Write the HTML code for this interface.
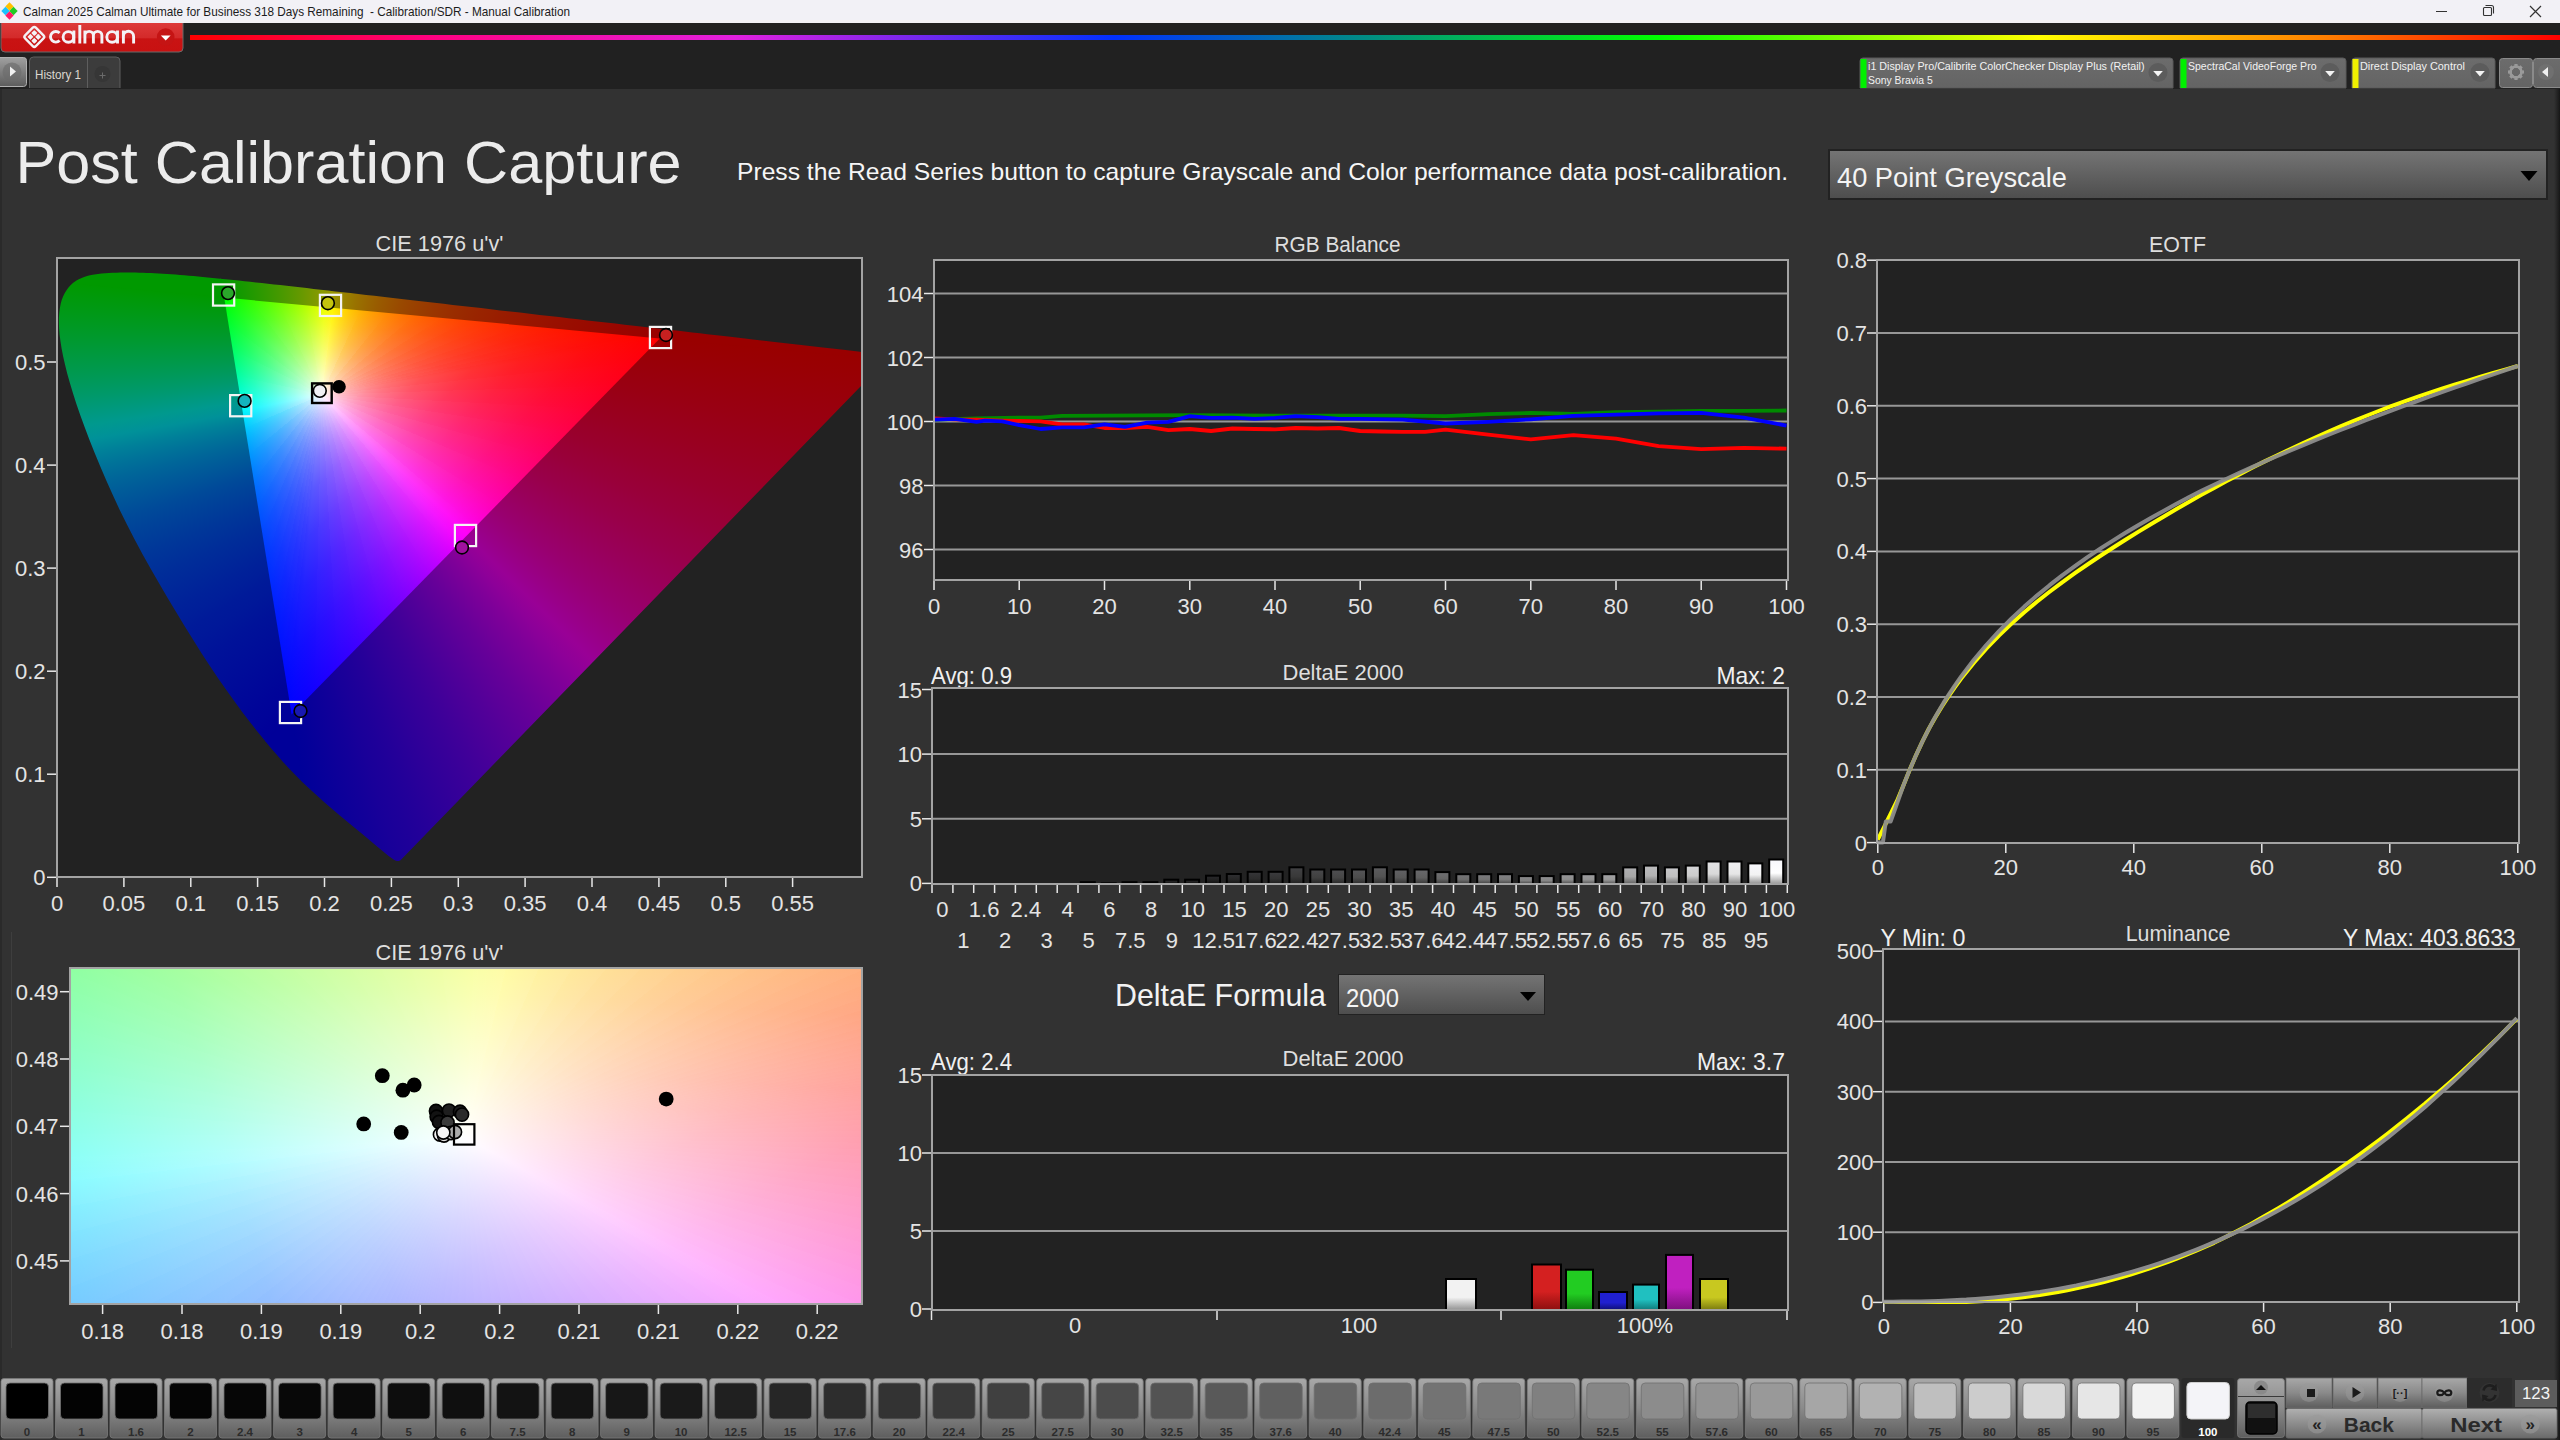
<!DOCTYPE html><html><head><meta charset="utf-8"><title>Calman</title><style>html,body{margin:0;padding:0;background:#323232;overflow:hidden}#root{position:relative;width:2560px;height:1440px;overflow:hidden}svg{position:absolute;left:0;top:0}text{font-family:"Liberation Sans",sans-serif}</style></head><body><div id="root"><svg width="2560" height="1440"><rect x="0.0" y="0.0" width="2560.0" height="1440.0" fill="#323232"/><rect x="0.0" y="23.0" width="2560.0" height="66.0" fill="#212121"/><rect x="0.0" y="89.0" width="2.0" height="1351.0" fill="#2a2a2a"/><rect x="11.0" y="932.0" width="1.0" height="416.0" fill="#3e3e3e"/><rect x="56.0" y="257.0" width="807.0" height="621.0" fill="#222222"/><rect x="69.0" y="967.0" width="794.0" height="338.0" fill="#222222"/><rect x="933.0" y="259.0" width="856.0" height="322.0" fill="#222222"/><rect x="931.0" y="687.0" width="858.0" height="198.0" fill="#222222"/><rect x="931.0" y="1074.0" width="858.0" height="237.0" fill="#222222"/><rect x="1876.0" y="259.0" width="644.0" height="585.0" fill="#222222"/><rect x="1882.0" y="948.0" width="638.0" height="355.0" fill="#222222"/></svg><div style="position:absolute;left:58px;top:259px;width:803px;height:617px;overflow:hidden"><div style="position:absolute;left:0;top:0;width:100%;height:100%;clip-path:polygon(342.5px 601.2px,342.3px 601.3px,342.1px 601.5px,341.8px 601.6px,341.4px 601.8px,341.0px 601.9px,340.5px 601.9px,339.8px 601.9px,339.0px 601.9px,338.0px 601.7px,336.3px 600.9px,333.8px 599.3px,330.3px 596.7px,325.8px 593.0px,320.0px 588.2px,312.9px 582.2px,304.3px 575.1px,293.9px 566.6px,281.5px 556.3px,266.9px 543.8px,250.1px 528.5px,245.6px 524.2px,240.8px 519.6px,235.9px 514.6px,230.6px 509.1px,225.0px 502.9px,219.0px 496.1px,212.6px 488.7px,205.9px 480.6px,198.9px 472.0px,191.7px 462.7px,184.2px 452.9px,176.6px 442.5px,168.7px 431.5px,160.6px 419.9px,152.4px 407.7px,144.0px 394.9px,135.6px 381.5px,127.0px 367.8px,118.4px 353.6px,109.8px 339.2px,101.2px 324.5px,92.7px 309.7px,84.4px 294.9px,76.4px 280.0px,68.7px 265.1px,61.5px 250.4px,54.7px 235.8px,48.3px 221.5px,42.3px 207.6px,36.7px 194.0px,31.5px 180.9px,26.7px 168.3px,22.3px 156.3px,18.4px 144.9px,14.9px 134.1px,11.9px 123.9px,9.2px 114.4px,7.0px 105.5px,5.1px 97.2px,3.6px 89.5px,2.5px 82.4px,1.6px 75.7px,1.1px 69.6px,0.9px 63.8px,0.9px 58.5px,1.3px 53.6px,1.9px 49.0px,2.7px 44.7px,3.8px 40.8px,5.2px 37.2px,6.8px 33.9px,8.7px 30.9px,10.7px 28.2px,13.0px 25.8px,15.4px 23.7px,18.0px 21.8px,20.8px 20.2px,23.7px 18.9px,26.8px 17.7px,29.9px 16.8px,33.2px 16.0px,36.5px 15.4px,40.0px 14.9px,43.5px 14.5px,47.2px 14.2px,50.8px 14.0px,54.6px 13.8px,58.4px 13.7px,62.1px 13.6px,66.0px 13.6px,69.8px 13.6px,73.6px 13.6px,77.4px 13.6px,81.2px 13.7px,85.0px 13.8px,88.9px 14.0px,92.9px 14.1px,96.8px 14.3px,100.9px 14.5px,105.0px 14.8px,109.1px 15.0px,113.3px 15.3px,117.6px 15.6px,122.0px 16.0px,126.4px 16.3px,130.9px 16.7px,135.5px 17.1px,140.2px 17.5px,144.9px 18.0px,149.7px 18.4px,154.7px 18.9px,159.7px 19.4px,164.8px 19.9px,170.0px 20.5px,175.4px 21.0px,180.8px 21.6px,186.4px 22.2px,192.1px 22.8px,197.9px 23.4px,203.8px 24.1px,209.8px 24.7px,216.0px 25.4px,222.2px 26.1px,228.6px 26.8px,235.2px 27.6px,241.9px 28.3px,248.7px 29.1px,255.6px 29.9px,262.7px 30.7px,270.0px 31.5px,277.3px 32.4px,284.8px 33.2px,292.5px 34.1px,300.3px 35.0px,308.2px 35.9px,316.3px 36.8px,324.5px 37.8px,332.8px 38.7px,341.3px 39.7px,349.9px 40.7px,358.6px 41.7px,367.5px 42.7px,376.5px 43.8px,385.6px 44.8px,394.8px 45.9px,404.2px 47.0px,413.6px 48.0px,423.1px 49.1px,432.7px 50.2px,442.4px 51.4px,452.2px 52.5px,462.0px 53.6px,471.8px 54.7px,481.6px 55.9px,491.3px 57.0px,500.9px 58.1px,510.4px 59.2px,519.9px 60.3px,529.3px 61.4px,538.6px 62.5px,548.0px 63.5px,557.4px 64.6px,566.6px 65.7px,575.8px 66.7px,584.7px 67.8px,593.5px 68.8px,602.1px 69.7px,610.4px 70.7px,618.6px 71.6px,626.5px 72.5px,634.3px 73.4px,641.9px 74.3px,649.3px 75.2px,656.5px 76.0px,663.4px 76.8px,670.2px 77.6px,676.7px 78.3px,682.9px 79.1px,689.0px 79.8px,694.8px 80.4px,721.1px 83.5px,743.3px 86.0px,762.6px 88.2px,778.8px 90.1px,791.9px 91.6px,802.2px 92.8px,810.1px 93.7px,816.1px 94.4px,820.6px 94.9px,824.0px 95.3px,826.4px 95.6px,828.1px 95.8px,829.4px 95.9px,830.4px 96.0px,831.4px 96.2px,832.8px 96.3px)"><div style="position:absolute;left:0;top:0;width:100%;height:100%;background:conic-gradient(from 224.38deg at 601.8px 79.4px,#000099 0.00deg,#000199 0.94deg,#000399 1.89deg,#000499 2.88deg,#000699 3.88deg,#000899 4.91deg,#000a99 5.96deg,#000c99 7.03deg,#000e99 8.12deg,#001099 9.24deg,#001299 10.39deg,#001599 11.55deg,#001899 12.74deg,#001a99 13.95deg,#001e99 15.18deg,#002199 16.43deg,#002599 17.70deg,#002999 18.99deg,#002d99 20.30deg,#003299 21.63deg,#003799 22.97deg,#003d99 24.33deg,#004399 25.70deg,#004a99 27.09deg,#005399 28.48deg,#005c99 29.89deg,#006699 31.30deg,#007299 32.72deg,#008099 34.15deg,#009199 35.57deg,#00998e 37.00deg,#00997c 38.43deg,#00996a 39.86deg,#00995a 41.28deg,#00994b 42.69deg,#00993d 44.10deg,#00992f 45.50deg,#009922 46.89deg,#009916 48.26deg,#00990b 49.62deg,#009900 50.97deg,#009900 205.48deg,#000099 360deg);clip-path:polygon(167.1px 37.7px,-5809.1px -522.4px,-3963.6px 4745.4px,234.7px 455.9px)"></div><div style="position:absolute;left:0;top:0;width:100%;height:100%;background:conic-gradient(from 350.81deg at 233.6px 455.6px,#009900 0.00deg,#0c9900 1.45deg,#199900 2.91deg,#279900 4.39deg,#359900 5.88deg,#449900 7.38deg,#549900 8.89deg,#659900 10.42deg,#789900 11.94deg,#8b9900 13.47deg,#999300 15.01deg,#998100 16.54deg,#997200 18.07deg,#996600 19.59deg,#995b00 21.11deg,#995200 22.62deg,#994900 24.11deg,#994200 25.60deg,#993c00 27.07deg,#993600 28.52deg,#993100 29.95deg,#992c00 31.37deg,#992800 32.76deg,#992400 34.13deg,#992100 35.48deg,#991d00 36.81deg,#991a00 38.11deg,#991800 39.38deg,#991500 40.63deg,#991300 41.86deg,#991000 43.05deg,#990e00 44.22deg,#990c00 45.37deg,#990a00 46.48deg,#990900 47.57deg,#990700 48.64deg,#990500 49.68deg,#990400 50.69deg,#990300 51.68deg,#990100 52.64deg,#990000 53.57deg,#990000 206.79deg,#009900 360deg);clip-path:polygon(602.2px 80.5px,4800.5px -4209.0px,-793.3px -5885.8px,165.3px 39.5px)"></div><div style="position:absolute;left:0;top:0;width:100%;height:100%;background:conic-gradient(from 95.35deg at 166.2px 38.6px,#990000 0.00deg,#990003 1.36deg,#990007 2.78deg,#99000b 4.25deg,#99000f 5.77deg,#990013 7.35deg,#990018 8.99deg,#99001d 10.68deg,#990022 12.42deg,#990028 14.22deg,#99002d 16.08deg,#990034 17.98deg,#99003a 19.94deg,#990042 21.94deg,#990049 23.99deg,#990052 26.08deg,#99005b 28.21deg,#990065 30.36deg,#99006f 32.54deg,#99007b 34.74deg,#990088 36.95deg,#990096 39.17deg,#8d0099 41.38deg,#7f0099 43.59deg,#730099 45.79deg,#670099 47.97deg,#5d0099 50.12deg,#530099 52.24deg,#4a0099 54.32deg,#410099 56.36deg,#390099 58.36deg,#320099 60.31deg,#2b0099 62.21deg,#240099 64.06deg,#1e0099 65.85deg,#190099 67.59deg,#130099 69.28deg,#0e0099 70.90deg,#090099 72.48deg,#040099 73.99deg,#000099 75.46deg,#000099 217.73deg,#990000 360deg);clip-path:polygon(601.4px 78.4px,6577.8px 638.4px,1191.2px 6380.7px,232.6px 455.2px)"></div><div style="position:absolute;left:0;top:0;width:100%;height:100%;background:#009900;clip-path:polygon(166.2px 38.6px,-792.1px -5884.4px,-5807.6px -521.2px)"></div><div style="position:absolute;left:0;top:0;width:100%;height:100%;background:#990000;clip-path:polygon(601.8px 79.4px,6575.6px 639.2px,4798.7px -4208.5px)"></div><div style="position:absolute;left:0;top:0;width:100%;height:100%;background:#000099;clip-path:polygon(233.6px 455.6px,-3963.2px 4743.5px,1191.9px 6378.6px)"></div><div style="position:absolute;left:0;top:0;width:100%;height:100%;background:conic-gradient(from 80.56deg at 263.6px 135.6px,#ff0000 0.00deg,#ff0005 1.11deg,#ff000a 2.28deg,#ff000f 3.51deg,#ff0015 4.81deg,#ff001a 6.19deg,#ff0020 7.63deg,#ff0027 9.16deg,#ff002d 10.78deg,#ff0034 12.48deg,#ff003c 14.28deg,#ff0043 16.17deg,#ff004c 18.17deg,#ff0054 20.27deg,#ff005d 22.48deg,#ff0067 24.80deg,#ff0071 27.23deg,#ff007c 29.77deg,#ff0088 32.41deg,#ff0095 35.15deg,#ff00a2 37.98deg,#ff00b0 40.89deg,#ff00c0 43.87deg,#ff00d1 46.91deg,#ff00e3 49.98deg,#ff00f7 53.08deg,#f300ff 56.19deg,#df00ff 59.27deg,#cd00ff 62.33deg,#bc00ff 65.34deg,#ac00ff 68.29deg,#9d00ff 71.16deg,#8f00ff 73.94deg,#8200ff 76.63deg,#7600ff 79.22deg,#6a00ff 81.70deg,#6000ff 84.07deg,#5500ff 86.33deg,#4b00ff 88.49deg,#4200ff 90.53deg,#3900ff 92.48deg,#3100ff 94.32deg,#2900ff 96.07deg,#2100ff 97.73deg,#1a00ff 99.30deg,#1300ff 100.78deg,#0c00ff 102.19deg,#0600ff 103.52deg,#0000ff 104.79deg,#0002ff 105.19deg,#0004ff 105.62deg,#0006ff 106.07deg,#0008ff 106.55deg,#000bff 107.06deg,#000dff 107.60deg,#0010ff 108.17deg,#0012ff 108.78deg,#0015ff 109.43deg,#0018ff 110.13deg,#001bff 110.88deg,#001fff 111.69deg,#0022ff 112.55deg,#0026ff 113.49deg,#002aff 114.50deg,#002eff 115.60deg,#0032ff 116.80deg,#0037ff 118.10deg,#003cff 119.53deg,#0041ff 121.10deg,#0047ff 122.83deg,#004eff 124.73deg,#0054ff 126.84deg,#005cff 129.19deg,#0064ff 131.79deg,#006cff 134.70deg,#0076ff 137.94deg,#0080ff 141.55deg,#008cff 145.56deg,#0099ff 150.01deg,#00a7ff 154.89deg,#00b7ff 160.21deg,#00caff 165.90deg,#00dfff 171.91deg,#00f7ff 178.10deg,#00ffec 184.34deg,#00ffd3 190.49deg,#00ffbb 196.41deg,#00ffa4 202.00deg,#00ff8e 207.18deg,#00ff79 211.93deg,#00ff65 216.24deg,#00ff52 220.12deg,#00ff40 223.61deg,#00ff2f 226.74deg,#00ff1f 229.55deg,#00ff0f 232.07deg,#00ff00 234.34deg,#11ff00 236.88deg,#23ff00 239.71deg,#35ff00 242.84deg,#48ff00 246.32deg,#5dff00 250.16deg,#72ff00 254.40deg,#88ff00 259.04deg,#9fff00 264.07deg,#b8ff00 269.46deg,#d2ff00 275.14deg,#edff00 281.02deg,#fff500 286.98deg,#ffdc00 292.89deg,#ffc600 298.64deg,#ffb300 304.11deg,#ffa300 309.24deg,#ff9500 313.99deg,#ff8800 318.33deg,#ff7d00 322.28deg,#ff7200 325.85deg,#ff6900 329.08deg,#ff6000 331.98deg,#ff5900 334.60deg,#ff5200 336.96deg,#ff4b00 339.10deg,#ff4500 341.03deg,#ff3f00 342.79deg,#ff3a00 344.39deg,#ff3500 345.85deg,#ff3100 347.19deg,#ff2d00 348.42deg,#ff2900 349.55deg,#ff2500 350.59deg,#ff2200 351.55deg,#ff1e00 352.45deg,#ff1b00 353.28deg,#ff1800 354.06deg,#ff1500 354.78deg,#ff1300 355.46deg,#ff1000 356.09deg,#ff0e00 356.68deg,#ff0c00 357.24deg,#ff0a00 357.77deg,#ff0700 358.27deg,#ff0500 358.74deg,#ff0400 359.18deg,#ff0200 359.60deg,#ff0000 360.00deg);clip-path:polygon(601.8px 79.4px,166.2px 38.6px,233.6px 455.6px)"></div></div></div><svg style="position:absolute;left:0;top:0" width="2560" height="1440"><style>.w stop{stop-color:#fff}</style><defs><linearGradient class="w" id="wga0" gradientUnits="userSpaceOnUse" x1="321.6" y1="394.6" x2="329.8" y2="307.5"><stop offset="0" stop-opacity="1"/><stop offset="0.005" stop-opacity="0.975"/><stop offset="0.01" stop-opacity="0.951"/><stop offset="0.02" stop-opacity="0.906"/><stop offset="0.035" stop-opacity="0.844"/><stop offset="0.05" stop-opacity="0.789"/><stop offset="0.075" stop-opacity="0.708"/><stop offset="0.1" stop-opacity="0.639"/><stop offset="0.15" stop-opacity="0.527"/><stop offset="0.2" stop-opacity="0.44"/><stop offset="0.3" stop-opacity="0.315"/><stop offset="0.45" stop-opacity="0.194"/><stop offset="0.6" stop-opacity="0.116"/><stop offset="0.8" stop-opacity="0.047"/><stop offset="1" stop-opacity="0"/></linearGradient><linearGradient class="w" id="wga1" gradientUnits="userSpaceOnUse" x1="321.6" y1="394.6" x2="329.8" y2="307.5"><stop offset="0" stop-opacity="1"/><stop offset="0.005" stop-opacity="0.977"/><stop offset="0.01" stop-opacity="0.954"/><stop offset="0.02" stop-opacity="0.911"/><stop offset="0.035" stop-opacity="0.853"/><stop offset="0.05" stop-opacity="0.8"/><stop offset="0.075" stop-opacity="0.722"/><stop offset="0.1" stop-opacity="0.654"/><stop offset="0.15" stop-opacity="0.544"/><stop offset="0.2" stop-opacity="0.457"/><stop offset="0.3" stop-opacity="0.329"/><stop offset="0.45" stop-opacity="0.204"/><stop offset="0.6" stop-opacity="0.123"/><stop offset="0.8" stop-opacity="0.05"/><stop offset="1" stop-opacity="0"/></linearGradient><linearGradient class="w" id="wga2" gradientUnits="userSpaceOnUse" x1="321.6" y1="394.6" x2="329.8" y2="307.5"><stop offset="0" stop-opacity="1"/><stop offset="0.005" stop-opacity="0.978"/><stop offset="0.01" stop-opacity="0.957"/><stop offset="0.02" stop-opacity="0.917"/><stop offset="0.035" stop-opacity="0.862"/><stop offset="0.05" stop-opacity="0.811"/><stop offset="0.075" stop-opacity="0.736"/><stop offset="0.1" stop-opacity="0.67"/><stop offset="0.15" stop-opacity="0.561"/><stop offset="0.2" stop-opacity="0.475"/><stop offset="0.3" stop-opacity="0.345"/><stop offset="0.45" stop-opacity="0.216"/><stop offset="0.6" stop-opacity="0.131"/><stop offset="0.8" stop-opacity="0.053"/><stop offset="1" stop-opacity="0"/></linearGradient><linearGradient class="w" id="wga3" gradientUnits="userSpaceOnUse" x1="321.6" y1="394.6" x2="329.8" y2="307.5"><stop offset="0" stop-opacity="1"/><stop offset="0.005" stop-opacity="0.98"/><stop offset="0.01" stop-opacity="0.96"/><stop offset="0.02" stop-opacity="0.923"/><stop offset="0.035" stop-opacity="0.871"/><stop offset="0.05" stop-opacity="0.822"/><stop offset="0.075" stop-opacity="0.75"/><stop offset="0.1" stop-opacity="0.687"/><stop offset="0.15" stop-opacity="0.58"/><stop offset="0.2" stop-opacity="0.494"/><stop offset="0.3" stop-opacity="0.363"/><stop offset="0.45" stop-opacity="0.23"/><stop offset="0.6" stop-opacity="0.14"/><stop offset="0.8" stop-opacity="0.057"/><stop offset="1" stop-opacity="0"/></linearGradient><linearGradient class="w" id="wga4" gradientUnits="userSpaceOnUse" x1="321.6" y1="394.6" x2="329.8" y2="307.5"><stop offset="0" stop-opacity="1"/><stop offset="0.005" stop-opacity="0.981"/><stop offset="0.01" stop-opacity="0.963"/><stop offset="0.02" stop-opacity="0.928"/><stop offset="0.035" stop-opacity="0.88"/><stop offset="0.05" stop-opacity="0.834"/><stop offset="0.075" stop-opacity="0.766"/><stop offset="0.1" stop-opacity="0.705"/><stop offset="0.15" stop-opacity="0.6"/><stop offset="0.2" stop-opacity="0.515"/><stop offset="0.3" stop-opacity="0.382"/><stop offset="0.45" stop-opacity="0.245"/><stop offset="0.6" stop-opacity="0.15"/><stop offset="0.8" stop-opacity="0.062"/><stop offset="1" stop-opacity="0"/></linearGradient><linearGradient class="w" id="wga5" gradientUnits="userSpaceOnUse" x1="321.6" y1="394.6" x2="329.8" y2="307.5"><stop offset="0" stop-opacity="1"/><stop offset="0.005" stop-opacity="0.983"/><stop offset="0.01" stop-opacity="0.966"/><stop offset="0.02" stop-opacity="0.934"/><stop offset="0.035" stop-opacity="0.889"/><stop offset="0.05" stop-opacity="0.847"/><stop offset="0.075" stop-opacity="0.782"/><stop offset="0.1" stop-opacity="0.723"/><stop offset="0.15" stop-opacity="0.622"/><stop offset="0.2" stop-opacity="0.537"/><stop offset="0.3" stop-opacity="0.404"/><stop offset="0.45" stop-opacity="0.262"/><stop offset="0.6" stop-opacity="0.162"/><stop offset="0.8" stop-opacity="0.068"/><stop offset="1" stop-opacity="0"/></linearGradient><linearGradient class="w" id="wga6" gradientUnits="userSpaceOnUse" x1="321.6" y1="394.6" x2="329.8" y2="307.5"><stop offset="0" stop-opacity="1"/><stop offset="0.005" stop-opacity="0.985"/><stop offset="0.01" stop-opacity="0.969"/><stop offset="0.02" stop-opacity="0.94"/><stop offset="0.035" stop-opacity="0.898"/><stop offset="0.05" stop-opacity="0.859"/><stop offset="0.075" stop-opacity="0.798"/><stop offset="0.1" stop-opacity="0.743"/><stop offset="0.15" stop-opacity="0.645"/><stop offset="0.2" stop-opacity="0.562"/><stop offset="0.3" stop-opacity="0.428"/><stop offset="0.45" stop-opacity="0.282"/><stop offset="0.6" stop-opacity="0.176"/><stop offset="0.8" stop-opacity="0.074"/><stop offset="1" stop-opacity="0"/></linearGradient><linearGradient class="w" id="wga7" gradientUnits="userSpaceOnUse" x1="321.6" y1="394.6" x2="329.8" y2="307.5"><stop offset="0" stop-opacity="1"/><stop offset="0.005" stop-opacity="0.986"/><stop offset="0.01" stop-opacity="0.973"/><stop offset="0.02" stop-opacity="0.946"/><stop offset="0.035" stop-opacity="0.908"/><stop offset="0.05" stop-opacity="0.872"/><stop offset="0.075" stop-opacity="0.816"/><stop offset="0.1" stop-opacity="0.763"/><stop offset="0.15" stop-opacity="0.67"/><stop offset="0.2" stop-opacity="0.589"/><stop offset="0.3" stop-opacity="0.456"/><stop offset="0.45" stop-opacity="0.305"/><stop offset="0.6" stop-opacity="0.193"/><stop offset="0.8" stop-opacity="0.082"/><stop offset="1" stop-opacity="0"/></linearGradient><linearGradient class="w" id="wga8" gradientUnits="userSpaceOnUse" x1="321.6" y1="394.6" x2="329.8" y2="307.5"><stop offset="0" stop-opacity="1"/><stop offset="0.005" stop-opacity="0.988"/><stop offset="0.01" stop-opacity="0.976"/><stop offset="0.02" stop-opacity="0.952"/><stop offset="0.035" stop-opacity="0.918"/><stop offset="0.05" stop-opacity="0.885"/><stop offset="0.075" stop-opacity="0.834"/><stop offset="0.1" stop-opacity="0.785"/><stop offset="0.15" stop-opacity="0.697"/><stop offset="0.2" stop-opacity="0.619"/><stop offset="0.3" stop-opacity="0.487"/><stop offset="0.45" stop-opacity="0.332"/><stop offset="0.6" stop-opacity="0.213"/><stop offset="0.8" stop-opacity="0.092"/><stop offset="1" stop-opacity="0"/></linearGradient><linearGradient class="w" id="wga9" gradientUnits="userSpaceOnUse" x1="321.6" y1="394.6" x2="329.8" y2="307.5"><stop offset="0" stop-opacity="1"/><stop offset="0.005" stop-opacity="0.989"/><stop offset="0.01" stop-opacity="0.979"/><stop offset="0.02" stop-opacity="0.958"/><stop offset="0.035" stop-opacity="0.928"/><stop offset="0.05" stop-opacity="0.899"/><stop offset="0.075" stop-opacity="0.853"/><stop offset="0.1" stop-opacity="0.808"/><stop offset="0.15" stop-opacity="0.727"/><stop offset="0.2" stop-opacity="0.652"/><stop offset="0.3" stop-opacity="0.522"/><stop offset="0.45" stop-opacity="0.364"/><stop offset="0.6" stop-opacity="0.238"/><stop offset="0.8" stop-opacity="0.105"/><stop offset="1" stop-opacity="0"/></linearGradient><linearGradient class="w" id="wga10" gradientUnits="userSpaceOnUse" x1="321.6" y1="394.6" x2="329.8" y2="307.5"><stop offset="0" stop-opacity="1"/><stop offset="0.005" stop-opacity="0.991"/><stop offset="0.01" stop-opacity="0.982"/><stop offset="0.02" stop-opacity="0.964"/><stop offset="0.035" stop-opacity="0.939"/><stop offset="0.05" stop-opacity="0.913"/><stop offset="0.075" stop-opacity="0.872"/><stop offset="0.1" stop-opacity="0.833"/><stop offset="0.15" stop-opacity="0.758"/><stop offset="0.2" stop-opacity="0.689"/><stop offset="0.3" stop-opacity="0.564"/><stop offset="0.45" stop-opacity="0.404"/><stop offset="0.6" stop-opacity="0.27"/><stop offset="0.8" stop-opacity="0.122"/><stop offset="1" stop-opacity="0"/></linearGradient><linearGradient class="w" id="wga11" gradientUnits="userSpaceOnUse" x1="321.6" y1="394.6" x2="329.8" y2="307.5"><stop offset="0" stop-opacity="1"/><stop offset="0.005" stop-opacity="0.993"/><stop offset="0.01" stop-opacity="0.985"/><stop offset="0.02" stop-opacity="0.971"/><stop offset="0.035" stop-opacity="0.949"/><stop offset="0.05" stop-opacity="0.928"/><stop offset="0.075" stop-opacity="0.893"/><stop offset="0.1" stop-opacity="0.859"/><stop offset="0.15" stop-opacity="0.793"/><stop offset="0.2" stop-opacity="0.73"/><stop offset="0.3" stop-opacity="0.612"/><stop offset="0.45" stop-opacity="0.453"/><stop offset="0.6" stop-opacity="0.311"/><stop offset="0.8" stop-opacity="0.145"/><stop offset="1" stop-opacity="0"/></linearGradient><linearGradient class="w" id="wga12" gradientUnits="userSpaceOnUse" x1="321.6" y1="394.6" x2="329.8" y2="307.5"><stop offset="0" stop-opacity="1"/><stop offset="0.005" stop-opacity="0.993"/><stop offset="0.01" stop-opacity="0.987"/><stop offset="0.02" stop-opacity="0.974"/><stop offset="0.035" stop-opacity="0.955"/><stop offset="0.05" stop-opacity="0.935"/><stop offset="0.075" stop-opacity="0.904"/><stop offset="0.1" stop-opacity="0.873"/><stop offset="0.15" stop-opacity="0.812"/><stop offset="0.2" stop-opacity="0.753"/><stop offset="0.3" stop-opacity="0.64"/><stop offset="0.45" stop-opacity="0.482"/><stop offset="0.6" stop-opacity="0.337"/><stop offset="0.8" stop-opacity="0.16"/><stop offset="1" stop-opacity="0"/></linearGradient><linearGradient class="w" id="wga13" gradientUnits="userSpaceOnUse" x1="321.6" y1="394.6" x2="329.8" y2="307.5"><stop offset="0" stop-opacity="1"/><stop offset="0.005" stop-opacity="0.993"/><stop offset="0.01" stop-opacity="0.986"/><stop offset="0.02" stop-opacity="0.972"/><stop offset="0.035" stop-opacity="0.951"/><stop offset="0.05" stop-opacity="0.931"/><stop offset="0.075" stop-opacity="0.897"/><stop offset="0.1" stop-opacity="0.864"/><stop offset="0.15" stop-opacity="0.8"/><stop offset="0.2" stop-opacity="0.738"/><stop offset="0.3" stop-opacity="0.622"/><stop offset="0.45" stop-opacity="0.463"/><stop offset="0.6" stop-opacity="0.32"/><stop offset="0.8" stop-opacity="0.15"/><stop offset="1" stop-opacity="0"/></linearGradient><linearGradient class="w" id="wga14" gradientUnits="userSpaceOnUse" x1="321.6" y1="394.6" x2="329.8" y2="307.5"><stop offset="0" stop-opacity="1"/><stop offset="0.005" stop-opacity="0.992"/><stop offset="0.01" stop-opacity="0.985"/><stop offset="0.02" stop-opacity="0.97"/><stop offset="0.035" stop-opacity="0.948"/><stop offset="0.05" stop-opacity="0.926"/><stop offset="0.075" stop-opacity="0.89"/><stop offset="0.1" stop-opacity="0.855"/><stop offset="0.15" stop-opacity="0.788"/><stop offset="0.2" stop-opacity="0.724"/><stop offset="0.3" stop-opacity="0.605"/><stop offset="0.45" stop-opacity="0.445"/><stop offset="0.6" stop-opacity="0.305"/><stop offset="0.8" stop-opacity="0.141"/><stop offset="1" stop-opacity="0"/></linearGradient><linearGradient class="w" id="wga15" gradientUnits="userSpaceOnUse" x1="321.6" y1="394.6" x2="329.8" y2="307.5"><stop offset="0" stop-opacity="1"/><stop offset="0.005" stop-opacity="0.992"/><stop offset="0.01" stop-opacity="0.984"/><stop offset="0.02" stop-opacity="0.968"/><stop offset="0.035" stop-opacity="0.944"/><stop offset="0.05" stop-opacity="0.921"/><stop offset="0.075" stop-opacity="0.883"/><stop offset="0.1" stop-opacity="0.847"/><stop offset="0.15" stop-opacity="0.777"/><stop offset="0.2" stop-opacity="0.711"/><stop offset="0.3" stop-opacity="0.589"/><stop offset="0.45" stop-opacity="0.429"/><stop offset="0.6" stop-opacity="0.291"/><stop offset="0.8" stop-opacity="0.133"/><stop offset="1" stop-opacity="0"/></linearGradient><linearGradient class="w" id="wga16" gradientUnits="userSpaceOnUse" x1="321.6" y1="394.6" x2="242.0" y2="407.5"><stop offset="0" stop-opacity="1"/><stop offset="0.005" stop-opacity="0.992"/><stop offset="0.01" stop-opacity="0.984"/><stop offset="0.02" stop-opacity="0.968"/><stop offset="0.035" stop-opacity="0.944"/><stop offset="0.05" stop-opacity="0.921"/><stop offset="0.075" stop-opacity="0.883"/><stop offset="0.1" stop-opacity="0.847"/><stop offset="0.15" stop-opacity="0.777"/><stop offset="0.2" stop-opacity="0.711"/><stop offset="0.3" stop-opacity="0.589"/><stop offset="0.45" stop-opacity="0.429"/><stop offset="0.6" stop-opacity="0.291"/><stop offset="0.8" stop-opacity="0.133"/><stop offset="1" stop-opacity="0"/></linearGradient><linearGradient class="w" id="wga17" gradientUnits="userSpaceOnUse" x1="321.6" y1="394.6" x2="242.0" y2="407.5"><stop offset="0" stop-opacity="1"/><stop offset="0.005" stop-opacity="0.992"/><stop offset="0.01" stop-opacity="0.985"/><stop offset="0.02" stop-opacity="0.97"/><stop offset="0.035" stop-opacity="0.948"/><stop offset="0.05" stop-opacity="0.926"/><stop offset="0.075" stop-opacity="0.89"/><stop offset="0.1" stop-opacity="0.855"/><stop offset="0.15" stop-opacity="0.788"/><stop offset="0.2" stop-opacity="0.724"/><stop offset="0.3" stop-opacity="0.605"/><stop offset="0.45" stop-opacity="0.445"/><stop offset="0.6" stop-opacity="0.305"/><stop offset="0.8" stop-opacity="0.141"/><stop offset="1" stop-opacity="0"/></linearGradient><linearGradient class="w" id="wga18" gradientUnits="userSpaceOnUse" x1="321.6" y1="394.6" x2="242.0" y2="407.5"><stop offset="0" stop-opacity="1"/><stop offset="0.005" stop-opacity="0.993"/><stop offset="0.01" stop-opacity="0.986"/><stop offset="0.02" stop-opacity="0.972"/><stop offset="0.035" stop-opacity="0.951"/><stop offset="0.05" stop-opacity="0.931"/><stop offset="0.075" stop-opacity="0.897"/><stop offset="0.1" stop-opacity="0.864"/><stop offset="0.15" stop-opacity="0.8"/><stop offset="0.2" stop-opacity="0.738"/><stop offset="0.3" stop-opacity="0.622"/><stop offset="0.45" stop-opacity="0.463"/><stop offset="0.6" stop-opacity="0.32"/><stop offset="0.8" stop-opacity="0.15"/><stop offset="1" stop-opacity="0"/></linearGradient><linearGradient class="w" id="wga19" gradientUnits="userSpaceOnUse" x1="321.6" y1="394.6" x2="242.0" y2="407.5"><stop offset="0" stop-opacity="1"/><stop offset="0.005" stop-opacity="0.993"/><stop offset="0.01" stop-opacity="0.987"/><stop offset="0.02" stop-opacity="0.974"/><stop offset="0.035" stop-opacity="0.955"/><stop offset="0.05" stop-opacity="0.935"/><stop offset="0.075" stop-opacity="0.904"/><stop offset="0.1" stop-opacity="0.873"/><stop offset="0.15" stop-opacity="0.812"/><stop offset="0.2" stop-opacity="0.753"/><stop offset="0.3" stop-opacity="0.64"/><stop offset="0.45" stop-opacity="0.482"/><stop offset="0.6" stop-opacity="0.337"/><stop offset="0.8" stop-opacity="0.16"/><stop offset="1" stop-opacity="0"/></linearGradient><linearGradient class="w" id="wga20" gradientUnits="userSpaceOnUse" x1="321.6" y1="394.6" x2="242.0" y2="407.5"><stop offset="0" stop-opacity="1"/><stop offset="0.005" stop-opacity="0.993"/><stop offset="0.01" stop-opacity="0.987"/><stop offset="0.02" stop-opacity="0.974"/><stop offset="0.035" stop-opacity="0.955"/><stop offset="0.05" stop-opacity="0.935"/><stop offset="0.075" stop-opacity="0.904"/><stop offset="0.1" stop-opacity="0.873"/><stop offset="0.15" stop-opacity="0.812"/><stop offset="0.2" stop-opacity="0.753"/><stop offset="0.3" stop-opacity="0.64"/><stop offset="0.45" stop-opacity="0.482"/><stop offset="0.6" stop-opacity="0.337"/><stop offset="0.8" stop-opacity="0.16"/><stop offset="1" stop-opacity="0"/></linearGradient><linearGradient class="w" id="wga21" gradientUnits="userSpaceOnUse" x1="321.6" y1="394.6" x2="242.0" y2="407.5"><stop offset="0" stop-opacity="1"/><stop offset="0.005" stop-opacity="0.992"/><stop offset="0.01" stop-opacity="0.984"/><stop offset="0.02" stop-opacity="0.968"/><stop offset="0.035" stop-opacity="0.945"/><stop offset="0.05" stop-opacity="0.922"/><stop offset="0.075" stop-opacity="0.885"/><stop offset="0.1" stop-opacity="0.849"/><stop offset="0.15" stop-opacity="0.779"/><stop offset="0.2" stop-opacity="0.714"/><stop offset="0.3" stop-opacity="0.592"/><stop offset="0.45" stop-opacity="0.432"/><stop offset="0.6" stop-opacity="0.293"/><stop offset="0.8" stop-opacity="0.135"/><stop offset="1" stop-opacity="0"/></linearGradient><linearGradient class="w" id="wga22" gradientUnits="userSpaceOnUse" x1="321.6" y1="394.6" x2="242.0" y2="407.5"><stop offset="0" stop-opacity="1"/><stop offset="0.005" stop-opacity="0.991"/><stop offset="0.01" stop-opacity="0.981"/><stop offset="0.02" stop-opacity="0.963"/><stop offset="0.035" stop-opacity="0.936"/><stop offset="0.05" stop-opacity="0.909"/><stop offset="0.075" stop-opacity="0.867"/><stop offset="0.1" stop-opacity="0.826"/><stop offset="0.15" stop-opacity="0.749"/><stop offset="0.2" stop-opacity="0.678"/><stop offset="0.3" stop-opacity="0.552"/><stop offset="0.45" stop-opacity="0.392"/><stop offset="0.6" stop-opacity="0.26"/><stop offset="0.8" stop-opacity="0.116"/><stop offset="1" stop-opacity="0"/></linearGradient><linearGradient class="w" id="wga23" gradientUnits="userSpaceOnUse" x1="321.6" y1="394.6" x2="242.0" y2="407.5"><stop offset="0" stop-opacity="1"/><stop offset="0.005" stop-opacity="0.989"/><stop offset="0.01" stop-opacity="0.978"/><stop offset="0.02" stop-opacity="0.957"/><stop offset="0.035" stop-opacity="0.926"/><stop offset="0.05" stop-opacity="0.897"/><stop offset="0.075" stop-opacity="0.849"/><stop offset="0.1" stop-opacity="0.804"/><stop offset="0.15" stop-opacity="0.721"/><stop offset="0.2" stop-opacity="0.646"/><stop offset="0.3" stop-opacity="0.516"/><stop offset="0.45" stop-opacity="0.358"/><stop offset="0.6" stop-opacity="0.233"/><stop offset="0.8" stop-opacity="0.102"/><stop offset="1" stop-opacity="0"/></linearGradient><linearGradient class="w" id="wga24" gradientUnits="userSpaceOnUse" x1="321.6" y1="394.6" x2="242.0" y2="407.5"><stop offset="0" stop-opacity="1"/><stop offset="0.005" stop-opacity="0.988"/><stop offset="0.01" stop-opacity="0.976"/><stop offset="0.02" stop-opacity="0.952"/><stop offset="0.035" stop-opacity="0.917"/><stop offset="0.05" stop-opacity="0.885"/><stop offset="0.075" stop-opacity="0.833"/><stop offset="0.1" stop-opacity="0.784"/><stop offset="0.15" stop-opacity="0.695"/><stop offset="0.2" stop-opacity="0.617"/><stop offset="0.3" stop-opacity="0.485"/><stop offset="0.45" stop-opacity="0.33"/><stop offset="0.6" stop-opacity="0.212"/><stop offset="0.8" stop-opacity="0.092"/><stop offset="1" stop-opacity="0"/></linearGradient><linearGradient class="w" id="wga25" gradientUnits="userSpaceOnUse" x1="321.6" y1="394.6" x2="242.0" y2="407.5"><stop offset="0" stop-opacity="1"/><stop offset="0.005" stop-opacity="0.986"/><stop offset="0.01" stop-opacity="0.973"/><stop offset="0.02" stop-opacity="0.946"/><stop offset="0.035" stop-opacity="0.909"/><stop offset="0.05" stop-opacity="0.873"/><stop offset="0.075" stop-opacity="0.816"/><stop offset="0.1" stop-opacity="0.764"/><stop offset="0.15" stop-opacity="0.671"/><stop offset="0.2" stop-opacity="0.591"/><stop offset="0.3" stop-opacity="0.457"/><stop offset="0.45" stop-opacity="0.306"/><stop offset="0.6" stop-opacity="0.194"/><stop offset="0.8" stop-opacity="0.083"/><stop offset="1" stop-opacity="0"/></linearGradient><linearGradient class="w" id="wga26" gradientUnits="userSpaceOnUse" x1="321.6" y1="394.6" x2="242.0" y2="407.5"><stop offset="0" stop-opacity="1"/><stop offset="0.005" stop-opacity="0.985"/><stop offset="0.01" stop-opacity="0.97"/><stop offset="0.02" stop-opacity="0.941"/><stop offset="0.035" stop-opacity="0.9"/><stop offset="0.05" stop-opacity="0.861"/><stop offset="0.075" stop-opacity="0.801"/><stop offset="0.1" stop-opacity="0.746"/><stop offset="0.15" stop-opacity="0.649"/><stop offset="0.2" stop-opacity="0.566"/><stop offset="0.3" stop-opacity="0.432"/><stop offset="0.45" stop-opacity="0.285"/><stop offset="0.6" stop-opacity="0.179"/><stop offset="0.8" stop-opacity="0.075"/><stop offset="1" stop-opacity="0"/></linearGradient><linearGradient class="w" id="wga27" gradientUnits="userSpaceOnUse" x1="321.6" y1="394.6" x2="242.0" y2="407.5"><stop offset="0" stop-opacity="1"/><stop offset="0.005" stop-opacity="0.983"/><stop offset="0.01" stop-opacity="0.967"/><stop offset="0.02" stop-opacity="0.936"/><stop offset="0.035" stop-opacity="0.891"/><stop offset="0.05" stop-opacity="0.85"/><stop offset="0.075" stop-opacity="0.786"/><stop offset="0.1" stop-opacity="0.728"/><stop offset="0.15" stop-opacity="0.628"/><stop offset="0.2" stop-opacity="0.544"/><stop offset="0.3" stop-opacity="0.41"/><stop offset="0.45" stop-opacity="0.267"/><stop offset="0.6" stop-opacity="0.166"/><stop offset="0.8" stop-opacity="0.069"/><stop offset="1" stop-opacity="0"/></linearGradient><linearGradient class="w" id="wga28" gradientUnits="userSpaceOnUse" x1="321.6" y1="394.6" x2="242.0" y2="407.5"><stop offset="0" stop-opacity="1"/><stop offset="0.005" stop-opacity="0.982"/><stop offset="0.01" stop-opacity="0.964"/><stop offset="0.02" stop-opacity="0.931"/><stop offset="0.035" stop-opacity="0.883"/><stop offset="0.05" stop-opacity="0.839"/><stop offset="0.075" stop-opacity="0.772"/><stop offset="0.1" stop-opacity="0.712"/><stop offset="0.15" stop-opacity="0.608"/><stop offset="0.2" stop-opacity="0.523"/><stop offset="0.3" stop-opacity="0.39"/><stop offset="0.45" stop-opacity="0.251"/><stop offset="0.6" stop-opacity="0.154"/><stop offset="0.8" stop-opacity="0.064"/><stop offset="1" stop-opacity="0"/></linearGradient><linearGradient class="w" id="wga29" gradientUnits="userSpaceOnUse" x1="321.6" y1="394.6" x2="242.0" y2="407.5"><stop offset="0" stop-opacity="1"/><stop offset="0.005" stop-opacity="0.981"/><stop offset="0.01" stop-opacity="0.962"/><stop offset="0.02" stop-opacity="0.926"/><stop offset="0.035" stop-opacity="0.875"/><stop offset="0.05" stop-opacity="0.828"/><stop offset="0.075" stop-opacity="0.758"/><stop offset="0.1" stop-opacity="0.695"/><stop offset="0.15" stop-opacity="0.59"/><stop offset="0.2" stop-opacity="0.504"/><stop offset="0.3" stop-opacity="0.372"/><stop offset="0.45" stop-opacity="0.237"/><stop offset="0.6" stop-opacity="0.145"/><stop offset="0.8" stop-opacity="0.06"/><stop offset="1" stop-opacity="0"/></linearGradient><linearGradient class="w" id="wga30" gradientUnits="userSpaceOnUse" x1="321.6" y1="394.6" x2="242.0" y2="407.5"><stop offset="0" stop-opacity="1"/><stop offset="0.005" stop-opacity="0.979"/><stop offset="0.01" stop-opacity="0.959"/><stop offset="0.02" stop-opacity="0.92"/><stop offset="0.035" stop-opacity="0.867"/><stop offset="0.05" stop-opacity="0.818"/><stop offset="0.075" stop-opacity="0.745"/><stop offset="0.1" stop-opacity="0.68"/><stop offset="0.15" stop-opacity="0.572"/><stop offset="0.2" stop-opacity="0.486"/><stop offset="0.3" stop-opacity="0.355"/><stop offset="0.45" stop-opacity="0.224"/><stop offset="0.6" stop-opacity="0.136"/><stop offset="0.8" stop-opacity="0.056"/><stop offset="1" stop-opacity="0"/></linearGradient><linearGradient class="w" id="wga31" gradientUnits="userSpaceOnUse" x1="321.6" y1="394.6" x2="242.0" y2="407.5"><stop offset="0" stop-opacity="1"/><stop offset="0.005" stop-opacity="0.978"/><stop offset="0.01" stop-opacity="0.956"/><stop offset="0.02" stop-opacity="0.915"/><stop offset="0.035" stop-opacity="0.859"/><stop offset="0.05" stop-opacity="0.808"/><stop offset="0.075" stop-opacity="0.732"/><stop offset="0.1" stop-opacity="0.665"/><stop offset="0.15" stop-opacity="0.556"/><stop offset="0.2" stop-opacity="0.469"/><stop offset="0.3" stop-opacity="0.34"/><stop offset="0.45" stop-opacity="0.213"/><stop offset="0.6" stop-opacity="0.128"/><stop offset="0.8" stop-opacity="0.052"/><stop offset="1" stop-opacity="0"/></linearGradient><linearGradient class="w" id="wga32" gradientUnits="userSpaceOnUse" x1="321.6" y1="394.6" x2="466.2" y2="536.2"><stop offset="0" stop-opacity="1"/><stop offset="0.005" stop-opacity="0.978"/><stop offset="0.01" stop-opacity="0.956"/><stop offset="0.02" stop-opacity="0.915"/><stop offset="0.035" stop-opacity="0.859"/><stop offset="0.05" stop-opacity="0.808"/><stop offset="0.075" stop-opacity="0.732"/><stop offset="0.1" stop-opacity="0.665"/><stop offset="0.15" stop-opacity="0.556"/><stop offset="0.2" stop-opacity="0.469"/><stop offset="0.3" stop-opacity="0.34"/><stop offset="0.45" stop-opacity="0.213"/><stop offset="0.6" stop-opacity="0.128"/><stop offset="0.8" stop-opacity="0.052"/><stop offset="1" stop-opacity="0"/></linearGradient><linearGradient class="w" id="wga33" gradientUnits="userSpaceOnUse" x1="321.6" y1="394.6" x2="466.2" y2="536.2"><stop offset="0" stop-opacity="1"/><stop offset="0.005" stop-opacity="0.979"/><stop offset="0.01" stop-opacity="0.959"/><stop offset="0.02" stop-opacity="0.92"/><stop offset="0.035" stop-opacity="0.867"/><stop offset="0.05" stop-opacity="0.818"/><stop offset="0.075" stop-opacity="0.745"/><stop offset="0.1" stop-opacity="0.68"/><stop offset="0.15" stop-opacity="0.572"/><stop offset="0.2" stop-opacity="0.486"/><stop offset="0.3" stop-opacity="0.355"/><stop offset="0.45" stop-opacity="0.224"/><stop offset="0.6" stop-opacity="0.136"/><stop offset="0.8" stop-opacity="0.056"/><stop offset="1" stop-opacity="0"/></linearGradient><linearGradient class="w" id="wga34" gradientUnits="userSpaceOnUse" x1="321.6" y1="394.6" x2="466.2" y2="536.2"><stop offset="0" stop-opacity="1"/><stop offset="0.005" stop-opacity="0.981"/><stop offset="0.01" stop-opacity="0.962"/><stop offset="0.02" stop-opacity="0.926"/><stop offset="0.035" stop-opacity="0.875"/><stop offset="0.05" stop-opacity="0.828"/><stop offset="0.075" stop-opacity="0.758"/><stop offset="0.1" stop-opacity="0.695"/><stop offset="0.15" stop-opacity="0.59"/><stop offset="0.2" stop-opacity="0.504"/><stop offset="0.3" stop-opacity="0.372"/><stop offset="0.45" stop-opacity="0.237"/><stop offset="0.6" stop-opacity="0.145"/><stop offset="0.8" stop-opacity="0.06"/><stop offset="1" stop-opacity="0"/></linearGradient><linearGradient class="w" id="wga35" gradientUnits="userSpaceOnUse" x1="321.6" y1="394.6" x2="466.2" y2="536.2"><stop offset="0" stop-opacity="1"/><stop offset="0.005" stop-opacity="0.982"/><stop offset="0.01" stop-opacity="0.964"/><stop offset="0.02" stop-opacity="0.931"/><stop offset="0.035" stop-opacity="0.883"/><stop offset="0.05" stop-opacity="0.839"/><stop offset="0.075" stop-opacity="0.772"/><stop offset="0.1" stop-opacity="0.712"/><stop offset="0.15" stop-opacity="0.608"/><stop offset="0.2" stop-opacity="0.523"/><stop offset="0.3" stop-opacity="0.39"/><stop offset="0.45" stop-opacity="0.251"/><stop offset="0.6" stop-opacity="0.154"/><stop offset="0.8" stop-opacity="0.064"/><stop offset="1" stop-opacity="0"/></linearGradient><linearGradient class="w" id="wga36" gradientUnits="userSpaceOnUse" x1="321.6" y1="394.6" x2="466.2" y2="536.2"><stop offset="0" stop-opacity="1"/><stop offset="0.005" stop-opacity="0.983"/><stop offset="0.01" stop-opacity="0.967"/><stop offset="0.02" stop-opacity="0.936"/><stop offset="0.035" stop-opacity="0.891"/><stop offset="0.05" stop-opacity="0.85"/><stop offset="0.075" stop-opacity="0.786"/><stop offset="0.1" stop-opacity="0.728"/><stop offset="0.15" stop-opacity="0.628"/><stop offset="0.2" stop-opacity="0.544"/><stop offset="0.3" stop-opacity="0.41"/><stop offset="0.45" stop-opacity="0.267"/><stop offset="0.6" stop-opacity="0.166"/><stop offset="0.8" stop-opacity="0.069"/><stop offset="1" stop-opacity="0"/></linearGradient><linearGradient class="w" id="wga37" gradientUnits="userSpaceOnUse" x1="321.6" y1="394.6" x2="466.2" y2="536.2"><stop offset="0" stop-opacity="1"/><stop offset="0.005" stop-opacity="0.985"/><stop offset="0.01" stop-opacity="0.97"/><stop offset="0.02" stop-opacity="0.941"/><stop offset="0.035" stop-opacity="0.9"/><stop offset="0.05" stop-opacity="0.861"/><stop offset="0.075" stop-opacity="0.801"/><stop offset="0.1" stop-opacity="0.746"/><stop offset="0.15" stop-opacity="0.649"/><stop offset="0.2" stop-opacity="0.566"/><stop offset="0.3" stop-opacity="0.432"/><stop offset="0.45" stop-opacity="0.285"/><stop offset="0.6" stop-opacity="0.179"/><stop offset="0.8" stop-opacity="0.075"/><stop offset="1" stop-opacity="0"/></linearGradient><linearGradient class="w" id="wga38" gradientUnits="userSpaceOnUse" x1="321.6" y1="394.6" x2="466.2" y2="536.2"><stop offset="0" stop-opacity="1"/><stop offset="0.005" stop-opacity="0.986"/><stop offset="0.01" stop-opacity="0.973"/><stop offset="0.02" stop-opacity="0.946"/><stop offset="0.035" stop-opacity="0.909"/><stop offset="0.05" stop-opacity="0.873"/><stop offset="0.075" stop-opacity="0.816"/><stop offset="0.1" stop-opacity="0.764"/><stop offset="0.15" stop-opacity="0.671"/><stop offset="0.2" stop-opacity="0.591"/><stop offset="0.3" stop-opacity="0.457"/><stop offset="0.45" stop-opacity="0.306"/><stop offset="0.6" stop-opacity="0.194"/><stop offset="0.8" stop-opacity="0.083"/><stop offset="1" stop-opacity="0"/></linearGradient><linearGradient class="w" id="wga39" gradientUnits="userSpaceOnUse" x1="321.6" y1="394.6" x2="466.2" y2="536.2"><stop offset="0" stop-opacity="1"/><stop offset="0.005" stop-opacity="0.988"/><stop offset="0.01" stop-opacity="0.976"/><stop offset="0.02" stop-opacity="0.952"/><stop offset="0.035" stop-opacity="0.917"/><stop offset="0.05" stop-opacity="0.884"/><stop offset="0.075" stop-opacity="0.833"/><stop offset="0.1" stop-opacity="0.784"/><stop offset="0.15" stop-opacity="0.695"/><stop offset="0.2" stop-opacity="0.617"/><stop offset="0.3" stop-opacity="0.485"/><stop offset="0.45" stop-opacity="0.33"/><stop offset="0.6" stop-opacity="0.212"/><stop offset="0.8" stop-opacity="0.092"/><stop offset="1" stop-opacity="0"/></linearGradient><linearGradient class="w" id="wga40" gradientUnits="userSpaceOnUse" x1="321.6" y1="394.6" x2="466.2" y2="536.2"><stop offset="0" stop-opacity="1"/><stop offset="0.005" stop-opacity="0.986"/><stop offset="0.01" stop-opacity="0.973"/><stop offset="0.02" stop-opacity="0.946"/><stop offset="0.035" stop-opacity="0.908"/><stop offset="0.05" stop-opacity="0.872"/><stop offset="0.075" stop-opacity="0.816"/><stop offset="0.1" stop-opacity="0.763"/><stop offset="0.15" stop-opacity="0.67"/><stop offset="0.2" stop-opacity="0.589"/><stop offset="0.3" stop-opacity="0.456"/><stop offset="0.45" stop-opacity="0.305"/><stop offset="0.6" stop-opacity="0.193"/><stop offset="0.8" stop-opacity="0.082"/><stop offset="1" stop-opacity="0"/></linearGradient><linearGradient class="w" id="wga41" gradientUnits="userSpaceOnUse" x1="321.6" y1="394.6" x2="466.2" y2="536.2"><stop offset="0" stop-opacity="1"/><stop offset="0.005" stop-opacity="0.985"/><stop offset="0.01" stop-opacity="0.969"/><stop offset="0.02" stop-opacity="0.94"/><stop offset="0.035" stop-opacity="0.898"/><stop offset="0.05" stop-opacity="0.859"/><stop offset="0.075" stop-opacity="0.798"/><stop offset="0.1" stop-opacity="0.743"/><stop offset="0.15" stop-opacity="0.645"/><stop offset="0.2" stop-opacity="0.562"/><stop offset="0.3" stop-opacity="0.428"/><stop offset="0.45" stop-opacity="0.282"/><stop offset="0.6" stop-opacity="0.176"/><stop offset="0.8" stop-opacity="0.074"/><stop offset="1" stop-opacity="0"/></linearGradient><linearGradient class="w" id="wga42" gradientUnits="userSpaceOnUse" x1="321.6" y1="394.6" x2="466.2" y2="536.2"><stop offset="0" stop-opacity="1"/><stop offset="0.005" stop-opacity="0.983"/><stop offset="0.01" stop-opacity="0.966"/><stop offset="0.02" stop-opacity="0.934"/><stop offset="0.035" stop-opacity="0.889"/><stop offset="0.05" stop-opacity="0.847"/><stop offset="0.075" stop-opacity="0.782"/><stop offset="0.1" stop-opacity="0.723"/><stop offset="0.15" stop-opacity="0.622"/><stop offset="0.2" stop-opacity="0.537"/><stop offset="0.3" stop-opacity="0.404"/><stop offset="0.45" stop-opacity="0.262"/><stop offset="0.6" stop-opacity="0.162"/><stop offset="0.8" stop-opacity="0.068"/><stop offset="1" stop-opacity="0"/></linearGradient><linearGradient class="w" id="wga43" gradientUnits="userSpaceOnUse" x1="321.6" y1="394.6" x2="466.2" y2="536.2"><stop offset="0" stop-opacity="1"/><stop offset="0.005" stop-opacity="0.981"/><stop offset="0.01" stop-opacity="0.963"/><stop offset="0.02" stop-opacity="0.928"/><stop offset="0.035" stop-opacity="0.88"/><stop offset="0.05" stop-opacity="0.834"/><stop offset="0.075" stop-opacity="0.766"/><stop offset="0.1" stop-opacity="0.705"/><stop offset="0.15" stop-opacity="0.6"/><stop offset="0.2" stop-opacity="0.515"/><stop offset="0.3" stop-opacity="0.382"/><stop offset="0.45" stop-opacity="0.245"/><stop offset="0.6" stop-opacity="0.15"/><stop offset="0.8" stop-opacity="0.062"/><stop offset="1" stop-opacity="0"/></linearGradient><linearGradient class="w" id="wga44" gradientUnits="userSpaceOnUse" x1="321.6" y1="394.6" x2="466.2" y2="536.2"><stop offset="0" stop-opacity="1"/><stop offset="0.005" stop-opacity="0.98"/><stop offset="0.01" stop-opacity="0.96"/><stop offset="0.02" stop-opacity="0.923"/><stop offset="0.035" stop-opacity="0.871"/><stop offset="0.05" stop-opacity="0.822"/><stop offset="0.075" stop-opacity="0.75"/><stop offset="0.1" stop-opacity="0.687"/><stop offset="0.15" stop-opacity="0.58"/><stop offset="0.2" stop-opacity="0.494"/><stop offset="0.3" stop-opacity="0.363"/><stop offset="0.45" stop-opacity="0.23"/><stop offset="0.6" stop-opacity="0.14"/><stop offset="0.8" stop-opacity="0.057"/><stop offset="1" stop-opacity="0"/></linearGradient><linearGradient class="w" id="wga45" gradientUnits="userSpaceOnUse" x1="321.6" y1="394.6" x2="466.2" y2="536.2"><stop offset="0" stop-opacity="1"/><stop offset="0.005" stop-opacity="0.978"/><stop offset="0.01" stop-opacity="0.957"/><stop offset="0.02" stop-opacity="0.917"/><stop offset="0.035" stop-opacity="0.862"/><stop offset="0.05" stop-opacity="0.811"/><stop offset="0.075" stop-opacity="0.736"/><stop offset="0.1" stop-opacity="0.67"/><stop offset="0.15" stop-opacity="0.561"/><stop offset="0.2" stop-opacity="0.475"/><stop offset="0.3" stop-opacity="0.345"/><stop offset="0.45" stop-opacity="0.216"/><stop offset="0.6" stop-opacity="0.131"/><stop offset="0.8" stop-opacity="0.053"/><stop offset="1" stop-opacity="0"/></linearGradient><linearGradient class="w" id="wga46" gradientUnits="userSpaceOnUse" x1="321.6" y1="394.6" x2="466.2" y2="536.2"><stop offset="0" stop-opacity="1"/><stop offset="0.005" stop-opacity="0.977"/><stop offset="0.01" stop-opacity="0.954"/><stop offset="0.02" stop-opacity="0.911"/><stop offset="0.035" stop-opacity="0.853"/><stop offset="0.05" stop-opacity="0.8"/><stop offset="0.075" stop-opacity="0.722"/><stop offset="0.1" stop-opacity="0.654"/><stop offset="0.15" stop-opacity="0.544"/><stop offset="0.2" stop-opacity="0.457"/><stop offset="0.3" stop-opacity="0.329"/><stop offset="0.45" stop-opacity="0.204"/><stop offset="0.6" stop-opacity="0.123"/><stop offset="0.8" stop-opacity="0.05"/><stop offset="1" stop-opacity="0"/></linearGradient><linearGradient class="w" id="wga47" gradientUnits="userSpaceOnUse" x1="321.6" y1="394.6" x2="466.2" y2="536.2"><stop offset="0" stop-opacity="1"/><stop offset="0.005" stop-opacity="0.975"/><stop offset="0.01" stop-opacity="0.951"/><stop offset="0.02" stop-opacity="0.906"/><stop offset="0.035" stop-opacity="0.844"/><stop offset="0.05" stop-opacity="0.789"/><stop offset="0.075" stop-opacity="0.708"/><stop offset="0.1" stop-opacity="0.639"/><stop offset="0.15" stop-opacity="0.527"/><stop offset="0.2" stop-opacity="0.44"/><stop offset="0.3" stop-opacity="0.315"/><stop offset="0.45" stop-opacity="0.194"/><stop offset="0.6" stop-opacity="0.116"/><stop offset="0.8" stop-opacity="0.047"/><stop offset="1" stop-opacity="0"/></linearGradient><clipPath id="cba"><rect x="58" y="259" width="803" height="617"/></clipPath></defs><g clip-path="url(#cba)" shape-rendering="crispEdges"><polygon points="321.60,394.65 659.82,338.41 632.59,335.86" fill="url(#wga0)"/><polygon points="321.60,394.65 632.59,335.86 605.36,333.31" fill="url(#wga1)"/><polygon points="321.60,394.65 605.36,333.31 578.14,330.76" fill="url(#wga2)"/><polygon points="321.60,394.65 578.14,330.76 550.91,328.21" fill="url(#wga3)"/><polygon points="321.60,394.65 550.91,328.21 523.68,325.65" fill="url(#wga4)"/><polygon points="321.60,394.65 523.68,325.65 496.46,323.10" fill="url(#wga5)"/><polygon points="321.60,394.65 496.46,323.10 469.23,320.55" fill="url(#wga6)"/><polygon points="321.60,394.65 469.23,320.55 442.00,318.00" fill="url(#wga7)"/><polygon points="321.60,394.65 442.00,318.00 414.78,315.45" fill="url(#wga8)"/><polygon points="321.60,394.65 414.78,315.45 387.55,312.90" fill="url(#wga9)"/><polygon points="321.60,394.65 387.55,312.90 360.32,310.35" fill="url(#wga10)"/><polygon points="321.60,394.65 360.32,310.35 333.09,307.79" fill="url(#wga11)"/><polygon points="321.60,394.65 333.09,307.79 305.87,305.24" fill="url(#wga12)"/><polygon points="321.60,394.65 305.87,305.24 278.64,302.69" fill="url(#wga13)"/><polygon points="321.60,394.65 278.64,302.69 251.41,300.14" fill="url(#wga14)"/><polygon points="321.60,394.65 251.41,300.14 224.19,297.59" fill="url(#wga15)"/><polygon points="321.60,394.65 224.19,297.59 228.40,323.65" fill="url(#wga16)"/><polygon points="321.60,394.65 228.40,323.65 232.62,349.71" fill="url(#wga17)"/><polygon points="321.60,394.65 232.62,349.71 236.84,375.77" fill="url(#wga18)"/><polygon points="321.60,394.65 236.84,375.77 241.05,401.83" fill="url(#wga19)"/><polygon points="321.60,394.65 241.05,401.83 245.27,427.90" fill="url(#wga20)"/><polygon points="321.60,394.65 245.27,427.90 249.49,453.96" fill="url(#wga21)"/><polygon points="321.60,394.65 249.49,453.96 253.70,480.02" fill="url(#wga22)"/><polygon points="321.60,394.65 253.70,480.02 257.92,506.08" fill="url(#wga23)"/><polygon points="321.60,394.65 257.92,506.08 262.13,532.14" fill="url(#wga24)"/><polygon points="321.60,394.65 262.13,532.14 266.35,558.20" fill="url(#wga25)"/><polygon points="321.60,394.65 266.35,558.20 270.57,584.27" fill="url(#wga26)"/><polygon points="321.60,394.65 270.57,584.27 274.78,610.33" fill="url(#wga27)"/><polygon points="321.60,394.65 274.78,610.33 279.00,636.39" fill="url(#wga28)"/><polygon points="321.60,394.65 279.00,636.39 283.22,662.45" fill="url(#wga29)"/><polygon points="321.60,394.65 283.22,662.45 287.43,688.51" fill="url(#wga30)"/><polygon points="321.60,394.65 287.43,688.51 291.65,714.57" fill="url(#wga31)"/><polygon points="321.60,394.65 291.65,714.57 314.66,691.06" fill="url(#wga32)"/><polygon points="321.60,394.65 314.66,691.06 337.67,667.55" fill="url(#wga33)"/><polygon points="321.60,394.65 337.67,667.55 360.68,644.04" fill="url(#wga34)"/><polygon points="321.60,394.65 360.68,644.04 383.69,620.53" fill="url(#wga35)"/><polygon points="321.60,394.65 383.69,620.53 406.70,597.02" fill="url(#wga36)"/><polygon points="321.60,394.65 406.70,597.02 429.71,573.51" fill="url(#wga37)"/><polygon points="321.60,394.65 429.71,573.51 452.72,550.00" fill="url(#wga38)"/><polygon points="321.60,394.65 452.72,550.00 475.73,526.49" fill="url(#wga39)"/><polygon points="321.60,394.65 475.73,526.49 498.74,502.98" fill="url(#wga40)"/><polygon points="321.60,394.65 498.74,502.98 521.75,479.47" fill="url(#wga41)"/><polygon points="321.60,394.65 521.75,479.47 544.76,455.96" fill="url(#wga42)"/><polygon points="321.60,394.65 544.76,455.96 567.77,432.45" fill="url(#wga43)"/><polygon points="321.60,394.65 567.77,432.45 590.79,408.94" fill="url(#wga44)"/><polygon points="321.60,394.65 590.79,408.94 613.80,385.43" fill="url(#wga45)"/><polygon points="321.60,394.65 613.80,385.43 636.81,361.92" fill="url(#wga46)"/><polygon points="321.60,394.65 636.81,361.92 659.82,338.41" fill="url(#wga47)"/></g></svg><div style="position:absolute;left:71px;top:969px;width:790px;height:334px;overflow:hidden"><div style="position:absolute;left:0;top:0;width:100%;height:100%;clip-path:polygon(1330.6px 3208.7px,1328.7px 3209.4px,1326.1px 3210.4px,1322.7px 3211.5px,1318.4px 3212.5px,1313.1px 3213.2px,1306.7px 3213.4px,1299.0px 3213.3px,1289.8px 3213.1px,1277.2px 3211.7px,1257.7px 3206.8px,1227.9px 3196.3px,1186.5px 3179.3px,1132.2px 3155.1px,1063.7px 3123.6px,979.5px 3084.8px,877.5px 3038.4px,754.3px 2982.7px,606.5px 2915.4px,432.8px 2833.7px,233.6px 2734.1px,179.9px 2706.0px,124.0px 2675.9px,65.1px 2643.1px,2.5px 2607.0px,-64.3px 2567.0px,-135.6px 2522.7px,-211.1px 2474.1px,-290.6px 2421.4px,-373.5px 2364.7px,-459.5px 2304.3px,-548.0px 2240.2px,-639.1px 2172.4px,-732.7px 2100.6px,-828.4px 2024.8px,-926.1px 1945.0px,-1025.4px 1861.3px,-1126.0px 1774.3px,-1227.6px 1684.4px,-1329.8px 1592.0px,-1432.3px 1497.7px,-1534.5px 1402.1px,-1635.3px 1305.5px,-1733.7px 1208.4px,-1828.7px 1111.1px,-1919.5px 1014.1px,-2005.5px 917.8px,-2086.5px 822.7px,-2162.5px 729.4px,-2233.8px 638.3px,-2300.2px 549.8px,-2362.1px 464.1px,-2419.0px 381.8px,-2470.8px 303.3px,-2517.3px 228.7px,-2558.6px 158.4px,-2594.7px 92.1px,-2625.9px 30.0px,-2652.4px -28.1px,-2674.4px -82.2px,-2692.2px -132.5px,-2706.1px -179.2px,-2716.0px -222.6px,-2722.4px -262.9px,-2725.2px -300.3px,-2724.6px -335.1px,-2720.6px -367.4px,-2713.5px -397.4px,-2703.2px -425.2px,-2689.9px -450.8px,-2673.7px -474.3px,-2654.4px -495.8px,-2632.5px -515.3px,-2608.0px -532.9px,-2581.3px -548.7px,-2552.3px -562.6px,-2521.3px -574.7px,-2488.5px -585.1px,-2453.9px -594.0px,-2417.8px -601.5px,-2380.3px -607.7px,-2341.6px -612.7px,-2301.6px -616.8px,-2260.6px -620.0px,-2218.5px -622.4px,-2175.6px -624.3px,-2131.9px -625.8px,-2087.5px -626.9px,-2042.7px -627.7px,-1997.7px -628.2px,-1952.5px -628.5px,-1907.3px -628.5px,-1862.2px -628.4px,-1816.9px -628.1px,-1771.5px -627.6px,-1725.8px -626.9px,-1679.6px -626.0px,-1632.9px -625.0px,-1585.7px -623.8px,-1537.9px -622.4px,-1489.3px -620.8px,-1440.0px -619.1px,-1389.9px -617.2px,-1338.9px -615.2px,-1287.1px -613.0px,-1234.5px -610.7px,-1181.1px -608.2px,-1126.7px -605.6px,-1071.4px -602.8px,-1015.1px -599.9px,-957.7px -596.9px,-899.3px -593.8px,-839.7px -590.5px,-778.9px -587.1px,-716.8px -583.6px,-653.5px -580.0px,-588.8px -576.2px,-522.7px -572.4px,-455.2px -568.4px,-386.4px -564.3px,-316.2px -560.1px,-244.5px -555.7px,-171.5px -551.2px,-97.0px -546.6px,-20.9px -541.9px,56.8px -537.1px,136.1px -532.2px,217.1px -527.2px,299.7px -522.0px,384.0px -516.8px,469.8px -511.4px,557.3px -505.9px,646.4px -500.3px,737.1px -494.6px,829.5px -488.7px,923.6px -482.8px,1019.3px -476.7px,1116.7px -470.5px,1215.7px -464.2px,1316.3px -457.9px,1418.6px -451.4px,1522.4px -444.8px,1627.8px -438.1px,1734.6px -431.3px,1842.9px -424.4px,1952.4px -417.5px,2063.2px -410.5px,2175.1px -403.5px,2288.2px -396.3px,2402.2px -389.2px,2517.3px -381.9px,2633.1px -374.5px,2749.5px -367.1px,2865.9px -359.7px,2982.1px -352.3px,3097.4px -344.9px,3211.5px -337.7px,3324.6px -330.5px,3436.8px -323.4px,3548.4px -316.4px,3659.8px -309.3px,3771.1px -302.3px,3882.0px -295.2px,3992.0px -288.3px,4100.6px -281.4px,4207.1px -274.7px,4311.2px -268.1px,4412.7px -261.8px,4511.8px -255.6px,4608.5px -249.5px,4703.0px -243.5px,4795.4px -237.7px,4885.5px -232.0px,4973.3px -226.4px,5058.6px -220.9px,5141.3px -215.7px,5221.2px -210.6px,5298.4px -205.7px,5373.0px -200.9px,5444.9px -196.3px,5514.3px -191.9px,5826.3px -172.2px,6089.9px -155.6px,6318.2px -141.1px,6511.2px -128.8px,6666.7px -119.0px,6788.5px -111.4px,6882.1px -105.5px,6953.4px -100.9px,7007.4px -97.5px,7047.5px -94.9px,7076.2px -93.1px,7096.6px -91.8px,7111.4px -90.9px,7123.6px -90.1px,7136.1px -89.3px,7152.1px -88.3px)"><div style="position:absolute;left:0;top:0;width:100%;height:100%;background:conic-gradient(from 240.67deg at 4409.8px -198.6px,#000099 0.00deg,#000199 0.79deg,#000399 1.59deg,#000499 2.39deg,#000699 3.20deg,#000899 4.01deg,#000a99 4.82deg,#000c99 5.64deg,#000e99 6.46deg,#001099 7.28deg,#001299 8.11deg,#001599 8.93deg,#001899 9.76deg,#001a99 10.59deg,#001e99 11.42deg,#002199 12.25deg,#002599 13.09deg,#002999 13.92deg,#002d99 14.75deg,#003299 15.58deg,#003799 16.41deg,#003d99 17.24deg,#004399 18.06deg,#004a99 18.89deg,#005399 19.71deg,#005c99 20.53deg,#006699 21.35deg,#007299 22.16deg,#008099 22.97deg,#009199 23.77deg,#00998e 24.57deg,#00997c 25.37deg,#00996a 26.16deg,#00995a 26.94deg,#00994b 27.73deg,#00993d 28.50deg,#00992f 29.27deg,#009922 30.03deg,#009916 30.79deg,#00990b 31.54deg,#009900 32.28deg,#009900 196.14deg,#000099 360deg);clip-path:polygon(-761.6px -466.2px,-6755.8px -775.1px,-5192.8px 5198.7px,39.7px 2258.3px)"></div><div style="position:absolute;left:0;top:0;width:100%;height:100%;background:conic-gradient(from 343.61deg at 38.6px 2257.8px,#009900 0.00deg,#0c9900 2.50deg,#199900 5.07deg,#279900 7.70deg,#359900 10.38deg,#449900 13.10deg,#549900 15.85deg,#659900 18.62deg,#789900 21.39deg,#8b9900 24.15deg,#999300 26.89deg,#998100 29.59deg,#997200 32.25deg,#996600 34.85deg,#995b00 37.39deg,#995200 39.86deg,#994900 42.25deg,#994200 44.56deg,#993c00 46.78deg,#993600 48.92deg,#993100 50.97deg,#992c00 52.94deg,#992800 54.81deg,#992400 56.61deg,#992100 58.32deg,#991d00 59.96deg,#991a00 61.52deg,#991800 63.00deg,#991500 64.42deg,#991300 65.77deg,#991000 67.05deg,#990e00 68.28deg,#990c00 69.44deg,#990a00 70.56deg,#990900 71.62deg,#990700 72.63deg,#990500 73.60deg,#990400 74.52deg,#990300 75.41deg,#990100 76.25deg,#990000 77.06deg,#990000 218.53deg,#009900 360deg);clip-path:polygon(4410.0px -197.6px,9643.1px -3138.4px,-2457.0px -6222.8px,-763.2px -464.3px)"></div><div style="position:absolute;left:0;top:0;width:100%;height:100%;background:conic-gradient(from 92.95deg at -762.4px -465.2px,#990000 0.00deg,#990003 0.76deg,#990007 1.54deg,#99000b 2.37deg,#99000f 3.22deg,#990013 4.12deg,#990018 5.05deg,#99001d 6.03deg,#990022 7.05deg,#990028 8.12deg,#99002d 9.23deg,#990034 10.40deg,#99003a 11.62deg,#990042 12.90deg,#990049 14.23deg,#990052 15.63deg,#99005b 17.09deg,#990065 18.62deg,#99006f 20.22deg,#99007b 21.89deg,#990088 23.64deg,#990096 25.46deg,#8d0099 27.35deg,#7f0099 29.32deg,#730099 31.37deg,#670099 33.49deg,#5d0099 35.69deg,#530099 37.95deg,#4a0099 40.28deg,#410099 42.68deg,#390099 45.13deg,#320099 47.62deg,#2b0099 50.16deg,#240099 52.72deg,#1e0099 55.31deg,#190099 57.90deg,#130099 60.50deg,#0e0099 63.08deg,#090099 65.64deg,#040099 68.17deg,#000099 70.66deg,#000099 215.33deg,#990000 360deg);clip-path:polygon(4409.5px -199.6px,10404.3px 109.3px,1731.2px 8015.7px,37.4px 2257.3px)"></div><div style="position:absolute;left:0;top:0;width:100%;height:100%;background:#009900;clip-path:polygon(-762.4px -465.2px,-2455.6px -6221.4px,-6754.4px -774.1px)"></div><div style="position:absolute;left:0;top:0;width:100%;height:100%;background:#990000;clip-path:polygon(4409.8px -198.6px,10401.8px 110.2px,9640.5px -3138.0px)"></div><div style="position:absolute;left:0;top:0;width:100%;height:100%;background:#000099;clip-path:polygon(38.6px 2257.8px,-5192.1px 5197.1px,1731.7px 8013.9px)"></div><div style="position:absolute;left:0;top:0;width:100%;height:100%;background:conic-gradient(from 84.77deg at 394.1px 168.6px,#ff0000 0.00deg,#ff0005 0.62deg,#ff000a 1.27deg,#ff000f 1.96deg,#ff0015 2.68deg,#ff001a 3.43deg,#ff0020 4.23deg,#ff0027 5.07deg,#ff002d 5.96deg,#ff0034 6.90deg,#ff003c 7.89deg,#ff0043 8.94deg,#ff004c 10.05deg,#ff0054 11.23deg,#ff005d 12.49deg,#ff0067 13.82deg,#ff0071 15.23deg,#ff007c 16.74deg,#ff0088 18.35deg,#ff0095 20.05deg,#ff00a2 21.88deg,#ff00b0 23.82deg,#ff00c0 25.88deg,#ff00d1 28.08deg,#ff00e3 30.42deg,#ff00f7 32.90deg,#f300ff 35.53deg,#df00ff 38.31deg,#cd00ff 41.24deg,#bc00ff 44.32deg,#ac00ff 47.53deg,#9d00ff 50.86deg,#8f00ff 54.30deg,#8200ff 57.82deg,#7600ff 61.41deg,#6a00ff 65.04deg,#6000ff 68.67deg,#5500ff 72.28deg,#4b00ff 75.84deg,#4200ff 79.32deg,#3900ff 82.71deg,#3100ff 85.98deg,#2900ff 89.11deg,#2100ff 92.11deg,#1a00ff 94.96deg,#1300ff 97.66deg,#0c00ff 100.21deg,#0600ff 102.62deg,#0000ff 104.88deg,#0002ff 105.60deg,#0004ff 106.36deg,#0006ff 107.16deg,#0008ff 108.00deg,#000bff 108.89deg,#000dff 109.83deg,#0010ff 110.82deg,#0012ff 111.88deg,#0015ff 112.99deg,#0018ff 114.17deg,#001bff 115.43deg,#001fff 116.76deg,#0022ff 118.18deg,#0026ff 119.69deg,#002aff 121.30deg,#002eff 123.01deg,#0032ff 124.84deg,#0037ff 126.78deg,#003cff 128.85deg,#0041ff 131.06deg,#0047ff 133.40deg,#004eff 135.89deg,#0054ff 138.53deg,#005cff 141.32deg,#0064ff 144.26deg,#006cff 147.34deg,#0076ff 150.56deg,#0080ff 153.90deg,#008cff 157.35deg,#0099ff 160.89deg,#00a7ff 164.48deg,#00b7ff 168.12deg,#00caff 171.75deg,#00dfff 175.37deg,#00f7ff 178.93deg,#00ffec 182.42deg,#00ffd3 185.80deg,#00ffbb 189.07deg,#00ffa4 192.21deg,#00ff8e 195.20deg,#00ff79 198.05deg,#00ff65 200.75deg,#00ff52 203.30deg,#00ff40 205.70deg,#00ff2f 207.96deg,#00ff1f 210.08deg,#00ff0f 212.08deg,#00ff00 213.95deg,#11ff00 216.15deg,#23ff00 218.72deg,#35ff00 221.75deg,#48ff00 225.36deg,#5dff00 229.68deg,#72ff00 234.88deg,#88ff00 241.16deg,#9fff00 248.67deg,#b8ff00 257.49deg,#d2ff00 267.45deg,#edff00 278.10deg,#fff500 288.76deg,#ffdc00 298.73deg,#ffc600 307.56deg,#ffb300 315.09deg,#ffa300 321.39deg,#ff9500 326.61deg,#ff8800 330.94deg,#ff7d00 334.55deg,#ff7200 337.59deg,#ff6900 340.17deg,#ff6000 342.37deg,#ff5900 344.27deg,#ff5200 345.93deg,#ff4b00 347.38deg,#ff4500 348.66deg,#ff3f00 349.79deg,#ff3a00 350.81deg,#ff3500 351.72deg,#ff3100 352.54deg,#ff2d00 353.29deg,#ff2900 353.97deg,#ff2500 354.59deg,#ff2200 355.16deg,#ff1e00 355.69deg,#ff1b00 356.17deg,#ff1800 356.62deg,#ff1500 357.04deg,#ff1300 357.43deg,#ff1000 357.79deg,#ff0e00 358.13deg,#ff0c00 358.45deg,#ff0a00 358.74deg,#ff0700 359.02deg,#ff0500 359.29deg,#ff0400 359.54deg,#ff0200 359.78deg,#ff0000 360.00deg);clip-path:polygon(4409.8px -198.6px,-762.4px -465.2px,38.6px 2257.8px)"></div></div></div><svg style="position:absolute;left:0;top:0" width="2560" height="1440"><style>.w stop{stop-color:#fff}</style><defs><linearGradient class="w" id="wgb0" gradientUnits="userSpaceOnUse" x1="465.1" y1="1137.6" x2="494.7" y2="564.9"><stop offset="0" stop-opacity="1"/><stop offset="0.01" stop-opacity="0.95"/><stop offset="0.02" stop-opacity="0.904"/><stop offset="0.04" stop-opacity="0.822"/><stop offset="0.07" stop-opacity="0.719"/><stop offset="0.12" stop-opacity="0.585"/><stop offset="0.25" stop-opacity="0.366"/><stop offset="1" stop-opacity="0"/></linearGradient><linearGradient class="w" id="wgb1" gradientUnits="userSpaceOnUse" x1="465.1" y1="1137.6" x2="494.7" y2="564.9"><stop offset="0" stop-opacity="1"/><stop offset="0.01" stop-opacity="0.951"/><stop offset="0.02" stop-opacity="0.906"/><stop offset="0.04" stop-opacity="0.825"/><stop offset="0.07" stop-opacity="0.723"/><stop offset="0.12" stop-opacity="0.59"/><stop offset="0.25" stop-opacity="0.371"/><stop offset="1" stop-opacity="0"/></linearGradient><linearGradient class="w" id="wgb2" gradientUnits="userSpaceOnUse" x1="465.1" y1="1137.6" x2="494.7" y2="564.9"><stop offset="0" stop-opacity="1"/><stop offset="0.01" stop-opacity="0.952"/><stop offset="0.02" stop-opacity="0.908"/><stop offset="0.04" stop-opacity="0.828"/><stop offset="0.07" stop-opacity="0.728"/><stop offset="0.12" stop-opacity="0.596"/><stop offset="0.25" stop-opacity="0.376"/><stop offset="1" stop-opacity="0"/></linearGradient><linearGradient class="w" id="wgb3" gradientUnits="userSpaceOnUse" x1="465.1" y1="1137.6" x2="494.7" y2="564.9"><stop offset="0" stop-opacity="1"/><stop offset="0.01" stop-opacity="0.953"/><stop offset="0.02" stop-opacity="0.91"/><stop offset="0.04" stop-opacity="0.831"/><stop offset="0.07" stop-opacity="0.732"/><stop offset="0.12" stop-opacity="0.601"/><stop offset="0.25" stop-opacity="0.381"/><stop offset="1" stop-opacity="0"/></linearGradient><linearGradient class="w" id="wgb4" gradientUnits="userSpaceOnUse" x1="465.1" y1="1137.6" x2="494.7" y2="564.9"><stop offset="0" stop-opacity="1"/><stop offset="0.01" stop-opacity="0.954"/><stop offset="0.02" stop-opacity="0.911"/><stop offset="0.04" stop-opacity="0.835"/><stop offset="0.07" stop-opacity="0.736"/><stop offset="0.12" stop-opacity="0.607"/><stop offset="0.25" stop-opacity="0.387"/><stop offset="1" stop-opacity="0"/></linearGradient><linearGradient class="w" id="wgb5" gradientUnits="userSpaceOnUse" x1="465.1" y1="1137.6" x2="494.7" y2="564.9"><stop offset="0" stop-opacity="1"/><stop offset="0.01" stop-opacity="0.955"/><stop offset="0.02" stop-opacity="0.913"/><stop offset="0.04" stop-opacity="0.838"/><stop offset="0.07" stop-opacity="0.741"/><stop offset="0.12" stop-opacity="0.612"/><stop offset="0.25" stop-opacity="0.392"/><stop offset="1" stop-opacity="0"/></linearGradient><linearGradient class="w" id="wgb6" gradientUnits="userSpaceOnUse" x1="465.1" y1="1137.6" x2="494.7" y2="564.9"><stop offset="0" stop-opacity="1"/><stop offset="0.01" stop-opacity="0.956"/><stop offset="0.02" stop-opacity="0.915"/><stop offset="0.04" stop-opacity="0.841"/><stop offset="0.07" stop-opacity="0.745"/><stop offset="0.12" stop-opacity="0.618"/><stop offset="0.25" stop-opacity="0.398"/><stop offset="1" stop-opacity="0"/></linearGradient><linearGradient class="w" id="wgb7" gradientUnits="userSpaceOnUse" x1="465.1" y1="1137.6" x2="494.7" y2="564.9"><stop offset="0" stop-opacity="1"/><stop offset="0.01" stop-opacity="0.957"/><stop offset="0.02" stop-opacity="0.917"/><stop offset="0.04" stop-opacity="0.844"/><stop offset="0.07" stop-opacity="0.75"/><stop offset="0.12" stop-opacity="0.623"/><stop offset="0.25" stop-opacity="0.404"/><stop offset="1" stop-opacity="0"/></linearGradient><linearGradient class="w" id="wgb8" gradientUnits="userSpaceOnUse" x1="465.1" y1="1137.6" x2="494.7" y2="564.9"><stop offset="0" stop-opacity="1"/><stop offset="0.01" stop-opacity="0.958"/><stop offset="0.02" stop-opacity="0.919"/><stop offset="0.04" stop-opacity="0.847"/><stop offset="0.07" stop-opacity="0.755"/><stop offset="0.12" stop-opacity="0.629"/><stop offset="0.25" stop-opacity="0.41"/><stop offset="1" stop-opacity="0"/></linearGradient><linearGradient class="w" id="wgb9" gradientUnits="userSpaceOnUse" x1="465.1" y1="1137.6" x2="494.7" y2="564.9"><stop offset="0" stop-opacity="1"/><stop offset="0.01" stop-opacity="0.959"/><stop offset="0.02" stop-opacity="0.921"/><stop offset="0.04" stop-opacity="0.851"/><stop offset="0.07" stop-opacity="0.759"/><stop offset="0.12" stop-opacity="0.635"/><stop offset="0.25" stop-opacity="0.416"/><stop offset="1" stop-opacity="0"/></linearGradient><linearGradient class="w" id="wgb10" gradientUnits="userSpaceOnUse" x1="465.1" y1="1137.6" x2="494.7" y2="564.9"><stop offset="0" stop-opacity="1"/><stop offset="0.01" stop-opacity="0.96"/><stop offset="0.02" stop-opacity="0.923"/><stop offset="0.04" stop-opacity="0.854"/><stop offset="0.07" stop-opacity="0.764"/><stop offset="0.12" stop-opacity="0.641"/><stop offset="0.25" stop-opacity="0.422"/><stop offset="1" stop-opacity="0"/></linearGradient><linearGradient class="w" id="wgb11" gradientUnits="userSpaceOnUse" x1="465.1" y1="1137.6" x2="494.7" y2="564.9"><stop offset="0" stop-opacity="1"/><stop offset="0.01" stop-opacity="0.961"/><stop offset="0.02" stop-opacity="0.925"/><stop offset="0.04" stop-opacity="0.857"/><stop offset="0.07" stop-opacity="0.769"/><stop offset="0.12" stop-opacity="0.648"/><stop offset="0.25" stop-opacity="0.429"/><stop offset="1" stop-opacity="0"/></linearGradient><linearGradient class="w" id="wgb12" gradientUnits="userSpaceOnUse" x1="465.1" y1="1137.6" x2="494.7" y2="564.9"><stop offset="0" stop-opacity="1"/><stop offset="0.01" stop-opacity="0.962"/><stop offset="0.02" stop-opacity="0.927"/><stop offset="0.04" stop-opacity="0.861"/><stop offset="0.07" stop-opacity="0.774"/><stop offset="0.12" stop-opacity="0.654"/><stop offset="0.25" stop-opacity="0.436"/><stop offset="1" stop-opacity="0"/></linearGradient><linearGradient class="w" id="wgb13" gradientUnits="userSpaceOnUse" x1="465.1" y1="1137.6" x2="494.7" y2="564.9"><stop offset="0" stop-opacity="1"/><stop offset="0.01" stop-opacity="0.963"/><stop offset="0.02" stop-opacity="0.928"/><stop offset="0.04" stop-opacity="0.864"/><stop offset="0.07" stop-opacity="0.779"/><stop offset="0.12" stop-opacity="0.66"/><stop offset="0.25" stop-opacity="0.443"/><stop offset="1" stop-opacity="0"/></linearGradient><linearGradient class="w" id="wgb14" gradientUnits="userSpaceOnUse" x1="465.1" y1="1137.6" x2="494.7" y2="564.9"><stop offset="0" stop-opacity="1"/><stop offset="0.01" stop-opacity="0.964"/><stop offset="0.02" stop-opacity="0.93"/><stop offset="0.04" stop-opacity="0.868"/><stop offset="0.07" stop-opacity="0.784"/><stop offset="0.12" stop-opacity="0.667"/><stop offset="0.25" stop-opacity="0.45"/><stop offset="1" stop-opacity="0"/></linearGradient><linearGradient class="w" id="wgb15" gradientUnits="userSpaceOnUse" x1="465.1" y1="1137.6" x2="494.7" y2="564.9"><stop offset="0" stop-opacity="1"/><stop offset="0.01" stop-opacity="0.965"/><stop offset="0.02" stop-opacity="0.932"/><stop offset="0.04" stop-opacity="0.871"/><stop offset="0.07" stop-opacity="0.789"/><stop offset="0.12" stop-opacity="0.674"/><stop offset="0.25" stop-opacity="0.458"/><stop offset="1" stop-opacity="0"/></linearGradient><linearGradient class="w" id="wgb16" gradientUnits="userSpaceOnUse" x1="465.1" y1="1137.6" x2="494.7" y2="564.9"><stop offset="0" stop-opacity="1"/><stop offset="0.01" stop-opacity="0.966"/><stop offset="0.02" stop-opacity="0.934"/><stop offset="0.04" stop-opacity="0.874"/><stop offset="0.07" stop-opacity="0.794"/><stop offset="0.12" stop-opacity="0.68"/><stop offset="0.25" stop-opacity="0.465"/><stop offset="1" stop-opacity="0"/></linearGradient><linearGradient class="w" id="wgb17" gradientUnits="userSpaceOnUse" x1="465.1" y1="1137.6" x2="494.7" y2="564.9"><stop offset="0" stop-opacity="1"/><stop offset="0.01" stop-opacity="0.967"/><stop offset="0.02" stop-opacity="0.936"/><stop offset="0.04" stop-opacity="0.878"/><stop offset="0.07" stop-opacity="0.799"/><stop offset="0.12" stop-opacity="0.687"/><stop offset="0.25" stop-opacity="0.473"/><stop offset="1" stop-opacity="0"/></linearGradient><linearGradient class="w" id="wgb18" gradientUnits="userSpaceOnUse" x1="465.1" y1="1137.6" x2="494.7" y2="564.9"><stop offset="0" stop-opacity="1"/><stop offset="0.01" stop-opacity="0.968"/><stop offset="0.02" stop-opacity="0.938"/><stop offset="0.04" stop-opacity="0.881"/><stop offset="0.07" stop-opacity="0.805"/><stop offset="0.12" stop-opacity="0.694"/><stop offset="0.25" stop-opacity="0.482"/><stop offset="1" stop-opacity="0"/></linearGradient><linearGradient class="w" id="wgb19" gradientUnits="userSpaceOnUse" x1="465.1" y1="1137.6" x2="494.7" y2="564.9"><stop offset="0" stop-opacity="1"/><stop offset="0.01" stop-opacity="0.969"/><stop offset="0.02" stop-opacity="0.94"/><stop offset="0.04" stop-opacity="0.885"/><stop offset="0.07" stop-opacity="0.81"/><stop offset="0.12" stop-opacity="0.702"/><stop offset="0.25" stop-opacity="0.49"/><stop offset="1" stop-opacity="0"/></linearGradient><linearGradient class="w" id="wgb20" gradientUnits="userSpaceOnUse" x1="465.1" y1="1137.6" x2="494.7" y2="564.9"><stop offset="0" stop-opacity="1"/><stop offset="0.01" stop-opacity="0.971"/><stop offset="0.02" stop-opacity="0.942"/><stop offset="0.04" stop-opacity="0.889"/><stop offset="0.07" stop-opacity="0.815"/><stop offset="0.12" stop-opacity="0.709"/><stop offset="0.25" stop-opacity="0.499"/><stop offset="1" stop-opacity="0"/></linearGradient><linearGradient class="w" id="wgb21" gradientUnits="userSpaceOnUse" x1="465.1" y1="1137.6" x2="494.7" y2="564.9"><stop offset="0" stop-opacity="1"/><stop offset="0.01" stop-opacity="0.972"/><stop offset="0.02" stop-opacity="0.944"/><stop offset="0.04" stop-opacity="0.892"/><stop offset="0.07" stop-opacity="0.821"/><stop offset="0.12" stop-opacity="0.717"/><stop offset="0.25" stop-opacity="0.509"/><stop offset="1" stop-opacity="0"/></linearGradient><linearGradient class="w" id="wgb22" gradientUnits="userSpaceOnUse" x1="465.1" y1="1137.6" x2="494.7" y2="564.9"><stop offset="0" stop-opacity="1"/><stop offset="0.01" stop-opacity="0.973"/><stop offset="0.02" stop-opacity="0.946"/><stop offset="0.04" stop-opacity="0.896"/><stop offset="0.07" stop-opacity="0.826"/><stop offset="0.12" stop-opacity="0.724"/><stop offset="0.25" stop-opacity="0.518"/><stop offset="1" stop-opacity="0"/></linearGradient><linearGradient class="w" id="wgb23" gradientUnits="userSpaceOnUse" x1="465.1" y1="1137.6" x2="494.7" y2="564.9"><stop offset="0" stop-opacity="1"/><stop offset="0.01" stop-opacity="0.974"/><stop offset="0.02" stop-opacity="0.948"/><stop offset="0.04" stop-opacity="0.9"/><stop offset="0.07" stop-opacity="0.832"/><stop offset="0.12" stop-opacity="0.732"/><stop offset="0.25" stop-opacity="0.528"/><stop offset="1" stop-opacity="0"/></linearGradient><linearGradient class="w" id="wgb24" gradientUnits="userSpaceOnUse" x1="465.1" y1="1137.6" x2="494.7" y2="564.9"><stop offset="0" stop-opacity="1"/><stop offset="0.01" stop-opacity="0.975"/><stop offset="0.02" stop-opacity="0.95"/><stop offset="0.04" stop-opacity="0.903"/><stop offset="0.07" stop-opacity="0.838"/><stop offset="0.12" stop-opacity="0.74"/><stop offset="0.25" stop-opacity="0.539"/><stop offset="1" stop-opacity="0"/></linearGradient><linearGradient class="w" id="wgb25" gradientUnits="userSpaceOnUse" x1="465.1" y1="1137.6" x2="494.7" y2="564.9"><stop offset="0" stop-opacity="1"/><stop offset="0.01" stop-opacity="0.976"/><stop offset="0.02" stop-opacity="0.952"/><stop offset="0.04" stop-opacity="0.907"/><stop offset="0.07" stop-opacity="0.844"/><stop offset="0.12" stop-opacity="0.749"/><stop offset="0.25" stop-opacity="0.549"/><stop offset="1" stop-opacity="0"/></linearGradient><linearGradient class="w" id="wgb26" gradientUnits="userSpaceOnUse" x1="465.1" y1="1137.6" x2="494.7" y2="564.9"><stop offset="0" stop-opacity="1"/><stop offset="0.01" stop-opacity="0.977"/><stop offset="0.02" stop-opacity="0.954"/><stop offset="0.04" stop-opacity="0.911"/><stop offset="0.07" stop-opacity="0.85"/><stop offset="0.12" stop-opacity="0.757"/><stop offset="0.25" stop-opacity="0.561"/><stop offset="1" stop-opacity="0"/></linearGradient><linearGradient class="w" id="wgb27" gradientUnits="userSpaceOnUse" x1="465.1" y1="1137.6" x2="494.7" y2="564.9"><stop offset="0" stop-opacity="1"/><stop offset="0.01" stop-opacity="0.978"/><stop offset="0.02" stop-opacity="0.956"/><stop offset="0.04" stop-opacity="0.915"/><stop offset="0.07" stop-opacity="0.856"/><stop offset="0.12" stop-opacity="0.766"/><stop offset="0.25" stop-opacity="0.572"/><stop offset="1" stop-opacity="0"/></linearGradient><linearGradient class="w" id="wgb28" gradientUnits="userSpaceOnUse" x1="465.1" y1="1137.6" x2="494.7" y2="564.9"><stop offset="0" stop-opacity="1"/><stop offset="0.01" stop-opacity="0.979"/><stop offset="0.02" stop-opacity="0.958"/><stop offset="0.04" stop-opacity="0.918"/><stop offset="0.07" stop-opacity="0.862"/><stop offset="0.12" stop-opacity="0.775"/><stop offset="0.25" stop-opacity="0.584"/><stop offset="1" stop-opacity="0"/></linearGradient><linearGradient class="w" id="wgb29" gradientUnits="userSpaceOnUse" x1="465.1" y1="1137.6" x2="494.7" y2="564.9"><stop offset="0" stop-opacity="1"/><stop offset="0.01" stop-opacity="0.98"/><stop offset="0.02" stop-opacity="0.96"/><stop offset="0.04" stop-opacity="0.922"/><stop offset="0.07" stop-opacity="0.868"/><stop offset="0.12" stop-opacity="0.784"/><stop offset="0.25" stop-opacity="0.597"/><stop offset="1" stop-opacity="0"/></linearGradient><linearGradient class="w" id="wgb30" gradientUnits="userSpaceOnUse" x1="465.1" y1="1137.6" x2="494.7" y2="564.9"><stop offset="0" stop-opacity="1"/><stop offset="0.01" stop-opacity="0.981"/><stop offset="0.02" stop-opacity="0.962"/><stop offset="0.04" stop-opacity="0.926"/><stop offset="0.07" stop-opacity="0.874"/><stop offset="0.12" stop-opacity="0.793"/><stop offset="0.25" stop-opacity="0.61"/><stop offset="1" stop-opacity="0"/></linearGradient><linearGradient class="w" id="wgb31" gradientUnits="userSpaceOnUse" x1="465.1" y1="1137.6" x2="494.7" y2="564.9"><stop offset="0" stop-opacity="1"/><stop offset="0.01" stop-opacity="0.982"/><stop offset="0.02" stop-opacity="0.964"/><stop offset="0.04" stop-opacity="0.93"/><stop offset="0.07" stop-opacity="0.88"/><stop offset="0.12" stop-opacity="0.803"/><stop offset="0.25" stop-opacity="0.624"/><stop offset="1" stop-opacity="0"/></linearGradient><linearGradient class="w" id="wgb32" gradientUnits="userSpaceOnUse" x1="465.1" y1="1137.6" x2="494.7" y2="564.9"><stop offset="0" stop-opacity="1"/><stop offset="0.01" stop-opacity="0.983"/><stop offset="0.02" stop-opacity="0.967"/><stop offset="0.04" stop-opacity="0.934"/><stop offset="0.07" stop-opacity="0.887"/><stop offset="0.12" stop-opacity="0.812"/><stop offset="0.25" stop-opacity="0.639"/><stop offset="1" stop-opacity="0"/></linearGradient><linearGradient class="w" id="wgb33" gradientUnits="userSpaceOnUse" x1="465.1" y1="1137.6" x2="494.7" y2="564.9"><stop offset="0" stop-opacity="1"/><stop offset="0.01" stop-opacity="0.984"/><stop offset="0.02" stop-opacity="0.969"/><stop offset="0.04" stop-opacity="0.938"/><stop offset="0.07" stop-opacity="0.893"/><stop offset="0.12" stop-opacity="0.822"/><stop offset="0.25" stop-opacity="0.654"/><stop offset="1" stop-opacity="0"/></linearGradient><linearGradient class="w" id="wgb34" gradientUnits="userSpaceOnUse" x1="465.1" y1="1137.6" x2="494.7" y2="564.9"><stop offset="0" stop-opacity="1"/><stop offset="0.01" stop-opacity="0.985"/><stop offset="0.02" stop-opacity="0.971"/><stop offset="0.04" stop-opacity="0.942"/><stop offset="0.07" stop-opacity="0.9"/><stop offset="0.12" stop-opacity="0.832"/><stop offset="0.25" stop-opacity="0.67"/><stop offset="1" stop-opacity="0"/></linearGradient><linearGradient class="w" id="wgb35" gradientUnits="userSpaceOnUse" x1="465.1" y1="1137.6" x2="494.7" y2="564.9"><stop offset="0" stop-opacity="1"/><stop offset="0.01" stop-opacity="0.986"/><stop offset="0.02" stop-opacity="0.973"/><stop offset="0.04" stop-opacity="0.946"/><stop offset="0.07" stop-opacity="0.907"/><stop offset="0.12" stop-opacity="0.843"/><stop offset="0.25" stop-opacity="0.687"/><stop offset="1" stop-opacity="0"/></linearGradient><linearGradient class="w" id="wgb36" gradientUnits="userSpaceOnUse" x1="465.1" y1="1137.6" x2="494.7" y2="564.9"><stop offset="0" stop-opacity="1"/><stop offset="0.01" stop-opacity="0.987"/><stop offset="0.02" stop-opacity="0.975"/><stop offset="0.04" stop-opacity="0.949"/><stop offset="0.07" stop-opacity="0.912"/><stop offset="0.12" stop-opacity="0.852"/><stop offset="0.25" stop-opacity="0.701"/><stop offset="1" stop-opacity="0"/></linearGradient><linearGradient class="w" id="wgb37" gradientUnits="userSpaceOnUse" x1="465.1" y1="1137.6" x2="494.7" y2="564.9"><stop offset="0" stop-opacity="1"/><stop offset="0.01" stop-opacity="0.987"/><stop offset="0.02" stop-opacity="0.974"/><stop offset="0.04" stop-opacity="0.948"/><stop offset="0.07" stop-opacity="0.91"/><stop offset="0.12" stop-opacity="0.848"/><stop offset="0.25" stop-opacity="0.696"/><stop offset="1" stop-opacity="0"/></linearGradient><linearGradient class="w" id="wgb38" gradientUnits="userSpaceOnUse" x1="465.1" y1="1137.6" x2="494.7" y2="564.9"><stop offset="0" stop-opacity="1"/><stop offset="0.01" stop-opacity="0.987"/><stop offset="0.02" stop-opacity="0.973"/><stop offset="0.04" stop-opacity="0.947"/><stop offset="0.07" stop-opacity="0.908"/><stop offset="0.12" stop-opacity="0.845"/><stop offset="0.25" stop-opacity="0.69"/><stop offset="1" stop-opacity="0"/></linearGradient><linearGradient class="w" id="wgb39" gradientUnits="userSpaceOnUse" x1="465.1" y1="1137.6" x2="494.7" y2="564.9"><stop offset="0" stop-opacity="1"/><stop offset="0.01" stop-opacity="0.986"/><stop offset="0.02" stop-opacity="0.973"/><stop offset="0.04" stop-opacity="0.946"/><stop offset="0.07" stop-opacity="0.906"/><stop offset="0.12" stop-opacity="0.841"/><stop offset="0.25" stop-opacity="0.685"/><stop offset="1" stop-opacity="0"/></linearGradient><linearGradient class="w" id="wgb40" gradientUnits="userSpaceOnUse" x1="465.1" y1="1137.6" x2="494.7" y2="564.9"><stop offset="0" stop-opacity="1"/><stop offset="0.01" stop-opacity="0.986"/><stop offset="0.02" stop-opacity="0.972"/><stop offset="0.04" stop-opacity="0.944"/><stop offset="0.07" stop-opacity="0.904"/><stop offset="0.12" stop-opacity="0.838"/><stop offset="0.25" stop-opacity="0.679"/><stop offset="1" stop-opacity="0"/></linearGradient><linearGradient class="w" id="wgb41" gradientUnits="userSpaceOnUse" x1="465.1" y1="1137.6" x2="494.7" y2="564.9"><stop offset="0" stop-opacity="1"/><stop offset="0.01" stop-opacity="0.986"/><stop offset="0.02" stop-opacity="0.971"/><stop offset="0.04" stop-opacity="0.943"/><stop offset="0.07" stop-opacity="0.901"/><stop offset="0.12" stop-opacity="0.835"/><stop offset="0.25" stop-opacity="0.674"/><stop offset="1" stop-opacity="0"/></linearGradient><linearGradient class="w" id="wgb42" gradientUnits="userSpaceOnUse" x1="465.1" y1="1137.6" x2="494.7" y2="564.9"><stop offset="0" stop-opacity="1"/><stop offset="0.01" stop-opacity="0.985"/><stop offset="0.02" stop-opacity="0.971"/><stop offset="0.04" stop-opacity="0.942"/><stop offset="0.07" stop-opacity="0.899"/><stop offset="0.12" stop-opacity="0.831"/><stop offset="0.25" stop-opacity="0.669"/><stop offset="1" stop-opacity="0"/></linearGradient><linearGradient class="w" id="wgb43" gradientUnits="userSpaceOnUse" x1="465.1" y1="1137.6" x2="494.7" y2="564.9"><stop offset="0" stop-opacity="1"/><stop offset="0.01" stop-opacity="0.985"/><stop offset="0.02" stop-opacity="0.97"/><stop offset="0.04" stop-opacity="0.94"/><stop offset="0.07" stop-opacity="0.897"/><stop offset="0.12" stop-opacity="0.828"/><stop offset="0.25" stop-opacity="0.663"/><stop offset="1" stop-opacity="0"/></linearGradient><linearGradient class="w" id="wgb44" gradientUnits="userSpaceOnUse" x1="465.1" y1="1137.6" x2="494.7" y2="564.9"><stop offset="0" stop-opacity="1"/><stop offset="0.01" stop-opacity="0.985"/><stop offset="0.02" stop-opacity="0.969"/><stop offset="0.04" stop-opacity="0.939"/><stop offset="0.07" stop-opacity="0.895"/><stop offset="0.12" stop-opacity="0.825"/><stop offset="0.25" stop-opacity="0.658"/><stop offset="1" stop-opacity="0"/></linearGradient><linearGradient class="w" id="wgb45" gradientUnits="userSpaceOnUse" x1="465.1" y1="1137.6" x2="494.7" y2="564.9"><stop offset="0" stop-opacity="1"/><stop offset="0.01" stop-opacity="0.984"/><stop offset="0.02" stop-opacity="0.969"/><stop offset="0.04" stop-opacity="0.938"/><stop offset="0.07" stop-opacity="0.893"/><stop offset="0.12" stop-opacity="0.822"/><stop offset="0.25" stop-opacity="0.653"/><stop offset="1" stop-opacity="0"/></linearGradient><linearGradient class="w" id="wgb46" gradientUnits="userSpaceOnUse" x1="465.1" y1="1137.6" x2="494.7" y2="564.9"><stop offset="0" stop-opacity="1"/><stop offset="0.01" stop-opacity="0.984"/><stop offset="0.02" stop-opacity="0.968"/><stop offset="0.04" stop-opacity="0.937"/><stop offset="0.07" stop-opacity="0.891"/><stop offset="0.12" stop-opacity="0.818"/><stop offset="0.25" stop-opacity="0.648"/><stop offset="1" stop-opacity="0"/></linearGradient><linearGradient class="w" id="wgb47" gradientUnits="userSpaceOnUse" x1="465.1" y1="1137.6" x2="494.7" y2="564.9"><stop offset="0" stop-opacity="1"/><stop offset="0.01" stop-opacity="0.983"/><stop offset="0.02" stop-opacity="0.967"/><stop offset="0.04" stop-opacity="0.935"/><stop offset="0.07" stop-opacity="0.889"/><stop offset="0.12" stop-opacity="0.815"/><stop offset="0.25" stop-opacity="0.644"/><stop offset="1" stop-opacity="0"/></linearGradient><linearGradient class="w" id="wgb48" gradientUnits="userSpaceOnUse" x1="465.1" y1="1137.6" x2="-427.7" y2="1400.2"><stop offset="0" stop-opacity="1"/><stop offset="0.01" stop-opacity="0.983"/><stop offset="0.02" stop-opacity="0.967"/><stop offset="0.04" stop-opacity="0.935"/><stop offset="0.07" stop-opacity="0.889"/><stop offset="0.12" stop-opacity="0.815"/><stop offset="0.25" stop-opacity="0.644"/><stop offset="1" stop-opacity="0"/></linearGradient><linearGradient class="w" id="wgb49" gradientUnits="userSpaceOnUse" x1="465.1" y1="1137.6" x2="-427.7" y2="1400.2"><stop offset="0" stop-opacity="1"/><stop offset="0.01" stop-opacity="0.984"/><stop offset="0.02" stop-opacity="0.968"/><stop offset="0.04" stop-opacity="0.937"/><stop offset="0.07" stop-opacity="0.891"/><stop offset="0.12" stop-opacity="0.818"/><stop offset="0.25" stop-opacity="0.648"/><stop offset="1" stop-opacity="0"/></linearGradient><linearGradient class="w" id="wgb50" gradientUnits="userSpaceOnUse" x1="465.1" y1="1137.6" x2="-427.7" y2="1400.2"><stop offset="0" stop-opacity="1"/><stop offset="0.01" stop-opacity="0.984"/><stop offset="0.02" stop-opacity="0.969"/><stop offset="0.04" stop-opacity="0.938"/><stop offset="0.07" stop-opacity="0.893"/><stop offset="0.12" stop-opacity="0.822"/><stop offset="0.25" stop-opacity="0.653"/><stop offset="1" stop-opacity="0"/></linearGradient><linearGradient class="w" id="wgb51" gradientUnits="userSpaceOnUse" x1="465.1" y1="1137.6" x2="-427.7" y2="1400.2"><stop offset="0" stop-opacity="1"/><stop offset="0.01" stop-opacity="0.985"/><stop offset="0.02" stop-opacity="0.969"/><stop offset="0.04" stop-opacity="0.939"/><stop offset="0.07" stop-opacity="0.895"/><stop offset="0.12" stop-opacity="0.825"/><stop offset="0.25" stop-opacity="0.658"/><stop offset="1" stop-opacity="0"/></linearGradient><linearGradient class="w" id="wgb52" gradientUnits="userSpaceOnUse" x1="465.1" y1="1137.6" x2="-427.7" y2="1400.2"><stop offset="0" stop-opacity="1"/><stop offset="0.01" stop-opacity="0.985"/><stop offset="0.02" stop-opacity="0.97"/><stop offset="0.04" stop-opacity="0.94"/><stop offset="0.07" stop-opacity="0.897"/><stop offset="0.12" stop-opacity="0.828"/><stop offset="0.25" stop-opacity="0.663"/><stop offset="1" stop-opacity="0"/></linearGradient><linearGradient class="w" id="wgb53" gradientUnits="userSpaceOnUse" x1="465.1" y1="1137.6" x2="-427.7" y2="1400.2"><stop offset="0" stop-opacity="1"/><stop offset="0.01" stop-opacity="0.985"/><stop offset="0.02" stop-opacity="0.971"/><stop offset="0.04" stop-opacity="0.942"/><stop offset="0.07" stop-opacity="0.899"/><stop offset="0.12" stop-opacity="0.831"/><stop offset="0.25" stop-opacity="0.669"/><stop offset="1" stop-opacity="0"/></linearGradient><linearGradient class="w" id="wgb54" gradientUnits="userSpaceOnUse" x1="465.1" y1="1137.6" x2="-427.7" y2="1400.2"><stop offset="0" stop-opacity="1"/><stop offset="0.01" stop-opacity="0.986"/><stop offset="0.02" stop-opacity="0.971"/><stop offset="0.04" stop-opacity="0.943"/><stop offset="0.07" stop-opacity="0.901"/><stop offset="0.12" stop-opacity="0.835"/><stop offset="0.25" stop-opacity="0.674"/><stop offset="1" stop-opacity="0"/></linearGradient><linearGradient class="w" id="wgb55" gradientUnits="userSpaceOnUse" x1="465.1" y1="1137.6" x2="-427.7" y2="1400.2"><stop offset="0" stop-opacity="1"/><stop offset="0.01" stop-opacity="0.986"/><stop offset="0.02" stop-opacity="0.972"/><stop offset="0.04" stop-opacity="0.944"/><stop offset="0.07" stop-opacity="0.904"/><stop offset="0.12" stop-opacity="0.838"/><stop offset="0.25" stop-opacity="0.679"/><stop offset="1" stop-opacity="0"/></linearGradient><linearGradient class="w" id="wgb56" gradientUnits="userSpaceOnUse" x1="465.1" y1="1137.6" x2="-427.7" y2="1400.2"><stop offset="0" stop-opacity="1"/><stop offset="0.01" stop-opacity="0.986"/><stop offset="0.02" stop-opacity="0.973"/><stop offset="0.04" stop-opacity="0.946"/><stop offset="0.07" stop-opacity="0.906"/><stop offset="0.12" stop-opacity="0.841"/><stop offset="0.25" stop-opacity="0.685"/><stop offset="1" stop-opacity="0"/></linearGradient><linearGradient class="w" id="wgb57" gradientUnits="userSpaceOnUse" x1="465.1" y1="1137.6" x2="-427.7" y2="1400.2"><stop offset="0" stop-opacity="1"/><stop offset="0.01" stop-opacity="0.987"/><stop offset="0.02" stop-opacity="0.973"/><stop offset="0.04" stop-opacity="0.947"/><stop offset="0.07" stop-opacity="0.908"/><stop offset="0.12" stop-opacity="0.845"/><stop offset="0.25" stop-opacity="0.69"/><stop offset="1" stop-opacity="0"/></linearGradient><linearGradient class="w" id="wgb58" gradientUnits="userSpaceOnUse" x1="465.1" y1="1137.6" x2="-427.7" y2="1400.2"><stop offset="0" stop-opacity="1"/><stop offset="0.01" stop-opacity="0.987"/><stop offset="0.02" stop-opacity="0.974"/><stop offset="0.04" stop-opacity="0.948"/><stop offset="0.07" stop-opacity="0.91"/><stop offset="0.12" stop-opacity="0.848"/><stop offset="0.25" stop-opacity="0.696"/><stop offset="1" stop-opacity="0"/></linearGradient><linearGradient class="w" id="wgb59" gradientUnits="userSpaceOnUse" x1="465.1" y1="1137.6" x2="-427.7" y2="1400.2"><stop offset="0" stop-opacity="1"/><stop offset="0.01" stop-opacity="0.987"/><stop offset="0.02" stop-opacity="0.975"/><stop offset="0.04" stop-opacity="0.949"/><stop offset="0.07" stop-opacity="0.912"/><stop offset="0.12" stop-opacity="0.852"/><stop offset="0.25" stop-opacity="0.701"/><stop offset="1" stop-opacity="0"/></linearGradient><linearGradient class="w" id="wgb60" gradientUnits="userSpaceOnUse" x1="465.1" y1="1137.6" x2="-427.7" y2="1400.2"><stop offset="0" stop-opacity="1"/><stop offset="0.01" stop-opacity="0.988"/><stop offset="0.02" stop-opacity="0.975"/><stop offset="0.04" stop-opacity="0.951"/><stop offset="0.07" stop-opacity="0.915"/><stop offset="0.12" stop-opacity="0.855"/><stop offset="0.25" stop-opacity="0.707"/><stop offset="1" stop-opacity="0"/></linearGradient><linearGradient class="w" id="wgb61" gradientUnits="userSpaceOnUse" x1="465.1" y1="1137.6" x2="-427.7" y2="1400.2"><stop offset="0" stop-opacity="1"/><stop offset="0.01" stop-opacity="0.987"/><stop offset="0.02" stop-opacity="0.974"/><stop offset="0.04" stop-opacity="0.948"/><stop offset="0.07" stop-opacity="0.91"/><stop offset="0.12" stop-opacity="0.848"/><stop offset="0.25" stop-opacity="0.695"/><stop offset="1" stop-opacity="0"/></linearGradient><linearGradient class="w" id="wgb62" gradientUnits="userSpaceOnUse" x1="465.1" y1="1137.6" x2="-427.7" y2="1400.2"><stop offset="0" stop-opacity="1"/><stop offset="0.01" stop-opacity="0.986"/><stop offset="0.02" stop-opacity="0.972"/><stop offset="0.04" stop-opacity="0.944"/><stop offset="0.07" stop-opacity="0.904"/><stop offset="0.12" stop-opacity="0.839"/><stop offset="0.25" stop-opacity="0.68"/><stop offset="1" stop-opacity="0"/></linearGradient><linearGradient class="w" id="wgb63" gradientUnits="userSpaceOnUse" x1="465.1" y1="1137.6" x2="-427.7" y2="1400.2"><stop offset="0" stop-opacity="1"/><stop offset="0.01" stop-opacity="0.985"/><stop offset="0.02" stop-opacity="0.97"/><stop offset="0.04" stop-opacity="0.941"/><stop offset="0.07" stop-opacity="0.898"/><stop offset="0.12" stop-opacity="0.829"/><stop offset="0.25" stop-opacity="0.665"/><stop offset="1" stop-opacity="0"/></linearGradient><linearGradient class="w" id="wgb64" gradientUnits="userSpaceOnUse" x1="465.1" y1="1137.6" x2="-427.7" y2="1400.2"><stop offset="0" stop-opacity="1"/><stop offset="0.01" stop-opacity="0.984"/><stop offset="0.02" stop-opacity="0.968"/><stop offset="0.04" stop-opacity="0.937"/><stop offset="0.07" stop-opacity="0.892"/><stop offset="0.12" stop-opacity="0.82"/><stop offset="0.25" stop-opacity="0.651"/><stop offset="1" stop-opacity="0"/></linearGradient><linearGradient class="w" id="wgb65" gradientUnits="userSpaceOnUse" x1="465.1" y1="1137.6" x2="-427.7" y2="1400.2"><stop offset="0" stop-opacity="1"/><stop offset="0.01" stop-opacity="0.983"/><stop offset="0.02" stop-opacity="0.966"/><stop offset="0.04" stop-opacity="0.934"/><stop offset="0.07" stop-opacity="0.886"/><stop offset="0.12" stop-opacity="0.812"/><stop offset="0.25" stop-opacity="0.638"/><stop offset="1" stop-opacity="0"/></linearGradient><linearGradient class="w" id="wgb66" gradientUnits="userSpaceOnUse" x1="465.1" y1="1137.6" x2="-427.7" y2="1400.2"><stop offset="0" stop-opacity="1"/><stop offset="0.01" stop-opacity="0.982"/><stop offset="0.02" stop-opacity="0.965"/><stop offset="0.04" stop-opacity="0.93"/><stop offset="0.07" stop-opacity="0.881"/><stop offset="0.12" stop-opacity="0.803"/><stop offset="0.25" stop-opacity="0.625"/><stop offset="1" stop-opacity="0"/></linearGradient><linearGradient class="w" id="wgb67" gradientUnits="userSpaceOnUse" x1="465.1" y1="1137.6" x2="-427.7" y2="1400.2"><stop offset="0" stop-opacity="1"/><stop offset="0.01" stop-opacity="0.981"/><stop offset="0.02" stop-opacity="0.963"/><stop offset="0.04" stop-opacity="0.927"/><stop offset="0.07" stop-opacity="0.875"/><stop offset="0.12" stop-opacity="0.794"/><stop offset="0.25" stop-opacity="0.613"/><stop offset="1" stop-opacity="0"/></linearGradient><linearGradient class="w" id="wgb68" gradientUnits="userSpaceOnUse" x1="465.1" y1="1137.6" x2="-427.7" y2="1400.2"><stop offset="0" stop-opacity="1"/><stop offset="0.01" stop-opacity="0.98"/><stop offset="0.02" stop-opacity="0.961"/><stop offset="0.04" stop-opacity="0.923"/><stop offset="0.07" stop-opacity="0.869"/><stop offset="0.12" stop-opacity="0.786"/><stop offset="0.25" stop-opacity="0.601"/><stop offset="1" stop-opacity="0"/></linearGradient><linearGradient class="w" id="wgb69" gradientUnits="userSpaceOnUse" x1="465.1" y1="1137.6" x2="-427.7" y2="1400.2"><stop offset="0" stop-opacity="1"/><stop offset="0.01" stop-opacity="0.979"/><stop offset="0.02" stop-opacity="0.959"/><stop offset="0.04" stop-opacity="0.92"/><stop offset="0.07" stop-opacity="0.864"/><stop offset="0.12" stop-opacity="0.778"/><stop offset="0.25" stop-opacity="0.589"/><stop offset="1" stop-opacity="0"/></linearGradient><linearGradient class="w" id="wgb70" gradientUnits="userSpaceOnUse" x1="465.1" y1="1137.6" x2="-427.7" y2="1400.2"><stop offset="0" stop-opacity="1"/><stop offset="0.01" stop-opacity="0.978"/><stop offset="0.02" stop-opacity="0.957"/><stop offset="0.04" stop-opacity="0.916"/><stop offset="0.07" stop-opacity="0.859"/><stop offset="0.12" stop-opacity="0.77"/><stop offset="0.25" stop-opacity="0.578"/><stop offset="1" stop-opacity="0"/></linearGradient><linearGradient class="w" id="wgb71" gradientUnits="userSpaceOnUse" x1="465.1" y1="1137.6" x2="-427.7" y2="1400.2"><stop offset="0" stop-opacity="1"/><stop offset="0.01" stop-opacity="0.977"/><stop offset="0.02" stop-opacity="0.955"/><stop offset="0.04" stop-opacity="0.913"/><stop offset="0.07" stop-opacity="0.853"/><stop offset="0.12" stop-opacity="0.762"/><stop offset="0.25" stop-opacity="0.567"/><stop offset="1" stop-opacity="0"/></linearGradient><linearGradient class="w" id="wgb72" gradientUnits="userSpaceOnUse" x1="465.1" y1="1137.6" x2="-427.7" y2="1400.2"><stop offset="0" stop-opacity="1"/><stop offset="0.01" stop-opacity="0.976"/><stop offset="0.02" stop-opacity="0.954"/><stop offset="0.04" stop-opacity="0.91"/><stop offset="0.07" stop-opacity="0.848"/><stop offset="0.12" stop-opacity="0.755"/><stop offset="0.25" stop-opacity="0.557"/><stop offset="1" stop-opacity="0"/></linearGradient><linearGradient class="w" id="wgb73" gradientUnits="userSpaceOnUse" x1="465.1" y1="1137.6" x2="-427.7" y2="1400.2"><stop offset="0" stop-opacity="1"/><stop offset="0.01" stop-opacity="0.976"/><stop offset="0.02" stop-opacity="0.952"/><stop offset="0.04" stop-opacity="0.906"/><stop offset="0.07" stop-opacity="0.843"/><stop offset="0.12" stop-opacity="0.747"/><stop offset="0.25" stop-opacity="0.547"/><stop offset="1" stop-opacity="0"/></linearGradient><linearGradient class="w" id="wgb74" gradientUnits="userSpaceOnUse" x1="465.1" y1="1137.6" x2="-427.7" y2="1400.2"><stop offset="0" stop-opacity="1"/><stop offset="0.01" stop-opacity="0.975"/><stop offset="0.02" stop-opacity="0.95"/><stop offset="0.04" stop-opacity="0.903"/><stop offset="0.07" stop-opacity="0.837"/><stop offset="0.12" stop-opacity="0.74"/><stop offset="0.25" stop-opacity="0.538"/><stop offset="1" stop-opacity="0"/></linearGradient><linearGradient class="w" id="wgb75" gradientUnits="userSpaceOnUse" x1="465.1" y1="1137.6" x2="-427.7" y2="1400.2"><stop offset="0" stop-opacity="1"/><stop offset="0.01" stop-opacity="0.974"/><stop offset="0.02" stop-opacity="0.948"/><stop offset="0.04" stop-opacity="0.9"/><stop offset="0.07" stop-opacity="0.832"/><stop offset="0.12" stop-opacity="0.733"/><stop offset="0.25" stop-opacity="0.529"/><stop offset="1" stop-opacity="0"/></linearGradient><linearGradient class="w" id="wgb76" gradientUnits="userSpaceOnUse" x1="465.1" y1="1137.6" x2="-427.7" y2="1400.2"><stop offset="0" stop-opacity="1"/><stop offset="0.01" stop-opacity="0.973"/><stop offset="0.02" stop-opacity="0.946"/><stop offset="0.04" stop-opacity="0.896"/><stop offset="0.07" stop-opacity="0.827"/><stop offset="0.12" stop-opacity="0.726"/><stop offset="0.25" stop-opacity="0.52"/><stop offset="1" stop-opacity="0"/></linearGradient><linearGradient class="w" id="wgb77" gradientUnits="userSpaceOnUse" x1="465.1" y1="1137.6" x2="-427.7" y2="1400.2"><stop offset="0" stop-opacity="1"/><stop offset="0.01" stop-opacity="0.972"/><stop offset="0.02" stop-opacity="0.945"/><stop offset="0.04" stop-opacity="0.893"/><stop offset="0.07" stop-opacity="0.822"/><stop offset="0.12" stop-opacity="0.719"/><stop offset="0.25" stop-opacity="0.511"/><stop offset="1" stop-opacity="0"/></linearGradient><linearGradient class="w" id="wgb78" gradientUnits="userSpaceOnUse" x1="465.1" y1="1137.6" x2="-427.7" y2="1400.2"><stop offset="0" stop-opacity="1"/><stop offset="0.01" stop-opacity="0.971"/><stop offset="0.02" stop-opacity="0.943"/><stop offset="0.04" stop-opacity="0.89"/><stop offset="0.07" stop-opacity="0.817"/><stop offset="0.12" stop-opacity="0.712"/><stop offset="0.25" stop-opacity="0.503"/><stop offset="1" stop-opacity="0"/></linearGradient><linearGradient class="w" id="wgb79" gradientUnits="userSpaceOnUse" x1="465.1" y1="1137.6" x2="-427.7" y2="1400.2"><stop offset="0" stop-opacity="1"/><stop offset="0.01" stop-opacity="0.97"/><stop offset="0.02" stop-opacity="0.941"/><stop offset="0.04" stop-opacity="0.887"/><stop offset="0.07" stop-opacity="0.813"/><stop offset="0.12" stop-opacity="0.705"/><stop offset="0.25" stop-opacity="0.495"/><stop offset="1" stop-opacity="0"/></linearGradient><linearGradient class="w" id="wgb80" gradientUnits="userSpaceOnUse" x1="465.1" y1="1137.6" x2="-427.7" y2="1400.2"><stop offset="0" stop-opacity="1"/><stop offset="0.01" stop-opacity="0.969"/><stop offset="0.02" stop-opacity="0.939"/><stop offset="0.04" stop-opacity="0.884"/><stop offset="0.07" stop-opacity="0.808"/><stop offset="0.12" stop-opacity="0.699"/><stop offset="0.25" stop-opacity="0.487"/><stop offset="1" stop-opacity="0"/></linearGradient><linearGradient class="w" id="wgb81" gradientUnits="userSpaceOnUse" x1="465.1" y1="1137.6" x2="-427.7" y2="1400.2"><stop offset="0" stop-opacity="1"/><stop offset="0.01" stop-opacity="0.968"/><stop offset="0.02" stop-opacity="0.938"/><stop offset="0.04" stop-opacity="0.88"/><stop offset="0.07" stop-opacity="0.803"/><stop offset="0.12" stop-opacity="0.692"/><stop offset="0.25" stop-opacity="0.479"/><stop offset="1" stop-opacity="0"/></linearGradient><linearGradient class="w" id="wgb82" gradientUnits="userSpaceOnUse" x1="465.1" y1="1137.6" x2="-427.7" y2="1400.2"><stop offset="0" stop-opacity="1"/><stop offset="0.01" stop-opacity="0.967"/><stop offset="0.02" stop-opacity="0.936"/><stop offset="0.04" stop-opacity="0.877"/><stop offset="0.07" stop-opacity="0.798"/><stop offset="0.12" stop-opacity="0.686"/><stop offset="0.25" stop-opacity="0.472"/><stop offset="1" stop-opacity="0"/></linearGradient><linearGradient class="w" id="wgb83" gradientUnits="userSpaceOnUse" x1="465.1" y1="1137.6" x2="-427.7" y2="1400.2"><stop offset="0" stop-opacity="1"/><stop offset="0.01" stop-opacity="0.966"/><stop offset="0.02" stop-opacity="0.934"/><stop offset="0.04" stop-opacity="0.874"/><stop offset="0.07" stop-opacity="0.794"/><stop offset="0.12" stop-opacity="0.68"/><stop offset="0.25" stop-opacity="0.465"/><stop offset="1" stop-opacity="0"/></linearGradient><linearGradient class="w" id="wgb84" gradientUnits="userSpaceOnUse" x1="465.1" y1="1137.6" x2="-427.7" y2="1400.2"><stop offset="0" stop-opacity="1"/><stop offset="0.01" stop-opacity="0.965"/><stop offset="0.02" stop-opacity="0.932"/><stop offset="0.04" stop-opacity="0.871"/><stop offset="0.07" stop-opacity="0.789"/><stop offset="0.12" stop-opacity="0.674"/><stop offset="0.25" stop-opacity="0.458"/><stop offset="1" stop-opacity="0"/></linearGradient><linearGradient class="w" id="wgb85" gradientUnits="userSpaceOnUse" x1="465.1" y1="1137.6" x2="-427.7" y2="1400.2"><stop offset="0" stop-opacity="1"/><stop offset="0.01" stop-opacity="0.964"/><stop offset="0.02" stop-opacity="0.931"/><stop offset="0.04" stop-opacity="0.868"/><stop offset="0.07" stop-opacity="0.785"/><stop offset="0.12" stop-opacity="0.668"/><stop offset="0.25" stop-opacity="0.451"/><stop offset="1" stop-opacity="0"/></linearGradient><linearGradient class="w" id="wgb86" gradientUnits="userSpaceOnUse" x1="465.1" y1="1137.6" x2="-427.7" y2="1400.2"><stop offset="0" stop-opacity="1"/><stop offset="0.01" stop-opacity="0.964"/><stop offset="0.02" stop-opacity="0.929"/><stop offset="0.04" stop-opacity="0.865"/><stop offset="0.07" stop-opacity="0.78"/><stop offset="0.12" stop-opacity="0.662"/><stop offset="0.25" stop-opacity="0.445"/><stop offset="1" stop-opacity="0"/></linearGradient><linearGradient class="w" id="wgb87" gradientUnits="userSpaceOnUse" x1="465.1" y1="1137.6" x2="-427.7" y2="1400.2"><stop offset="0" stop-opacity="1"/><stop offset="0.01" stop-opacity="0.963"/><stop offset="0.02" stop-opacity="0.927"/><stop offset="0.04" stop-opacity="0.862"/><stop offset="0.07" stop-opacity="0.776"/><stop offset="0.12" stop-opacity="0.656"/><stop offset="0.25" stop-opacity="0.438"/><stop offset="1" stop-opacity="0"/></linearGradient><linearGradient class="w" id="wgb88" gradientUnits="userSpaceOnUse" x1="465.1" y1="1137.6" x2="-427.7" y2="1400.2"><stop offset="0" stop-opacity="1"/><stop offset="0.01" stop-opacity="0.962"/><stop offset="0.02" stop-opacity="0.926"/><stop offset="0.04" stop-opacity="0.859"/><stop offset="0.07" stop-opacity="0.771"/><stop offset="0.12" stop-opacity="0.65"/><stop offset="0.25" stop-opacity="0.432"/><stop offset="1" stop-opacity="0"/></linearGradient><linearGradient class="w" id="wgb89" gradientUnits="userSpaceOnUse" x1="465.1" y1="1137.6" x2="-427.7" y2="1400.2"><stop offset="0" stop-opacity="1"/><stop offset="0.01" stop-opacity="0.961"/><stop offset="0.02" stop-opacity="0.924"/><stop offset="0.04" stop-opacity="0.856"/><stop offset="0.07" stop-opacity="0.767"/><stop offset="0.12" stop-opacity="0.645"/><stop offset="0.25" stop-opacity="0.426"/><stop offset="1" stop-opacity="0"/></linearGradient><linearGradient class="w" id="wgb90" gradientUnits="userSpaceOnUse" x1="465.1" y1="1137.6" x2="-427.7" y2="1400.2"><stop offset="0" stop-opacity="1"/><stop offset="0.01" stop-opacity="0.96"/><stop offset="0.02" stop-opacity="0.922"/><stop offset="0.04" stop-opacity="0.853"/><stop offset="0.07" stop-opacity="0.763"/><stop offset="0.12" stop-opacity="0.639"/><stop offset="0.25" stop-opacity="0.42"/><stop offset="1" stop-opacity="0"/></linearGradient><linearGradient class="w" id="wgb91" gradientUnits="userSpaceOnUse" x1="465.1" y1="1137.6" x2="-427.7" y2="1400.2"><stop offset="0" stop-opacity="1"/><stop offset="0.01" stop-opacity="0.959"/><stop offset="0.02" stop-opacity="0.92"/><stop offset="0.04" stop-opacity="0.85"/><stop offset="0.07" stop-opacity="0.758"/><stop offset="0.12" stop-opacity="0.634"/><stop offset="0.25" stop-opacity="0.415"/><stop offset="1" stop-opacity="0"/></linearGradient><linearGradient class="w" id="wgb92" gradientUnits="userSpaceOnUse" x1="465.1" y1="1137.6" x2="-427.7" y2="1400.2"><stop offset="0" stop-opacity="1"/><stop offset="0.01" stop-opacity="0.958"/><stop offset="0.02" stop-opacity="0.919"/><stop offset="0.04" stop-opacity="0.847"/><stop offset="0.07" stop-opacity="0.754"/><stop offset="0.12" stop-opacity="0.629"/><stop offset="0.25" stop-opacity="0.409"/><stop offset="1" stop-opacity="0"/></linearGradient><linearGradient class="w" id="wgb93" gradientUnits="userSpaceOnUse" x1="465.1" y1="1137.6" x2="-427.7" y2="1400.2"><stop offset="0" stop-opacity="1"/><stop offset="0.01" stop-opacity="0.957"/><stop offset="0.02" stop-opacity="0.917"/><stop offset="0.04" stop-opacity="0.844"/><stop offset="0.07" stop-opacity="0.75"/><stop offset="0.12" stop-opacity="0.624"/><stop offset="0.25" stop-opacity="0.404"/><stop offset="1" stop-opacity="0"/></linearGradient><linearGradient class="w" id="wgb94" gradientUnits="userSpaceOnUse" x1="465.1" y1="1137.6" x2="-427.7" y2="1400.2"><stop offset="0" stop-opacity="1"/><stop offset="0.01" stop-opacity="0.956"/><stop offset="0.02" stop-opacity="0.915"/><stop offset="0.04" stop-opacity="0.841"/><stop offset="0.07" stop-opacity="0.746"/><stop offset="0.12" stop-opacity="0.618"/><stop offset="0.25" stop-opacity="0.399"/><stop offset="1" stop-opacity="0"/></linearGradient><linearGradient class="w" id="wgb95" gradientUnits="userSpaceOnUse" x1="465.1" y1="1137.6" x2="-427.7" y2="1400.2"><stop offset="0" stop-opacity="1"/><stop offset="0.01" stop-opacity="0.955"/><stop offset="0.02" stop-opacity="0.914"/><stop offset="0.04" stop-opacity="0.839"/><stop offset="0.07" stop-opacity="0.742"/><stop offset="0.12" stop-opacity="0.613"/><stop offset="0.25" stop-opacity="0.394"/><stop offset="1" stop-opacity="0"/></linearGradient><linearGradient class="w" id="wgb96" gradientUnits="userSpaceOnUse" x1="465.1" y1="1137.6" x2="1272.0" y2="2573.5"><stop offset="0" stop-opacity="1"/><stop offset="0.01" stop-opacity="0.955"/><stop offset="0.02" stop-opacity="0.914"/><stop offset="0.04" stop-opacity="0.839"/><stop offset="0.07" stop-opacity="0.742"/><stop offset="0.12" stop-opacity="0.613"/><stop offset="0.25" stop-opacity="0.394"/><stop offset="1" stop-opacity="0"/></linearGradient><linearGradient class="w" id="wgb97" gradientUnits="userSpaceOnUse" x1="465.1" y1="1137.6" x2="1272.0" y2="2573.5"><stop offset="0" stop-opacity="1"/><stop offset="0.01" stop-opacity="0.956"/><stop offset="0.02" stop-opacity="0.915"/><stop offset="0.04" stop-opacity="0.841"/><stop offset="0.07" stop-opacity="0.746"/><stop offset="0.12" stop-opacity="0.618"/><stop offset="0.25" stop-opacity="0.399"/><stop offset="1" stop-opacity="0"/></linearGradient><linearGradient class="w" id="wgb98" gradientUnits="userSpaceOnUse" x1="465.1" y1="1137.6" x2="1272.0" y2="2573.5"><stop offset="0" stop-opacity="1"/><stop offset="0.01" stop-opacity="0.957"/><stop offset="0.02" stop-opacity="0.917"/><stop offset="0.04" stop-opacity="0.844"/><stop offset="0.07" stop-opacity="0.75"/><stop offset="0.12" stop-opacity="0.624"/><stop offset="0.25" stop-opacity="0.404"/><stop offset="1" stop-opacity="0"/></linearGradient><linearGradient class="w" id="wgb99" gradientUnits="userSpaceOnUse" x1="465.1" y1="1137.6" x2="1272.0" y2="2573.5"><stop offset="0" stop-opacity="1"/><stop offset="0.01" stop-opacity="0.958"/><stop offset="0.02" stop-opacity="0.919"/><stop offset="0.04" stop-opacity="0.847"/><stop offset="0.07" stop-opacity="0.754"/><stop offset="0.12" stop-opacity="0.629"/><stop offset="0.25" stop-opacity="0.409"/><stop offset="1" stop-opacity="0"/></linearGradient><linearGradient class="w" id="wgb100" gradientUnits="userSpaceOnUse" x1="465.1" y1="1137.6" x2="1272.0" y2="2573.5"><stop offset="0" stop-opacity="1"/><stop offset="0.01" stop-opacity="0.959"/><stop offset="0.02" stop-opacity="0.92"/><stop offset="0.04" stop-opacity="0.85"/><stop offset="0.07" stop-opacity="0.758"/><stop offset="0.12" stop-opacity="0.634"/><stop offset="0.25" stop-opacity="0.415"/><stop offset="1" stop-opacity="0"/></linearGradient><linearGradient class="w" id="wgb101" gradientUnits="userSpaceOnUse" x1="465.1" y1="1137.6" x2="1272.0" y2="2573.5"><stop offset="0" stop-opacity="1"/><stop offset="0.01" stop-opacity="0.96"/><stop offset="0.02" stop-opacity="0.922"/><stop offset="0.04" stop-opacity="0.853"/><stop offset="0.07" stop-opacity="0.763"/><stop offset="0.12" stop-opacity="0.639"/><stop offset="0.25" stop-opacity="0.42"/><stop offset="1" stop-opacity="0"/></linearGradient><linearGradient class="w" id="wgb102" gradientUnits="userSpaceOnUse" x1="465.1" y1="1137.6" x2="1272.0" y2="2573.5"><stop offset="0" stop-opacity="1"/><stop offset="0.01" stop-opacity="0.961"/><stop offset="0.02" stop-opacity="0.924"/><stop offset="0.04" stop-opacity="0.856"/><stop offset="0.07" stop-opacity="0.767"/><stop offset="0.12" stop-opacity="0.645"/><stop offset="0.25" stop-opacity="0.426"/><stop offset="1" stop-opacity="0"/></linearGradient><linearGradient class="w" id="wgb103" gradientUnits="userSpaceOnUse" x1="465.1" y1="1137.6" x2="1272.0" y2="2573.5"><stop offset="0" stop-opacity="1"/><stop offset="0.01" stop-opacity="0.962"/><stop offset="0.02" stop-opacity="0.926"/><stop offset="0.04" stop-opacity="0.859"/><stop offset="0.07" stop-opacity="0.771"/><stop offset="0.12" stop-opacity="0.65"/><stop offset="0.25" stop-opacity="0.432"/><stop offset="1" stop-opacity="0"/></linearGradient><linearGradient class="w" id="wgb104" gradientUnits="userSpaceOnUse" x1="465.1" y1="1137.6" x2="1272.0" y2="2573.5"><stop offset="0" stop-opacity="1"/><stop offset="0.01" stop-opacity="0.963"/><stop offset="0.02" stop-opacity="0.927"/><stop offset="0.04" stop-opacity="0.862"/><stop offset="0.07" stop-opacity="0.776"/><stop offset="0.12" stop-opacity="0.656"/><stop offset="0.25" stop-opacity="0.438"/><stop offset="1" stop-opacity="0"/></linearGradient><linearGradient class="w" id="wgb105" gradientUnits="userSpaceOnUse" x1="465.1" y1="1137.6" x2="1272.0" y2="2573.5"><stop offset="0" stop-opacity="1"/><stop offset="0.01" stop-opacity="0.964"/><stop offset="0.02" stop-opacity="0.929"/><stop offset="0.04" stop-opacity="0.865"/><stop offset="0.07" stop-opacity="0.78"/><stop offset="0.12" stop-opacity="0.662"/><stop offset="0.25" stop-opacity="0.445"/><stop offset="1" stop-opacity="0"/></linearGradient><linearGradient class="w" id="wgb106" gradientUnits="userSpaceOnUse" x1="465.1" y1="1137.6" x2="1272.0" y2="2573.5"><stop offset="0" stop-opacity="1"/><stop offset="0.01" stop-opacity="0.964"/><stop offset="0.02" stop-opacity="0.931"/><stop offset="0.04" stop-opacity="0.868"/><stop offset="0.07" stop-opacity="0.785"/><stop offset="0.12" stop-opacity="0.668"/><stop offset="0.25" stop-opacity="0.451"/><stop offset="1" stop-opacity="0"/></linearGradient><linearGradient class="w" id="wgb107" gradientUnits="userSpaceOnUse" x1="465.1" y1="1137.6" x2="1272.0" y2="2573.5"><stop offset="0" stop-opacity="1"/><stop offset="0.01" stop-opacity="0.965"/><stop offset="0.02" stop-opacity="0.932"/><stop offset="0.04" stop-opacity="0.871"/><stop offset="0.07" stop-opacity="0.789"/><stop offset="0.12" stop-opacity="0.674"/><stop offset="0.25" stop-opacity="0.458"/><stop offset="1" stop-opacity="0"/></linearGradient><linearGradient class="w" id="wgb108" gradientUnits="userSpaceOnUse" x1="465.1" y1="1137.6" x2="1272.0" y2="2573.5"><stop offset="0" stop-opacity="1"/><stop offset="0.01" stop-opacity="0.966"/><stop offset="0.02" stop-opacity="0.934"/><stop offset="0.04" stop-opacity="0.874"/><stop offset="0.07" stop-opacity="0.794"/><stop offset="0.12" stop-opacity="0.68"/><stop offset="0.25" stop-opacity="0.465"/><stop offset="1" stop-opacity="0"/></linearGradient><linearGradient class="w" id="wgb109" gradientUnits="userSpaceOnUse" x1="465.1" y1="1137.6" x2="1272.0" y2="2573.5"><stop offset="0" stop-opacity="1"/><stop offset="0.01" stop-opacity="0.967"/><stop offset="0.02" stop-opacity="0.936"/><stop offset="0.04" stop-opacity="0.877"/><stop offset="0.07" stop-opacity="0.798"/><stop offset="0.12" stop-opacity="0.686"/><stop offset="0.25" stop-opacity="0.472"/><stop offset="1" stop-opacity="0"/></linearGradient><linearGradient class="w" id="wgb110" gradientUnits="userSpaceOnUse" x1="465.1" y1="1137.6" x2="1272.0" y2="2573.5"><stop offset="0" stop-opacity="1"/><stop offset="0.01" stop-opacity="0.968"/><stop offset="0.02" stop-opacity="0.938"/><stop offset="0.04" stop-opacity="0.88"/><stop offset="0.07" stop-opacity="0.803"/><stop offset="0.12" stop-opacity="0.692"/><stop offset="0.25" stop-opacity="0.479"/><stop offset="1" stop-opacity="0"/></linearGradient><linearGradient class="w" id="wgb111" gradientUnits="userSpaceOnUse" x1="465.1" y1="1137.6" x2="1272.0" y2="2573.5"><stop offset="0" stop-opacity="1"/><stop offset="0.01" stop-opacity="0.969"/><stop offset="0.02" stop-opacity="0.939"/><stop offset="0.04" stop-opacity="0.884"/><stop offset="0.07" stop-opacity="0.808"/><stop offset="0.12" stop-opacity="0.699"/><stop offset="0.25" stop-opacity="0.487"/><stop offset="1" stop-opacity="0"/></linearGradient><linearGradient class="w" id="wgb112" gradientUnits="userSpaceOnUse" x1="465.1" y1="1137.6" x2="1272.0" y2="2573.5"><stop offset="0" stop-opacity="1"/><stop offset="0.01" stop-opacity="0.97"/><stop offset="0.02" stop-opacity="0.941"/><stop offset="0.04" stop-opacity="0.887"/><stop offset="0.07" stop-opacity="0.813"/><stop offset="0.12" stop-opacity="0.705"/><stop offset="0.25" stop-opacity="0.495"/><stop offset="1" stop-opacity="0"/></linearGradient><linearGradient class="w" id="wgb113" gradientUnits="userSpaceOnUse" x1="465.1" y1="1137.6" x2="1272.0" y2="2573.5"><stop offset="0" stop-opacity="1"/><stop offset="0.01" stop-opacity="0.971"/><stop offset="0.02" stop-opacity="0.943"/><stop offset="0.04" stop-opacity="0.89"/><stop offset="0.07" stop-opacity="0.817"/><stop offset="0.12" stop-opacity="0.712"/><stop offset="0.25" stop-opacity="0.503"/><stop offset="1" stop-opacity="0"/></linearGradient><linearGradient class="w" id="wgb114" gradientUnits="userSpaceOnUse" x1="465.1" y1="1137.6" x2="1272.0" y2="2573.5"><stop offset="0" stop-opacity="1"/><stop offset="0.01" stop-opacity="0.972"/><stop offset="0.02" stop-opacity="0.945"/><stop offset="0.04" stop-opacity="0.893"/><stop offset="0.07" stop-opacity="0.822"/><stop offset="0.12" stop-opacity="0.719"/><stop offset="0.25" stop-opacity="0.511"/><stop offset="1" stop-opacity="0"/></linearGradient><linearGradient class="w" id="wgb115" gradientUnits="userSpaceOnUse" x1="465.1" y1="1137.6" x2="1272.0" y2="2573.5"><stop offset="0" stop-opacity="1"/><stop offset="0.01" stop-opacity="0.973"/><stop offset="0.02" stop-opacity="0.946"/><stop offset="0.04" stop-opacity="0.896"/><stop offset="0.07" stop-opacity="0.827"/><stop offset="0.12" stop-opacity="0.726"/><stop offset="0.25" stop-opacity="0.52"/><stop offset="1" stop-opacity="0"/></linearGradient><linearGradient class="w" id="wgb116" gradientUnits="userSpaceOnUse" x1="465.1" y1="1137.6" x2="1272.0" y2="2573.5"><stop offset="0" stop-opacity="1"/><stop offset="0.01" stop-opacity="0.974"/><stop offset="0.02" stop-opacity="0.948"/><stop offset="0.04" stop-opacity="0.9"/><stop offset="0.07" stop-opacity="0.832"/><stop offset="0.12" stop-opacity="0.733"/><stop offset="0.25" stop-opacity="0.529"/><stop offset="1" stop-opacity="0"/></linearGradient><linearGradient class="w" id="wgb117" gradientUnits="userSpaceOnUse" x1="465.1" y1="1137.6" x2="1272.0" y2="2573.5"><stop offset="0" stop-opacity="1"/><stop offset="0.01" stop-opacity="0.975"/><stop offset="0.02" stop-opacity="0.95"/><stop offset="0.04" stop-opacity="0.903"/><stop offset="0.07" stop-opacity="0.837"/><stop offset="0.12" stop-opacity="0.74"/><stop offset="0.25" stop-opacity="0.538"/><stop offset="1" stop-opacity="0"/></linearGradient><linearGradient class="w" id="wgb118" gradientUnits="userSpaceOnUse" x1="465.1" y1="1137.6" x2="1272.0" y2="2573.5"><stop offset="0" stop-opacity="1"/><stop offset="0.01" stop-opacity="0.976"/><stop offset="0.02" stop-opacity="0.952"/><stop offset="0.04" stop-opacity="0.906"/><stop offset="0.07" stop-opacity="0.843"/><stop offset="0.12" stop-opacity="0.747"/><stop offset="0.25" stop-opacity="0.547"/><stop offset="1" stop-opacity="0"/></linearGradient><linearGradient class="w" id="wgb119" gradientUnits="userSpaceOnUse" x1="465.1" y1="1137.6" x2="1272.0" y2="2573.5"><stop offset="0" stop-opacity="1"/><stop offset="0.01" stop-opacity="0.975"/><stop offset="0.02" stop-opacity="0.95"/><stop offset="0.04" stop-opacity="0.903"/><stop offset="0.07" stop-opacity="0.838"/><stop offset="0.12" stop-opacity="0.74"/><stop offset="0.25" stop-opacity="0.539"/><stop offset="1" stop-opacity="0"/></linearGradient><linearGradient class="w" id="wgb120" gradientUnits="userSpaceOnUse" x1="465.1" y1="1137.6" x2="1272.0" y2="2573.5"><stop offset="0" stop-opacity="1"/><stop offset="0.01" stop-opacity="0.974"/><stop offset="0.02" stop-opacity="0.948"/><stop offset="0.04" stop-opacity="0.9"/><stop offset="0.07" stop-opacity="0.832"/><stop offset="0.12" stop-opacity="0.732"/><stop offset="0.25" stop-opacity="0.528"/><stop offset="1" stop-opacity="0"/></linearGradient><linearGradient class="w" id="wgb121" gradientUnits="userSpaceOnUse" x1="465.1" y1="1137.6" x2="1272.0" y2="2573.5"><stop offset="0" stop-opacity="1"/><stop offset="0.01" stop-opacity="0.973"/><stop offset="0.02" stop-opacity="0.946"/><stop offset="0.04" stop-opacity="0.896"/><stop offset="0.07" stop-opacity="0.827"/><stop offset="0.12" stop-opacity="0.724"/><stop offset="0.25" stop-opacity="0.518"/><stop offset="1" stop-opacity="0"/></linearGradient><linearGradient class="w" id="wgb122" gradientUnits="userSpaceOnUse" x1="465.1" y1="1137.6" x2="1272.0" y2="2573.5"><stop offset="0" stop-opacity="1"/><stop offset="0.01" stop-opacity="0.972"/><stop offset="0.02" stop-opacity="0.944"/><stop offset="0.04" stop-opacity="0.892"/><stop offset="0.07" stop-opacity="0.821"/><stop offset="0.12" stop-opacity="0.717"/><stop offset="0.25" stop-opacity="0.509"/><stop offset="1" stop-opacity="0"/></linearGradient><linearGradient class="w" id="wgb123" gradientUnits="userSpaceOnUse" x1="465.1" y1="1137.6" x2="1272.0" y2="2573.5"><stop offset="0" stop-opacity="1"/><stop offset="0.01" stop-opacity="0.971"/><stop offset="0.02" stop-opacity="0.942"/><stop offset="0.04" stop-opacity="0.889"/><stop offset="0.07" stop-opacity="0.815"/><stop offset="0.12" stop-opacity="0.709"/><stop offset="0.25" stop-opacity="0.499"/><stop offset="1" stop-opacity="0"/></linearGradient><linearGradient class="w" id="wgb124" gradientUnits="userSpaceOnUse" x1="465.1" y1="1137.6" x2="1272.0" y2="2573.5"><stop offset="0" stop-opacity="1"/><stop offset="0.01" stop-opacity="0.969"/><stop offset="0.02" stop-opacity="0.94"/><stop offset="0.04" stop-opacity="0.885"/><stop offset="0.07" stop-opacity="0.81"/><stop offset="0.12" stop-opacity="0.702"/><stop offset="0.25" stop-opacity="0.49"/><stop offset="1" stop-opacity="0"/></linearGradient><linearGradient class="w" id="wgb125" gradientUnits="userSpaceOnUse" x1="465.1" y1="1137.6" x2="1272.0" y2="2573.5"><stop offset="0" stop-opacity="1"/><stop offset="0.01" stop-opacity="0.968"/><stop offset="0.02" stop-opacity="0.938"/><stop offset="0.04" stop-opacity="0.881"/><stop offset="0.07" stop-opacity="0.805"/><stop offset="0.12" stop-opacity="0.694"/><stop offset="0.25" stop-opacity="0.482"/><stop offset="1" stop-opacity="0"/></linearGradient><linearGradient class="w" id="wgb126" gradientUnits="userSpaceOnUse" x1="465.1" y1="1137.6" x2="1272.0" y2="2573.5"><stop offset="0" stop-opacity="1"/><stop offset="0.01" stop-opacity="0.967"/><stop offset="0.02" stop-opacity="0.936"/><stop offset="0.04" stop-opacity="0.878"/><stop offset="0.07" stop-opacity="0.799"/><stop offset="0.12" stop-opacity="0.687"/><stop offset="0.25" stop-opacity="0.473"/><stop offset="1" stop-opacity="0"/></linearGradient><linearGradient class="w" id="wgb127" gradientUnits="userSpaceOnUse" x1="465.1" y1="1137.6" x2="1272.0" y2="2573.5"><stop offset="0" stop-opacity="1"/><stop offset="0.01" stop-opacity="0.966"/><stop offset="0.02" stop-opacity="0.934"/><stop offset="0.04" stop-opacity="0.874"/><stop offset="0.07" stop-opacity="0.794"/><stop offset="0.12" stop-opacity="0.68"/><stop offset="0.25" stop-opacity="0.465"/><stop offset="1" stop-opacity="0"/></linearGradient><linearGradient class="w" id="wgb128" gradientUnits="userSpaceOnUse" x1="465.1" y1="1137.6" x2="1272.0" y2="2573.5"><stop offset="0" stop-opacity="1"/><stop offset="0.01" stop-opacity="0.965"/><stop offset="0.02" stop-opacity="0.932"/><stop offset="0.04" stop-opacity="0.871"/><stop offset="0.07" stop-opacity="0.789"/><stop offset="0.12" stop-opacity="0.674"/><stop offset="0.25" stop-opacity="0.458"/><stop offset="1" stop-opacity="0"/></linearGradient><linearGradient class="w" id="wgb129" gradientUnits="userSpaceOnUse" x1="465.1" y1="1137.6" x2="1272.0" y2="2573.5"><stop offset="0" stop-opacity="1"/><stop offset="0.01" stop-opacity="0.964"/><stop offset="0.02" stop-opacity="0.93"/><stop offset="0.04" stop-opacity="0.868"/><stop offset="0.07" stop-opacity="0.784"/><stop offset="0.12" stop-opacity="0.667"/><stop offset="0.25" stop-opacity="0.45"/><stop offset="1" stop-opacity="0"/></linearGradient><linearGradient class="w" id="wgb130" gradientUnits="userSpaceOnUse" x1="465.1" y1="1137.6" x2="1272.0" y2="2573.5"><stop offset="0" stop-opacity="1"/><stop offset="0.01" stop-opacity="0.963"/><stop offset="0.02" stop-opacity="0.928"/><stop offset="0.04" stop-opacity="0.864"/><stop offset="0.07" stop-opacity="0.779"/><stop offset="0.12" stop-opacity="0.66"/><stop offset="0.25" stop-opacity="0.443"/><stop offset="1" stop-opacity="0"/></linearGradient><linearGradient class="w" id="wgb131" gradientUnits="userSpaceOnUse" x1="465.1" y1="1137.6" x2="1272.0" y2="2573.5"><stop offset="0" stop-opacity="1"/><stop offset="0.01" stop-opacity="0.962"/><stop offset="0.02" stop-opacity="0.927"/><stop offset="0.04" stop-opacity="0.861"/><stop offset="0.07" stop-opacity="0.774"/><stop offset="0.12" stop-opacity="0.654"/><stop offset="0.25" stop-opacity="0.436"/><stop offset="1" stop-opacity="0"/></linearGradient><linearGradient class="w" id="wgb132" gradientUnits="userSpaceOnUse" x1="465.1" y1="1137.6" x2="1272.0" y2="2573.5"><stop offset="0" stop-opacity="1"/><stop offset="0.01" stop-opacity="0.961"/><stop offset="0.02" stop-opacity="0.925"/><stop offset="0.04" stop-opacity="0.857"/><stop offset="0.07" stop-opacity="0.769"/><stop offset="0.12" stop-opacity="0.648"/><stop offset="0.25" stop-opacity="0.429"/><stop offset="1" stop-opacity="0"/></linearGradient><linearGradient class="w" id="wgb133" gradientUnits="userSpaceOnUse" x1="465.1" y1="1137.6" x2="1272.0" y2="2573.5"><stop offset="0" stop-opacity="1"/><stop offset="0.01" stop-opacity="0.96"/><stop offset="0.02" stop-opacity="0.923"/><stop offset="0.04" stop-opacity="0.854"/><stop offset="0.07" stop-opacity="0.764"/><stop offset="0.12" stop-opacity="0.641"/><stop offset="0.25" stop-opacity="0.422"/><stop offset="1" stop-opacity="0"/></linearGradient><linearGradient class="w" id="wgb134" gradientUnits="userSpaceOnUse" x1="465.1" y1="1137.6" x2="1272.0" y2="2573.5"><stop offset="0" stop-opacity="1"/><stop offset="0.01" stop-opacity="0.959"/><stop offset="0.02" stop-opacity="0.921"/><stop offset="0.04" stop-opacity="0.851"/><stop offset="0.07" stop-opacity="0.759"/><stop offset="0.12" stop-opacity="0.635"/><stop offset="0.25" stop-opacity="0.416"/><stop offset="1" stop-opacity="0"/></linearGradient><linearGradient class="w" id="wgb135" gradientUnits="userSpaceOnUse" x1="465.1" y1="1137.6" x2="1272.0" y2="2573.5"><stop offset="0" stop-opacity="1"/><stop offset="0.01" stop-opacity="0.958"/><stop offset="0.02" stop-opacity="0.919"/><stop offset="0.04" stop-opacity="0.847"/><stop offset="0.07" stop-opacity="0.755"/><stop offset="0.12" stop-opacity="0.629"/><stop offset="0.25" stop-opacity="0.41"/><stop offset="1" stop-opacity="0"/></linearGradient><linearGradient class="w" id="wgb136" gradientUnits="userSpaceOnUse" x1="465.1" y1="1137.6" x2="1272.0" y2="2573.5"><stop offset="0" stop-opacity="1"/><stop offset="0.01" stop-opacity="0.957"/><stop offset="0.02" stop-opacity="0.917"/><stop offset="0.04" stop-opacity="0.844"/><stop offset="0.07" stop-opacity="0.75"/><stop offset="0.12" stop-opacity="0.623"/><stop offset="0.25" stop-opacity="0.404"/><stop offset="1" stop-opacity="0"/></linearGradient><linearGradient class="w" id="wgb137" gradientUnits="userSpaceOnUse" x1="465.1" y1="1137.6" x2="1272.0" y2="2573.5"><stop offset="0" stop-opacity="1"/><stop offset="0.01" stop-opacity="0.956"/><stop offset="0.02" stop-opacity="0.915"/><stop offset="0.04" stop-opacity="0.841"/><stop offset="0.07" stop-opacity="0.745"/><stop offset="0.12" stop-opacity="0.618"/><stop offset="0.25" stop-opacity="0.398"/><stop offset="1" stop-opacity="0"/></linearGradient><linearGradient class="w" id="wgb138" gradientUnits="userSpaceOnUse" x1="465.1" y1="1137.6" x2="1272.0" y2="2573.5"><stop offset="0" stop-opacity="1"/><stop offset="0.01" stop-opacity="0.955"/><stop offset="0.02" stop-opacity="0.913"/><stop offset="0.04" stop-opacity="0.838"/><stop offset="0.07" stop-opacity="0.741"/><stop offset="0.12" stop-opacity="0.612"/><stop offset="0.25" stop-opacity="0.392"/><stop offset="1" stop-opacity="0"/></linearGradient><linearGradient class="w" id="wgb139" gradientUnits="userSpaceOnUse" x1="465.1" y1="1137.6" x2="1272.0" y2="2573.5"><stop offset="0" stop-opacity="1"/><stop offset="0.01" stop-opacity="0.954"/><stop offset="0.02" stop-opacity="0.911"/><stop offset="0.04" stop-opacity="0.835"/><stop offset="0.07" stop-opacity="0.736"/><stop offset="0.12" stop-opacity="0.607"/><stop offset="0.25" stop-opacity="0.387"/><stop offset="1" stop-opacity="0"/></linearGradient><linearGradient class="w" id="wgb140" gradientUnits="userSpaceOnUse" x1="465.1" y1="1137.6" x2="1272.0" y2="2573.5"><stop offset="0" stop-opacity="1"/><stop offset="0.01" stop-opacity="0.953"/><stop offset="0.02" stop-opacity="0.91"/><stop offset="0.04" stop-opacity="0.831"/><stop offset="0.07" stop-opacity="0.732"/><stop offset="0.12" stop-opacity="0.601"/><stop offset="0.25" stop-opacity="0.381"/><stop offset="1" stop-opacity="0"/></linearGradient><linearGradient class="w" id="wgb141" gradientUnits="userSpaceOnUse" x1="465.1" y1="1137.6" x2="1272.0" y2="2573.5"><stop offset="0" stop-opacity="1"/><stop offset="0.01" stop-opacity="0.952"/><stop offset="0.02" stop-opacity="0.908"/><stop offset="0.04" stop-opacity="0.828"/><stop offset="0.07" stop-opacity="0.728"/><stop offset="0.12" stop-opacity="0.596"/><stop offset="0.25" stop-opacity="0.376"/><stop offset="1" stop-opacity="0"/></linearGradient><linearGradient class="w" id="wgb142" gradientUnits="userSpaceOnUse" x1="465.1" y1="1137.6" x2="1272.0" y2="2573.5"><stop offset="0" stop-opacity="1"/><stop offset="0.01" stop-opacity="0.951"/><stop offset="0.02" stop-opacity="0.906"/><stop offset="0.04" stop-opacity="0.825"/><stop offset="0.07" stop-opacity="0.723"/><stop offset="0.12" stop-opacity="0.59"/><stop offset="0.25" stop-opacity="0.371"/><stop offset="1" stop-opacity="0"/></linearGradient><linearGradient class="w" id="wgb143" gradientUnits="userSpaceOnUse" x1="465.1" y1="1137.6" x2="1272.0" y2="2573.5"><stop offset="0" stop-opacity="1"/><stop offset="0.01" stop-opacity="0.95"/><stop offset="0.02" stop-opacity="0.904"/><stop offset="0.04" stop-opacity="0.822"/><stop offset="0.07" stop-opacity="0.719"/><stop offset="0.12" stop-opacity="0.585"/><stop offset="0.25" stop-opacity="0.366"/><stop offset="1" stop-opacity="0"/></linearGradient><clipPath id="cbb"><rect x="71" y="969" width="790" height="334"/></clipPath></defs><g clip-path="url(#cbb)" shape-rendering="crispEdges"><polygon points="465.14,1137.61 4480.78,770.37 4373.03,764.81" fill="url(#wgb0)"/><polygon points="465.14,1137.61 4373.03,764.81 4265.28,759.26" fill="url(#wgb1)"/><polygon points="465.14,1137.61 4265.28,759.26 4157.52,753.71" fill="url(#wgb2)"/><polygon points="465.14,1137.61 4157.52,753.71 4049.77,748.15" fill="url(#wgb3)"/><polygon points="465.14,1137.61 4049.77,748.15 3942.01,742.60" fill="url(#wgb4)"/><polygon points="465.14,1137.61 3942.01,742.60 3834.26,737.04" fill="url(#wgb5)"/><polygon points="465.14,1137.61 3834.26,737.04 3726.51,731.49" fill="url(#wgb6)"/><polygon points="465.14,1137.61 3726.51,731.49 3618.75,725.94" fill="url(#wgb7)"/><polygon points="465.14,1137.61 3618.75,725.94 3511.00,720.38" fill="url(#wgb8)"/><polygon points="465.14,1137.61 3511.00,720.38 3403.24,714.83" fill="url(#wgb9)"/><polygon points="465.14,1137.61 3403.24,714.83 3295.49,709.27" fill="url(#wgb10)"/><polygon points="465.14,1137.61 3295.49,709.27 3187.74,703.72" fill="url(#wgb11)"/><polygon points="465.14,1137.61 3187.74,703.72 3079.98,698.17" fill="url(#wgb12)"/><polygon points="465.14,1137.61 3079.98,698.17 2972.23,692.61" fill="url(#wgb13)"/><polygon points="465.14,1137.61 2972.23,692.61 2864.48,687.06" fill="url(#wgb14)"/><polygon points="465.14,1137.61 2864.48,687.06 2756.72,681.50" fill="url(#wgb15)"/><polygon points="465.14,1137.61 2756.72,681.50 2648.97,675.95" fill="url(#wgb16)"/><polygon points="465.14,1137.61 2648.97,675.95 2541.21,670.40" fill="url(#wgb17)"/><polygon points="465.14,1137.61 2541.21,670.40 2433.46,664.84" fill="url(#wgb18)"/><polygon points="465.14,1137.61 2433.46,664.84 2325.71,659.29" fill="url(#wgb19)"/><polygon points="465.14,1137.61 2325.71,659.29 2217.95,653.73" fill="url(#wgb20)"/><polygon points="465.14,1137.61 2217.95,653.73 2110.20,648.18" fill="url(#wgb21)"/><polygon points="465.14,1137.61 2110.20,648.18 2002.45,642.63" fill="url(#wgb22)"/><polygon points="465.14,1137.61 2002.45,642.63 1894.69,637.07" fill="url(#wgb23)"/><polygon points="465.14,1137.61 1894.69,637.07 1786.94,631.52" fill="url(#wgb24)"/><polygon points="465.14,1137.61 1786.94,631.52 1679.18,625.96" fill="url(#wgb25)"/><polygon points="465.14,1137.61 1679.18,625.96 1571.43,620.41" fill="url(#wgb26)"/><polygon points="465.14,1137.61 1571.43,620.41 1463.68,614.86" fill="url(#wgb27)"/><polygon points="465.14,1137.61 1463.68,614.86 1355.92,609.30" fill="url(#wgb28)"/><polygon points="465.14,1137.61 1355.92,609.30 1248.17,603.75" fill="url(#wgb29)"/><polygon points="465.14,1137.61 1248.17,603.75 1140.41,598.19" fill="url(#wgb30)"/><polygon points="465.14,1137.61 1140.41,598.19 1032.66,592.64" fill="url(#wgb31)"/><polygon points="465.14,1137.61 1032.66,592.64 924.91,587.09" fill="url(#wgb32)"/><polygon points="465.14,1137.61 924.91,587.09 817.15,581.53" fill="url(#wgb33)"/><polygon points="465.14,1137.61 817.15,581.53 709.40,575.98" fill="url(#wgb34)"/><polygon points="465.14,1137.61 709.40,575.98 601.65,570.42" fill="url(#wgb35)"/><polygon points="465.14,1137.61 601.65,570.42 493.89,564.87" fill="url(#wgb36)"/><polygon points="465.14,1137.61 493.89,564.87 386.14,559.32" fill="url(#wgb37)"/><polygon points="465.14,1137.61 386.14,559.32 278.38,553.76" fill="url(#wgb38)"/><polygon points="465.14,1137.61 278.38,553.76 170.63,548.21" fill="url(#wgb39)"/><polygon points="465.14,1137.61 170.63,548.21 62.88,542.65" fill="url(#wgb40)"/><polygon points="465.14,1137.61 62.88,542.65 -44.88,537.10" fill="url(#wgb41)"/><polygon points="465.14,1137.61 -44.88,537.10 -152.63,531.55" fill="url(#wgb42)"/><polygon points="465.14,1137.61 -152.63,531.55 -260.38,525.99" fill="url(#wgb43)"/><polygon points="465.14,1137.61 -260.38,525.99 -368.14,520.44" fill="url(#wgb44)"/><polygon points="465.14,1137.61 -368.14,520.44 -475.89,514.88" fill="url(#wgb45)"/><polygon points="465.14,1137.61 -475.89,514.88 -583.65,509.33" fill="url(#wgb46)"/><polygon points="465.14,1137.61 -583.65,509.33 -691.40,503.77" fill="url(#wgb47)"/><polygon points="465.14,1137.61 -691.40,503.77 -674.71,560.50" fill="url(#wgb48)"/><polygon points="465.14,1137.61 -674.71,560.50 -658.03,617.23" fill="url(#wgb49)"/><polygon points="465.14,1137.61 -658.03,617.23 -641.34,673.96" fill="url(#wgb50)"/><polygon points="465.14,1137.61 -641.34,673.96 -624.65,730.69" fill="url(#wgb51)"/><polygon points="465.14,1137.61 -624.65,730.69 -607.97,787.42" fill="url(#wgb52)"/><polygon points="465.14,1137.61 -607.97,787.42 -591.28,844.15" fill="url(#wgb53)"/><polygon points="465.14,1137.61 -591.28,844.15 -574.59,900.88" fill="url(#wgb54)"/><polygon points="465.14,1137.61 -574.59,900.88 -557.91,957.61" fill="url(#wgb55)"/><polygon points="465.14,1137.61 -557.91,957.61 -541.22,1014.34" fill="url(#wgb56)"/><polygon points="465.14,1137.61 -541.22,1014.34 -524.53,1071.07" fill="url(#wgb57)"/><polygon points="465.14,1137.61 -524.53,1071.07 -507.85,1127.79" fill="url(#wgb58)"/><polygon points="465.14,1137.61 -507.85,1127.79 -491.16,1184.52" fill="url(#wgb59)"/><polygon points="465.14,1137.61 -491.16,1184.52 -474.47,1241.25" fill="url(#wgb60)"/><polygon points="465.14,1137.61 -474.47,1241.25 -457.79,1297.98" fill="url(#wgb61)"/><polygon points="465.14,1137.61 -457.79,1297.98 -441.10,1354.71" fill="url(#wgb62)"/><polygon points="465.14,1137.61 -441.10,1354.71 -424.41,1411.44" fill="url(#wgb63)"/><polygon points="465.14,1137.61 -424.41,1411.44 -407.72,1468.17" fill="url(#wgb64)"/><polygon points="465.14,1137.61 -407.72,1468.17 -391.04,1524.90" fill="url(#wgb65)"/><polygon points="465.14,1137.61 -391.04,1524.90 -374.35,1581.63" fill="url(#wgb66)"/><polygon points="465.14,1137.61 -374.35,1581.63 -357.66,1638.36" fill="url(#wgb67)"/><polygon points="465.14,1137.61 -357.66,1638.36 -340.98,1695.08" fill="url(#wgb68)"/><polygon points="465.14,1137.61 -340.98,1695.08 -324.29,1751.81" fill="url(#wgb69)"/><polygon points="465.14,1137.61 -324.29,1751.81 -307.60,1808.54" fill="url(#wgb70)"/><polygon points="465.14,1137.61 -307.60,1808.54 -290.92,1865.27" fill="url(#wgb71)"/><polygon points="465.14,1137.61 -290.92,1865.27 -274.23,1922.00" fill="url(#wgb72)"/><polygon points="465.14,1137.61 -274.23,1922.00 -257.54,1978.73" fill="url(#wgb73)"/><polygon points="465.14,1137.61 -257.54,1978.73 -240.86,2035.46" fill="url(#wgb74)"/><polygon points="465.14,1137.61 -240.86,2035.46 -224.17,2092.19" fill="url(#wgb75)"/><polygon points="465.14,1137.61 -224.17,2092.19 -207.48,2148.92" fill="url(#wgb76)"/><polygon points="465.14,1137.61 -207.48,2148.92 -190.80,2205.65" fill="url(#wgb77)"/><polygon points="465.14,1137.61 -190.80,2205.65 -174.11,2262.37" fill="url(#wgb78)"/><polygon points="465.14,1137.61 -174.11,2262.37 -157.42,2319.10" fill="url(#wgb79)"/><polygon points="465.14,1137.61 -157.42,2319.10 -140.74,2375.83" fill="url(#wgb80)"/><polygon points="465.14,1137.61 -140.74,2375.83 -124.05,2432.56" fill="url(#wgb81)"/><polygon points="465.14,1137.61 -124.05,2432.56 -107.36,2489.29" fill="url(#wgb82)"/><polygon points="465.14,1137.61 -107.36,2489.29 -90.68,2546.02" fill="url(#wgb83)"/><polygon points="465.14,1137.61 -90.68,2546.02 -73.99,2602.75" fill="url(#wgb84)"/><polygon points="465.14,1137.61 -73.99,2602.75 -57.30,2659.48" fill="url(#wgb85)"/><polygon points="465.14,1137.61 -57.30,2659.48 -40.62,2716.21" fill="url(#wgb86)"/><polygon points="465.14,1137.61 -40.62,2716.21 -23.93,2772.94" fill="url(#wgb87)"/><polygon points="465.14,1137.61 -23.93,2772.94 -7.24,2829.67" fill="url(#wgb88)"/><polygon points="465.14,1137.61 -7.24,2829.67 9.44,2886.39" fill="url(#wgb89)"/><polygon points="465.14,1137.61 9.44,2886.39 26.13,2943.12" fill="url(#wgb90)"/><polygon points="465.14,1137.61 26.13,2943.12 42.82,2999.85" fill="url(#wgb91)"/><polygon points="465.14,1137.61 42.82,2999.85 59.50,3056.58" fill="url(#wgb92)"/><polygon points="465.14,1137.61 59.50,3056.58 76.19,3113.31" fill="url(#wgb93)"/><polygon points="465.14,1137.61 76.19,3113.31 92.88,3170.04" fill="url(#wgb94)"/><polygon points="465.14,1137.61 92.88,3170.04 109.56,3226.77" fill="url(#wgb95)"/><polygon points="465.14,1137.61 109.56,3226.77 200.63,3175.59" fill="url(#wgb96)"/><polygon points="465.14,1137.61 200.63,3175.59 291.70,3124.42" fill="url(#wgb97)"/><polygon points="465.14,1137.61 291.70,3124.42 382.77,3073.24" fill="url(#wgb98)"/><polygon points="465.14,1137.61 382.77,3073.24 473.83,3022.07" fill="url(#wgb99)"/><polygon points="465.14,1137.61 473.83,3022.07 564.90,2970.89" fill="url(#wgb100)"/><polygon points="465.14,1137.61 564.90,2970.89 655.97,2919.72" fill="url(#wgb101)"/><polygon points="465.14,1137.61 655.97,2919.72 747.03,2868.54" fill="url(#wgb102)"/><polygon points="465.14,1137.61 747.03,2868.54 838.10,2817.37" fill="url(#wgb103)"/><polygon points="465.14,1137.61 838.10,2817.37 929.17,2766.19" fill="url(#wgb104)"/><polygon points="465.14,1137.61 929.17,2766.19 1020.24,2715.02" fill="url(#wgb105)"/><polygon points="465.14,1137.61 1020.24,2715.02 1111.30,2663.84" fill="url(#wgb106)"/><polygon points="465.14,1137.61 1111.30,2663.84 1202.37,2612.67" fill="url(#wgb107)"/><polygon points="465.14,1137.61 1202.37,2612.67 1293.44,2561.49" fill="url(#wgb108)"/><polygon points="465.14,1137.61 1293.44,2561.49 1384.50,2510.32" fill="url(#wgb109)"/><polygon points="465.14,1137.61 1384.50,2510.32 1475.57,2459.14" fill="url(#wgb110)"/><polygon points="465.14,1137.61 1475.57,2459.14 1566.64,2407.97" fill="url(#wgb111)"/><polygon points="465.14,1137.61 1566.64,2407.97 1657.70,2356.79" fill="url(#wgb112)"/><polygon points="465.14,1137.61 1657.70,2356.79 1748.77,2305.62" fill="url(#wgb113)"/><polygon points="465.14,1137.61 1748.77,2305.62 1839.84,2254.44" fill="url(#wgb114)"/><polygon points="465.14,1137.61 1839.84,2254.44 1930.91,2203.27" fill="url(#wgb115)"/><polygon points="465.14,1137.61 1930.91,2203.27 2021.97,2152.09" fill="url(#wgb116)"/><polygon points="465.14,1137.61 2021.97,2152.09 2113.04,2100.92" fill="url(#wgb117)"/><polygon points="465.14,1137.61 2113.04,2100.92 2204.11,2049.74" fill="url(#wgb118)"/><polygon points="465.14,1137.61 2204.11,2049.74 2295.17,1998.57" fill="url(#wgb119)"/><polygon points="465.14,1137.61 2295.17,1998.57 2386.24,1947.39" fill="url(#wgb120)"/><polygon points="465.14,1137.61 2386.24,1947.39 2477.31,1896.22" fill="url(#wgb121)"/><polygon points="465.14,1137.61 2477.31,1896.22 2568.38,1845.04" fill="url(#wgb122)"/><polygon points="465.14,1137.61 2568.38,1845.04 2659.44,1793.87" fill="url(#wgb123)"/><polygon points="465.14,1137.61 2659.44,1793.87 2750.51,1742.69" fill="url(#wgb124)"/><polygon points="465.14,1137.61 2750.51,1742.69 2841.58,1691.52" fill="url(#wgb125)"/><polygon points="465.14,1137.61 2841.58,1691.52 2932.64,1640.34" fill="url(#wgb126)"/><polygon points="465.14,1137.61 2932.64,1640.34 3023.71,1589.17" fill="url(#wgb127)"/><polygon points="465.14,1137.61 3023.71,1589.17 3114.78,1537.99" fill="url(#wgb128)"/><polygon points="465.14,1137.61 3114.78,1537.99 3205.84,1486.82" fill="url(#wgb129)"/><polygon points="465.14,1137.61 3205.84,1486.82 3296.91,1435.64" fill="url(#wgb130)"/><polygon points="465.14,1137.61 3296.91,1435.64 3387.98,1384.47" fill="url(#wgb131)"/><polygon points="465.14,1137.61 3387.98,1384.47 3479.05,1333.29" fill="url(#wgb132)"/><polygon points="465.14,1137.61 3479.05,1333.29 3570.11,1282.12" fill="url(#wgb133)"/><polygon points="465.14,1137.61 3570.11,1282.12 3661.18,1230.94" fill="url(#wgb134)"/><polygon points="465.14,1137.61 3661.18,1230.94 3752.25,1179.77" fill="url(#wgb135)"/><polygon points="465.14,1137.61 3752.25,1179.77 3843.31,1128.59" fill="url(#wgb136)"/><polygon points="465.14,1137.61 3843.31,1128.59 3934.38,1077.42" fill="url(#wgb137)"/><polygon points="465.14,1137.61 3934.38,1077.42 4025.45,1026.24" fill="url(#wgb138)"/><polygon points="465.14,1137.61 4025.45,1026.24 4116.51,975.07" fill="url(#wgb139)"/><polygon points="465.14,1137.61 4116.51,975.07 4207.58,923.89" fill="url(#wgb140)"/><polygon points="465.14,1137.61 4207.58,923.89 4298.65,872.72" fill="url(#wgb141)"/><polygon points="465.14,1137.61 4298.65,872.72 4389.72,821.54" fill="url(#wgb142)"/><polygon points="465.14,1137.61 4389.72,821.54 4480.78,770.37" fill="url(#wgb143)"/></g></svg><svg width="2560" height="1440"><defs><linearGradient id="gedge" x1="0" y1="0" x2="1" y2="0"><stop offset="0" stop-color="#323232"/><stop offset="0.6" stop-color="#222"/><stop offset="1" stop-color="#161616"/></linearGradient><linearGradient id="glogo" x1="0" y1="0" x2="0" y2="1"><stop offset="0" stop-color="#dd3a3a"/><stop offset="0.5" stop-color="#d42a2a"/><stop offset="0.55" stop-color="#c91313"/><stop offset="1" stop-color="#c81111"/></linearGradient><linearGradient id="grain" x1="0" y1="0" x2="1" y2="0"><stop offset="0" stop-color="#ff0000"/><stop offset="0.10" stop-color="#ff0080"/><stop offset="0.23" stop-color="#e020e0"/><stop offset="0.39" stop-color="#0030ff"/><stop offset="0.50" stop-color="#009080"/><stop offset="0.62" stop-color="#00ff00"/><stop offset="0.78" stop-color="#ffff00"/><stop offset="0.90" stop-color="#ff8000"/><stop offset="1" stop-color="#ff0000"/></linearGradient><linearGradient id="gbtn" x1="0" y1="0" x2="0" y2="1"><stop offset="0" stop-color="#a0a0a0"/><stop offset="1" stop-color="#5c5c5c"/></linearGradient><linearGradient id="gsel" x1="0" y1="0" x2="0" y2="1"><stop offset="0" stop-color="#6c6c6c"/><stop offset="1" stop-color="#646464"/></linearGradient><linearGradient id="gdd" x1="0" y1="0" x2="0" y2="1"><stop offset="0" stop-color="#747474"/><stop offset="1" stop-color="#4e4e4e"/></linearGradient><linearGradient id="gb7" x1="0" y1="0" x2="0" y2="1"><stop offset="0" stop-color="rgb(38,38,40)"/><stop offset="0.55" stop-color="rgb(30,30,30)"/><stop offset="1" stop-color="rgb(18,18,18)"/></linearGradient><linearGradient id="gb8" x1="0" y1="0" x2="0" y2="1"><stop offset="0" stop-color="rgb(38,38,40)"/><stop offset="0.55" stop-color="rgb(30,30,30)"/><stop offset="1" stop-color="rgb(18,18,18)"/></linearGradient><linearGradient id="gb9" x1="0" y1="0" x2="0" y2="1"><stop offset="0" stop-color="rgb(38,38,40)"/><stop offset="0.55" stop-color="rgb(30,30,30)"/><stop offset="1" stop-color="rgb(18,18,18)"/></linearGradient><linearGradient id="gb10" x1="0" y1="0" x2="0" y2="1"><stop offset="0" stop-color="rgb(38,38,40)"/><stop offset="0.55" stop-color="rgb(30,30,30)"/><stop offset="1" stop-color="rgb(18,18,18)"/></linearGradient><linearGradient id="gb11" x1="0" y1="0" x2="0" y2="1"><stop offset="0" stop-color="rgb(38,38,40)"/><stop offset="0.55" stop-color="rgb(30,30,30)"/><stop offset="1" stop-color="rgb(18,18,18)"/></linearGradient><linearGradient id="gb12" x1="0" y1="0" x2="0" y2="1"><stop offset="0" stop-color="rgb(38,38,40)"/><stop offset="0.55" stop-color="rgb(30,30,30)"/><stop offset="1" stop-color="rgb(18,18,18)"/></linearGradient><linearGradient id="gb13" x1="0" y1="0" x2="0" y2="1"><stop offset="0" stop-color="rgb(40,40,42)"/><stop offset="0.55" stop-color="rgb(32,32,32)"/><stop offset="1" stop-color="rgb(19,19,19)"/></linearGradient><linearGradient id="gb14" x1="0" y1="0" x2="0" y2="1"><stop offset="0" stop-color="rgb(46,46,48)"/><stop offset="0.55" stop-color="rgb(38,38,38)"/><stop offset="1" stop-color="rgb(23,23,23)"/></linearGradient><linearGradient id="gb15" x1="0" y1="0" x2="0" y2="1"><stop offset="0" stop-color="rgb(53,53,55)"/><stop offset="0.55" stop-color="rgb(45,45,45)"/><stop offset="1" stop-color="rgb(27,27,27)"/></linearGradient><linearGradient id="gb16" x1="0" y1="0" x2="0" y2="1"><stop offset="0" stop-color="rgb(59,59,61)"/><stop offset="0.55" stop-color="rgb(51,51,51)"/><stop offset="1" stop-color="rgb(31,31,31)"/></linearGradient><linearGradient id="gb17" x1="0" y1="0" x2="0" y2="1"><stop offset="0" stop-color="rgb(65,65,67)"/><stop offset="0.55" stop-color="rgb(57,57,57)"/><stop offset="1" stop-color="rgb(35,35,35)"/></linearGradient><linearGradient id="gb18" x1="0" y1="0" x2="0" y2="1"><stop offset="0" stop-color="rgb(72,72,74)"/><stop offset="0.55" stop-color="rgb(64,64,64)"/><stop offset="1" stop-color="rgb(39,39,39)"/></linearGradient><linearGradient id="gb19" x1="0" y1="0" x2="0" y2="1"><stop offset="0" stop-color="rgb(78,78,80)"/><stop offset="0.55" stop-color="rgb(70,70,70)"/><stop offset="1" stop-color="rgb(43,43,43)"/></linearGradient><linearGradient id="gb20" x1="0" y1="0" x2="0" y2="1"><stop offset="0" stop-color="rgb(84,84,86)"/><stop offset="0.55" stop-color="rgb(76,76,76)"/><stop offset="1" stop-color="rgb(47,47,47)"/></linearGradient><linearGradient id="gb21" x1="0" y1="0" x2="0" y2="1"><stop offset="0" stop-color="rgb(91,91,93)"/><stop offset="0.55" stop-color="rgb(83,83,83)"/><stop offset="1" stop-color="rgb(51,51,51)"/></linearGradient><linearGradient id="gb22" x1="0" y1="0" x2="0" y2="1"><stop offset="0" stop-color="rgb(97,97,99)"/><stop offset="0.55" stop-color="rgb(89,89,89)"/><stop offset="1" stop-color="rgb(55,55,55)"/></linearGradient><linearGradient id="gb23" x1="0" y1="0" x2="0" y2="1"><stop offset="0" stop-color="rgb(104,104,106)"/><stop offset="0.55" stop-color="rgb(96,96,96)"/><stop offset="1" stop-color="rgb(59,59,59)"/></linearGradient><linearGradient id="gb24" x1="0" y1="0" x2="0" y2="1"><stop offset="0" stop-color="rgb(110,110,112)"/><stop offset="0.55" stop-color="rgb(102,102,102)"/><stop offset="1" stop-color="rgb(63,63,63)"/></linearGradient><linearGradient id="gb25" x1="0" y1="0" x2="0" y2="1"><stop offset="0" stop-color="rgb(116,116,118)"/><stop offset="0.55" stop-color="rgb(108,108,108)"/><stop offset="1" stop-color="rgb(66,66,66)"/></linearGradient><linearGradient id="gb26" x1="0" y1="0" x2="0" y2="1"><stop offset="0" stop-color="rgb(123,123,125)"/><stop offset="0.55" stop-color="rgb(115,115,115)"/><stop offset="1" stop-color="rgb(71,71,71)"/></linearGradient><linearGradient id="gb27" x1="0" y1="0" x2="0" y2="1"><stop offset="0" stop-color="rgb(129,129,131)"/><stop offset="0.55" stop-color="rgb(121,121,121)"/><stop offset="1" stop-color="rgb(75,75,75)"/></linearGradient><linearGradient id="gb28" x1="0" y1="0" x2="0" y2="1"><stop offset="0" stop-color="rgb(136,136,138)"/><stop offset="0.55" stop-color="rgb(128,128,128)"/><stop offset="1" stop-color="rgb(79,79,79)"/></linearGradient><linearGradient id="gb29" x1="0" y1="0" x2="0" y2="1"><stop offset="0" stop-color="rgb(142,142,144)"/><stop offset="0.55" stop-color="rgb(134,134,134)"/><stop offset="1" stop-color="rgb(83,83,83)"/></linearGradient><linearGradient id="gb30" x1="0" y1="0" x2="0" y2="1"><stop offset="0" stop-color="rgb(148,148,150)"/><stop offset="0.55" stop-color="rgb(140,140,140)"/><stop offset="1" stop-color="rgb(86,86,86)"/></linearGradient><linearGradient id="gb31" x1="0" y1="0" x2="0" y2="1"><stop offset="0" stop-color="rgb(155,155,157)"/><stop offset="0.55" stop-color="rgb(147,147,147)"/><stop offset="1" stop-color="rgb(91,91,91)"/></linearGradient><linearGradient id="gb32" x1="0" y1="0" x2="0" y2="1"><stop offset="0" stop-color="rgb(161,161,163)"/><stop offset="0.55" stop-color="rgb(153,153,153)"/><stop offset="1" stop-color="rgb(94,94,94)"/></linearGradient><linearGradient id="gb33" x1="0" y1="0" x2="0" y2="1"><stop offset="0" stop-color="rgb(174,174,176)"/><stop offset="0.55" stop-color="rgb(166,166,166)"/><stop offset="1" stop-color="rgb(102,102,102)"/></linearGradient><linearGradient id="gb34" x1="0" y1="0" x2="0" y2="1"><stop offset="0" stop-color="rgb(186,186,188)"/><stop offset="0.55" stop-color="rgb(178,178,178)"/><stop offset="1" stop-color="rgb(110,110,110)"/></linearGradient><linearGradient id="gb35" x1="0" y1="0" x2="0" y2="1"><stop offset="0" stop-color="rgb(199,199,201)"/><stop offset="0.55" stop-color="rgb(191,191,191)"/><stop offset="1" stop-color="rgb(118,118,118)"/></linearGradient><linearGradient id="gb36" x1="0" y1="0" x2="0" y2="1"><stop offset="0" stop-color="rgb(212,212,214)"/><stop offset="0.55" stop-color="rgb(204,204,204)"/><stop offset="1" stop-color="rgb(126,126,126)"/></linearGradient><linearGradient id="gb37" x1="0" y1="0" x2="0" y2="1"><stop offset="0" stop-color="rgb(225,225,227)"/><stop offset="0.55" stop-color="rgb(217,217,217)"/><stop offset="1" stop-color="rgb(134,134,134)"/></linearGradient><linearGradient id="gb38" x1="0" y1="0" x2="0" y2="1"><stop offset="0" stop-color="rgb(238,238,240)"/><stop offset="0.55" stop-color="rgb(230,230,230)"/><stop offset="1" stop-color="rgb(142,142,142)"/></linearGradient><linearGradient id="gb39" x1="0" y1="0" x2="0" y2="1"><stop offset="0" stop-color="rgb(248,248,252)"/><stop offset="0.55" stop-color="rgb(242,242,242)"/><stop offset="1" stop-color="rgb(150,150,150)"/></linearGradient><linearGradient id="gb40" x1="0" y1="0" x2="0" y2="1"><stop offset="0" stop-color="rgb(248,248,252)"/><stop offset="0.55" stop-color="rgb(255,255,255)"/><stop offset="1" stop-color="rgb(158,158,158)"/></linearGradient><linearGradient id="gc0" x1="0" y1="0" x2="0" y2="1"><stop offset="0" stop-color="#f2f2f2"/><stop offset="0.6" stop-color="#f2f2f2"/><stop offset="1" stop-color="#9a9a9a"/></linearGradient><linearGradient id="gc1" x1="0" y1="0" x2="0" y2="1"><stop offset="0" stop-color="#d42020"/><stop offset="0.6" stop-color="#d42020"/><stop offset="1" stop-color="#901010"/></linearGradient><linearGradient id="gc2" x1="0" y1="0" x2="0" y2="1"><stop offset="0" stop-color="#22cc22"/><stop offset="0.6" stop-color="#22cc22"/><stop offset="1" stop-color="#108010"/></linearGradient><linearGradient id="gc3" x1="0" y1="0" x2="0" y2="1"><stop offset="0" stop-color="#2020d0"/><stop offset="0.6" stop-color="#2020d0"/><stop offset="1" stop-color="#101080"/></linearGradient><linearGradient id="gc4" x1="0" y1="0" x2="0" y2="1"><stop offset="0" stop-color="#20c0c0"/><stop offset="0.6" stop-color="#20c0c0"/><stop offset="1" stop-color="#108080"/></linearGradient><linearGradient id="gc5" x1="0" y1="0" x2="0" y2="1"><stop offset="0" stop-color="#c020c0"/><stop offset="0.6" stop-color="#c020c0"/><stop offset="1" stop-color="#801080"/></linearGradient><linearGradient id="gc6" x1="0" y1="0" x2="0" y2="1"><stop offset="0" stop-color="#c8c820"/><stop offset="0.6" stop-color="#c8c820"/><stop offset="1" stop-color="#808010"/></linearGradient><linearGradient id="gsw" x1="0" y1="0" x2="0" y2="1"><stop offset="0" stop-color="#a8a8a8"/><stop offset="0.5" stop-color="#8a8a8a"/><stop offset="1" stop-color="#5e5e5e"/></linearGradient><linearGradient id="gsw2" x1="0" y1="0" x2="0" y2="1"><stop offset="0" stop-color="#b0b0b0"/><stop offset="1" stop-color="#6a6a6a"/></linearGradient></defs><rect x="2554.0" y="89.0" width="6.0" height="1351.0" fill="url(#gedge)"/><rect x="0.0" y="0.0" width="2560.0" height="23.0" fill="#f2f1f6"/><polygon points="9.5,2.3 13.7,6.5 9.5,10.7 5.3,6.5" fill="#ffc000"/><polygon points="5.5,6.8 9.7,11.0 5.5,15.2 1.3,11.0" fill="#19c3ff"/><polygon points="13.5,6.8 17.7,11.0 13.5,15.2 9.3,11.0" fill="#22cc22"/><polygon points="9.5,11.3 13.7,15.5 9.5,19.7 5.3,15.5" fill="#ff1a66"/><text x="23.0" y="16.3" font-size="12.2" fill="#1c1c1c" textLength="547.0" lengthAdjust="spacingAndGlyphs" xml:space="preserve">Calman 2025 Calman Ultimate for Business 318 Days Remaining  - Calibration/SDR - Manual Calibration</text><line x1="2436.0" y1="11.5" x2="2447.0" y2="11.5" stroke="#333" stroke-width="1.0"/><rect x="2483.5" y="7.5" width="8" height="8" fill="none" stroke="#333" stroke-width="1.1" rx="1"/><path d="M2485.5 5.5h6a2 2 0 0 1 2 2v6" fill="none" stroke="#333" stroke-width="1.1"/><path d="M2530 6L2541 17M2541 6L2530 17" stroke="#333" stroke-width="1.2"/><path d="M1 23H183V48a4 4 0 0 1-4 4H5a4 4 0 0 1-4-4Z" fill="url(#glogo)"/><path d="M183 23V48a4 4 0 0 1-4 4H5a4 4 0 0 1-4-4V23" fill="none" stroke="#6a6a6a" stroke-width="1"/><g transform="translate(34.3 36.9) rotate(45)"><rect x="-7.6" y="-7.6" width="15.2" height="15.2" rx="2.2" fill="none" stroke="#f4f2f6" stroke-width="2.4"/><rect x="-4.9" y="-4.9" width="4.3" height="4.3" rx="0.6" fill="#f4f2f6"/><rect x="0.6" y="-4.9" width="4.3" height="4.3" rx="0.6" fill="#f4f2f6"/><rect x="-4.9" y="0.6" width="4.3" height="4.3" rx="0.6" fill="#f4f2f6"/><rect x="0.6" y="0.6" width="4.3" height="4.3" rx="0.6" fill="#f4f2f6"/></g><path d="M59.6 33.1A5.3 5.3 0 1 0 59.6 40.5M73.9 30.6V43.6M79.8 25V43.6M84.9 43.6V30.6M84.9 35.6A4.25 4.25 0 0 1 93.4 35.6V43.6M93.4 35.6A4.25 4.25 0 0 1 101.9 35.6V43.6M117.5 30.6V43.6M123.4 43.6V30.6M123.4 36.4A5.1 5.1 0 0 1 133.6 36.4V43.6" fill="none" stroke="#f4f2f6" stroke-width="2.9"/><circle cx="68.4" cy="36.9" r="5.3" fill="none" stroke="#f4f2f6" stroke-width="2.9"/><circle cx="112.1" cy="36.9" r="5.3" fill="none" stroke="#f4f2f6" stroke-width="2.9"/><circle cx="165.7" cy="37" r="8.8" fill="#c51414"/><polygon points="160.8,35.4 170.6,35.4 165.7,40.6" fill="#fff"/><rect x="190.0" y="35.0" width="2370.0" height="5.0" fill="url(#grain)"/><rect x="-3" y="57.5" width="29.5" height="29" rx="3" fill="url(#gbtn)" stroke="#b0b0b0" stroke-width="1"/><circle cx="12" cy="72" r="9.5" fill="#6a6a6a" opacity="0.6"/><polygon points="10,66.5 16,71.5 10,76.5" fill="#f0f0f0"/><path d="M29.5 88V61a4 4 0 0 1 4-4H116a4 4 0 0 1 4 4V88" fill="#3c3c3c" stroke="#5e5e5e" stroke-width="1"/><line x1="87.5" y1="58.0" x2="87.5" y2="88.0" stroke="#5e5e5e" stroke-width="1.0"/><text x="35.0" y="78.5" font-size="13.0" fill="#ddd8d0" textLength="46.0" lengthAdjust="spacingAndGlyphs">History 1</text><circle cx="102.5" cy="74" r="8" fill="#363636"/><line x1="99.5" y1="75.5" x2="105.5" y2="75.5" stroke="#6a6a6a" stroke-width="1.0"/><line x1="102.5" y1="72.5" x2="102.5" y2="78.5" stroke="#6a6a6a" stroke-width="1.0"/><path d="M1860.0 88V61a3 3 0 0 1 3-3H2170.0a3 3 0 0 1 3 3V88Z" fill="url(#gsel)" stroke="#5a5a5a" stroke-width="1"/><rect x="1860.5" y="59.0" width="6.0" height="29.0" fill="#00f000"/><text x="1868.0" y="69.5" font-size="11.0" fill="#f2f2f2" textLength="276.5" lengthAdjust="spacingAndGlyphs">i1 Display Pro/Calibrite ColorChecker Display Plus (Retail)</text><text x="1868.0" y="83.5" font-size="11.0" fill="#f2f2f2" textLength="64.7" lengthAdjust="spacingAndGlyphs">Sony Bravia 5</text><circle cx="2158.0" cy="72.5" r="9.5" fill="#5c5c5c"/><polygon points="2153.2,71 2162.8,71 2158.0,76.5" fill="#f4f4f4"/><path d="M2180.0 88V61a3 3 0 0 1 3-3H2343.0a3 3 0 0 1 3 3V88Z" fill="url(#gsel)" stroke="#5a5a5a" stroke-width="1"/><rect x="2180.5" y="59.0" width="6.0" height="29.0" fill="#00f000"/><text x="2188.0" y="69.5" font-size="11.0" fill="#f2f2f2" textLength="128.5" lengthAdjust="spacingAndGlyphs">SpectraCal VideoForge Pro</text><circle cx="2330.0" cy="72.5" r="9.5" fill="#5c5c5c"/><polygon points="2325.2,71 2334.8,71 2330.0,76.5" fill="#f4f4f4"/><path d="M2352.0 88V61a3 3 0 0 1 3-3H2492.0a3 3 0 0 1 3 3V88Z" fill="url(#gsel)" stroke="#5a5a5a" stroke-width="1"/><rect x="2352.5" y="59.0" width="6.0" height="29.0" fill="#f0f000"/><text x="2360.0" y="69.5" font-size="11.0" fill="#f2f2f2" textLength="105.0" lengthAdjust="spacingAndGlyphs">Direct Display Control</text><circle cx="2480.0" cy="72.5" r="9.5" fill="#5c5c5c"/><polygon points="2475.2,71 2484.8,71 2480.0,76.5" fill="#f4f4f4"/><rect x="2499.5" y="58.5" width="33" height="29" rx="3" fill="url(#gsel)" stroke="#8a8a8a" stroke-width="1"/><g transform="translate(2516 72)" fill="#9a9a9a"><rect x="-1.6" y="-8" width="3.2" height="4" transform="rotate(0)"/><rect x="-1.6" y="-8" width="3.2" height="4" transform="rotate(45)"/><rect x="-1.6" y="-8" width="3.2" height="4" transform="rotate(90)"/><rect x="-1.6" y="-8" width="3.2" height="4" transform="rotate(135)"/><rect x="-1.6" y="-8" width="3.2" height="4" transform="rotate(180)"/><rect x="-1.6" y="-8" width="3.2" height="4" transform="rotate(225)"/><rect x="-1.6" y="-8" width="3.2" height="4" transform="rotate(270)"/><rect x="-1.6" y="-8" width="3.2" height="4" transform="rotate(315)"/><circle r="5.5" fill="none" stroke="#9a9a9a" stroke-width="2.5"/></g><rect x="2533.5" y="58.5" width="30" height="29" rx="3" fill="url(#gsel)" stroke="#8a8a8a" stroke-width="1"/><circle cx="2546" cy="72" r="8" fill="#707070"/><polygon points="2548,67 2548,77 2542,72" fill="#f0f0f0"/><text x="15.5" y="182.5" font-size="59.0" fill="#ececec" textLength="666.0" lengthAdjust="spacingAndGlyphs">Post Calibration Capture</text><text x="737.0" y="180.0" font-size="24.0" fill="#f6f6f6" textLength="1051.0" lengthAdjust="spacingAndGlyphs">Press the Read Series button to capture Grayscale and Color performance data post-calibration.</text><rect x="1828.0" y="149.0" width="720.0" height="51.0" fill="#222"/><rect x="1830.0" y="151.0" width="716.0" height="47.0" fill="url(#gdd)"/><text x="1837.0" y="186.5" font-size="28.5" fill="#f4f4f4" textLength="230.0" lengthAdjust="spacingAndGlyphs">40 Point Greyscale</text><polygon points="2520.5,171 2537.5,171 2529,181" fill="#000"/><text x="439.5" y="250.5" font-size="22.0" fill="#dedede" text-anchor="middle" textLength="128.0" lengthAdjust="spacingAndGlyphs">CIE 1976 u'v'</text><line x1="47.0" y1="877.3" x2="56.0" y2="877.3" stroke="#e8e8e8" stroke-width="1.5"/><text x="45.5" y="885.3" font-size="22.0" fill="#e4e4e4" text-anchor="end">0</text><line x1="47.0" y1="774.2" x2="56.0" y2="774.2" stroke="#e8e8e8" stroke-width="1.5"/><text x="45.5" y="782.2" font-size="22.0" fill="#e4e4e4" text-anchor="end">0.1</text><line x1="47.0" y1="671.2" x2="56.0" y2="671.2" stroke="#e8e8e8" stroke-width="1.5"/><text x="45.5" y="679.2" font-size="22.0" fill="#e4e4e4" text-anchor="end">0.2</text><line x1="47.0" y1="568.1" x2="56.0" y2="568.1" stroke="#e8e8e8" stroke-width="1.5"/><text x="45.5" y="576.1" font-size="22.0" fill="#e4e4e4" text-anchor="end">0.3</text><line x1="47.0" y1="465.1" x2="56.0" y2="465.1" stroke="#e8e8e8" stroke-width="1.5"/><text x="45.5" y="473.1" font-size="22.0" fill="#e4e4e4" text-anchor="end">0.4</text><line x1="47.0" y1="362.0" x2="56.0" y2="362.0" stroke="#e8e8e8" stroke-width="1.5"/><text x="45.5" y="370.0" font-size="22.0" fill="#e4e4e4" text-anchor="end">0.5</text><line x1="57.0" y1="878.0" x2="57.0" y2="887.0" stroke="#e8e8e8" stroke-width="1.5"/><text x="57.0" y="911.0" font-size="22.0" fill="#e4e4e4" text-anchor="middle">0</text><line x1="123.9" y1="878.0" x2="123.9" y2="887.0" stroke="#e8e8e8" stroke-width="1.5"/><text x="123.9" y="911.0" font-size="22.0" fill="#e4e4e4" text-anchor="middle">0.05</text><line x1="190.8" y1="878.0" x2="190.8" y2="887.0" stroke="#e8e8e8" stroke-width="1.5"/><text x="190.8" y="911.0" font-size="22.0" fill="#e4e4e4" text-anchor="middle">0.1</text><line x1="257.6" y1="878.0" x2="257.6" y2="887.0" stroke="#e8e8e8" stroke-width="1.5"/><text x="257.6" y="911.0" font-size="22.0" fill="#e4e4e4" text-anchor="middle">0.15</text><line x1="324.5" y1="878.0" x2="324.5" y2="887.0" stroke="#e8e8e8" stroke-width="1.5"/><text x="324.5" y="911.0" font-size="22.0" fill="#e4e4e4" text-anchor="middle">0.2</text><line x1="391.4" y1="878.0" x2="391.4" y2="887.0" stroke="#e8e8e8" stroke-width="1.5"/><text x="391.4" y="911.0" font-size="22.0" fill="#e4e4e4" text-anchor="middle">0.25</text><line x1="458.3" y1="878.0" x2="458.3" y2="887.0" stroke="#e8e8e8" stroke-width="1.5"/><text x="458.3" y="911.0" font-size="22.0" fill="#e4e4e4" text-anchor="middle">0.3</text><line x1="525.1" y1="878.0" x2="525.1" y2="887.0" stroke="#e8e8e8" stroke-width="1.5"/><text x="525.1" y="911.0" font-size="22.0" fill="#e4e4e4" text-anchor="middle">0.35</text><line x1="592.0" y1="878.0" x2="592.0" y2="887.0" stroke="#e8e8e8" stroke-width="1.5"/><text x="592.0" y="911.0" font-size="22.0" fill="#e4e4e4" text-anchor="middle">0.4</text><line x1="658.9" y1="878.0" x2="658.9" y2="887.0" stroke="#e8e8e8" stroke-width="1.5"/><text x="658.9" y="911.0" font-size="22.0" fill="#e4e4e4" text-anchor="middle">0.45</text><line x1="725.8" y1="878.0" x2="725.8" y2="887.0" stroke="#e8e8e8" stroke-width="1.5"/><text x="725.8" y="911.0" font-size="22.0" fill="#e4e4e4" text-anchor="middle">0.5</text><line x1="792.6" y1="878.0" x2="792.6" y2="887.0" stroke="#e8e8e8" stroke-width="1.5"/><text x="792.6" y="911.0" font-size="22.0" fill="#e4e4e4" text-anchor="middle">0.55</text><text x="439.5" y="959.5" font-size="22.0" fill="#dedede" text-anchor="middle" textLength="128.0" lengthAdjust="spacingAndGlyphs">CIE 1976 u'v'</text><line x1="60.0" y1="991.7" x2="69.0" y2="991.7" stroke="#e8e8e8" stroke-width="1.5"/><text x="58.5" y="999.7" font-size="22.0" fill="#e4e4e4" text-anchor="end">0.49</text><line x1="60.0" y1="1059.0" x2="69.0" y2="1059.0" stroke="#e8e8e8" stroke-width="1.5"/><text x="58.5" y="1067.0" font-size="22.0" fill="#e4e4e4" text-anchor="end">0.48</text><line x1="60.0" y1="1126.3" x2="69.0" y2="1126.3" stroke="#e8e8e8" stroke-width="1.5"/><text x="58.5" y="1134.3" font-size="22.0" fill="#e4e4e4" text-anchor="end">0.47</text><line x1="60.0" y1="1193.6" x2="69.0" y2="1193.6" stroke="#e8e8e8" stroke-width="1.5"/><text x="58.5" y="1201.6" font-size="22.0" fill="#e4e4e4" text-anchor="end">0.46</text><line x1="60.0" y1="1260.9" x2="69.0" y2="1260.9" stroke="#e8e8e8" stroke-width="1.5"/><text x="58.5" y="1268.9" font-size="22.0" fill="#e4e4e4" text-anchor="end">0.45</text><line x1="102.6" y1="1305.0" x2="102.6" y2="1314.0" stroke="#e8e8e8" stroke-width="1.5"/><text x="102.6" y="1338.5" font-size="22.0" fill="#e4e4e4" text-anchor="middle">0.18</text><line x1="182.0" y1="1305.0" x2="182.0" y2="1314.0" stroke="#e8e8e8" stroke-width="1.5"/><text x="182.0" y="1338.5" font-size="22.0" fill="#e4e4e4" text-anchor="middle">0.18</text><line x1="261.4" y1="1305.0" x2="261.4" y2="1314.0" stroke="#e8e8e8" stroke-width="1.5"/><text x="261.4" y="1338.5" font-size="22.0" fill="#e4e4e4" text-anchor="middle">0.19</text><line x1="340.8" y1="1305.0" x2="340.8" y2="1314.0" stroke="#e8e8e8" stroke-width="1.5"/><text x="340.8" y="1338.5" font-size="22.0" fill="#e4e4e4" text-anchor="middle">0.19</text><line x1="420.2" y1="1305.0" x2="420.2" y2="1314.0" stroke="#e8e8e8" stroke-width="1.5"/><text x="420.2" y="1338.5" font-size="22.0" fill="#e4e4e4" text-anchor="middle">0.2</text><line x1="499.6" y1="1305.0" x2="499.6" y2="1314.0" stroke="#e8e8e8" stroke-width="1.5"/><text x="499.6" y="1338.5" font-size="22.0" fill="#e4e4e4" text-anchor="middle">0.2</text><line x1="579.0" y1="1305.0" x2="579.0" y2="1314.0" stroke="#e8e8e8" stroke-width="1.5"/><text x="579.0" y="1338.5" font-size="22.0" fill="#e4e4e4" text-anchor="middle">0.21</text><line x1="658.4" y1="1305.0" x2="658.4" y2="1314.0" stroke="#e8e8e8" stroke-width="1.5"/><text x="658.4" y="1338.5" font-size="22.0" fill="#e4e4e4" text-anchor="middle">0.21</text><line x1="737.8" y1="1305.0" x2="737.8" y2="1314.0" stroke="#e8e8e8" stroke-width="1.5"/><text x="737.8" y="1338.5" font-size="22.0" fill="#e4e4e4" text-anchor="middle">0.22</text><line x1="817.2" y1="1305.0" x2="817.2" y2="1314.0" stroke="#e8e8e8" stroke-width="1.5"/><text x="817.2" y="1338.5" font-size="22.0" fill="#e4e4e4" text-anchor="middle">0.22</text><line x1="935.0" y1="293.5" x2="1787.0" y2="293.5" stroke="#979797" stroke-width="2.0"/><line x1="935.0" y1="357.5" x2="1787.0" y2="357.5" stroke="#979797" stroke-width="2.0"/><line x1="935.0" y1="421.5" x2="1787.0" y2="421.5" stroke="#979797" stroke-width="2.0"/><line x1="935.0" y1="485.5" x2="1787.0" y2="485.5" stroke="#979797" stroke-width="2.0"/><line x1="935.0" y1="549.5" x2="1787.0" y2="549.5" stroke="#979797" stroke-width="2.0"/><text x="1337.6" y="252.0" font-size="21.4" fill="#dedede" text-anchor="middle" textLength="126.0" lengthAdjust="spacingAndGlyphs">RGB Balance</text><line x1="924.0" y1="293.5" x2="933.0" y2="293.5" stroke="#e8e8e8" stroke-width="1.5"/><text x="923.5" y="301.5" font-size="22.0" fill="#e4e4e4" text-anchor="end">104</text><line x1="924.0" y1="357.5" x2="933.0" y2="357.5" stroke="#e8e8e8" stroke-width="1.5"/><text x="923.5" y="365.5" font-size="22.0" fill="#e4e4e4" text-anchor="end">102</text><line x1="924.0" y1="421.5" x2="933.0" y2="421.5" stroke="#e8e8e8" stroke-width="1.5"/><text x="923.5" y="429.5" font-size="22.0" fill="#e4e4e4" text-anchor="end">100</text><line x1="924.0" y1="485.5" x2="933.0" y2="485.5" stroke="#e8e8e8" stroke-width="1.5"/><text x="923.5" y="493.5" font-size="22.0" fill="#e4e4e4" text-anchor="end">98</text><line x1="924.0" y1="549.5" x2="933.0" y2="549.5" stroke="#e8e8e8" stroke-width="1.5"/><text x="923.5" y="557.5" font-size="22.0" fill="#e4e4e4" text-anchor="end">96</text><line x1="934.0" y1="581.0" x2="934.0" y2="590.0" stroke="#e8e8e8" stroke-width="1.5"/><text x="934.0" y="613.5" font-size="22.0" fill="#e4e4e4" text-anchor="middle">0</text><line x1="1019.2" y1="581.0" x2="1019.2" y2="590.0" stroke="#e8e8e8" stroke-width="1.5"/><text x="1019.2" y="613.5" font-size="22.0" fill="#e4e4e4" text-anchor="middle">10</text><line x1="1104.5" y1="581.0" x2="1104.5" y2="590.0" stroke="#e8e8e8" stroke-width="1.5"/><text x="1104.5" y="613.5" font-size="22.0" fill="#e4e4e4" text-anchor="middle">20</text><line x1="1189.8" y1="581.0" x2="1189.8" y2="590.0" stroke="#e8e8e8" stroke-width="1.5"/><text x="1189.8" y="613.5" font-size="22.0" fill="#e4e4e4" text-anchor="middle">30</text><line x1="1275.0" y1="581.0" x2="1275.0" y2="590.0" stroke="#e8e8e8" stroke-width="1.5"/><text x="1275.0" y="613.5" font-size="22.0" fill="#e4e4e4" text-anchor="middle">40</text><line x1="1360.2" y1="581.0" x2="1360.2" y2="590.0" stroke="#e8e8e8" stroke-width="1.5"/><text x="1360.2" y="613.5" font-size="22.0" fill="#e4e4e4" text-anchor="middle">50</text><line x1="1445.5" y1="581.0" x2="1445.5" y2="590.0" stroke="#e8e8e8" stroke-width="1.5"/><text x="1445.5" y="613.5" font-size="22.0" fill="#e4e4e4" text-anchor="middle">60</text><line x1="1530.8" y1="581.0" x2="1530.8" y2="590.0" stroke="#e8e8e8" stroke-width="1.5"/><text x="1530.8" y="613.5" font-size="22.0" fill="#e4e4e4" text-anchor="middle">70</text><line x1="1616.0" y1="581.0" x2="1616.0" y2="590.0" stroke="#e8e8e8" stroke-width="1.5"/><text x="1616.0" y="613.5" font-size="22.0" fill="#e4e4e4" text-anchor="middle">80</text><line x1="1701.2" y1="581.0" x2="1701.2" y2="590.0" stroke="#e8e8e8" stroke-width="1.5"/><text x="1701.2" y="613.5" font-size="22.0" fill="#e4e4e4" text-anchor="middle">90</text><line x1="1786.5" y1="581.0" x2="1786.5" y2="590.0" stroke="#e8e8e8" stroke-width="1.5"/><text x="1786.5" y="613.5" font-size="22.0" fill="#e4e4e4" text-anchor="middle">100</text><polyline points="934.0,419.6 976.6,418.4 1019.2,417.6 1040.6,417.6 1061.9,415.9 1104.5,415.6 1189.8,415.2 1275.0,415.6 1360.2,415.6 1402.9,415.6 1445.5,416.2 1488.1,414.2 1530.8,412.9 1573.4,413.9 1616.0,412.2 1658.6,411.7 1701.2,410.9 1743.9,410.9 1786.5,410.5" fill="none" stroke="#008a00" stroke-width="3.8" stroke-linejoin="round"/><polyline points="934.0,418.4 954.5,419.3 976.6,419.6 1002.2,420.6 1019.2,420.9 1040.6,421.4 1061.9,424.3 1084.0,424.3 1104.5,428.0 1125.0,428.0 1147.1,426.8 1168.4,430.2 1189.8,429.0 1211.1,431.0 1232.4,428.5 1254.5,429.0 1275.0,429.3 1295.5,428.0 1317.6,428.5 1338.9,428.0 1360.2,431.0 1381.6,431.5 1402.9,431.9 1425.0,431.9 1445.5,429.7 1488.1,434.7 1530.8,439.4 1573.4,435.2 1616.0,438.6 1658.6,446.1 1701.2,449.2 1743.9,447.8 1786.5,448.7" fill="none" stroke="#ff0000" stroke-width="3.8" stroke-linejoin="round"/><polyline points="934.0,419.6 954.5,418.9 976.6,421.8 985.1,420.6 1002.2,421.4 1019.2,425.1 1040.6,429.0 1061.9,427.3 1084.0,427.3 1104.5,424.3 1125.0,426.8 1147.1,422.6 1168.4,421.8 1189.8,416.2 1211.1,417.9 1232.4,417.6 1254.5,418.9 1275.0,417.9 1295.5,416.2 1317.6,417.2 1338.9,418.9 1360.2,418.9 1402.9,419.6 1445.5,423.5 1488.1,421.8 1530.8,419.3 1573.4,415.9 1616.0,414.6 1658.6,413.4 1701.2,412.9 1743.9,417.6 1786.5,425.6" fill="none" stroke="#0000ff" stroke-width="3.8" stroke-linejoin="round"/><line x1="932.0" y1="754.1" x2="1787.0" y2="754.1" stroke="#979797" stroke-width="2.0"/><line x1="932.0" y1="818.8" x2="1787.0" y2="818.8" stroke="#979797" stroke-width="2.0"/><rect x="1079.8" y="881.2" width="16.0" height="2.2" fill="#000"/><rect x="1100.7" y="882.3" width="16.0" height="1.1" fill="#000"/><rect x="1121.5" y="881.2" width="16.0" height="2.2" fill="#000"/><rect x="1142.4" y="881.2" width="16.0" height="2.2" fill="#000"/><rect x="1163.3" y="878.7" width="16.0" height="4.7" fill="#000"/><rect x="1165.3" y="880.7" width="12.0" height="2.7" fill="url(#gb11)"/><rect x="1184.1" y="878.7" width="16.0" height="4.7" fill="#000"/><rect x="1186.1" y="880.7" width="12.0" height="2.7" fill="url(#gb12)"/><rect x="1205.0" y="874.7" width="16.0" height="8.7" fill="#000"/><rect x="1207.0" y="876.7" width="12.0" height="6.7" fill="url(#gb13)"/><rect x="1225.8" y="873.0" width="16.0" height="10.4" fill="#000"/><rect x="1227.8" y="875.0" width="12.0" height="8.4" fill="url(#gb14)"/><rect x="1246.7" y="870.8" width="16.0" height="12.6" fill="#000"/><rect x="1248.7" y="872.8" width="12.0" height="10.6" fill="url(#gb15)"/><rect x="1267.6" y="870.8" width="16.0" height="12.6" fill="#000"/><rect x="1269.6" y="872.8" width="12.0" height="10.6" fill="url(#gb16)"/><rect x="1288.4" y="866.3" width="16.0" height="17.1" fill="#000"/><rect x="1290.4" y="868.3" width="12.0" height="15.1" fill="url(#gb17)"/><rect x="1309.3" y="868.5" width="16.0" height="14.9" fill="#000"/><rect x="1311.3" y="870.5" width="12.0" height="12.9" fill="url(#gb18)"/><rect x="1330.1" y="868.5" width="16.0" height="14.9" fill="#000"/><rect x="1332.1" y="870.5" width="12.0" height="12.9" fill="url(#gb19)"/><rect x="1351.0" y="868.5" width="16.0" height="14.9" fill="#000"/><rect x="1353.0" y="870.5" width="12.0" height="12.9" fill="url(#gb20)"/><rect x="1371.9" y="866.3" width="16.0" height="17.1" fill="#000"/><rect x="1373.9" y="868.3" width="12.0" height="15.1" fill="url(#gb21)"/><rect x="1392.7" y="868.5" width="16.0" height="14.9" fill="#000"/><rect x="1394.7" y="870.5" width="12.0" height="12.9" fill="url(#gb22)"/><rect x="1413.6" y="868.5" width="16.0" height="14.9" fill="#000"/><rect x="1415.6" y="870.5" width="12.0" height="12.9" fill="url(#gb23)"/><rect x="1434.4" y="871.1" width="16.0" height="12.3" fill="#000"/><rect x="1436.4" y="873.1" width="12.0" height="10.3" fill="url(#gb24)"/><rect x="1455.3" y="873.2" width="16.0" height="10.2" fill="#000"/><rect x="1457.3" y="875.2" width="12.0" height="8.2" fill="url(#gb25)"/><rect x="1476.2" y="873.2" width="16.0" height="10.2" fill="#000"/><rect x="1478.2" y="875.2" width="12.0" height="8.2" fill="url(#gb26)"/><rect x="1497.0" y="873.2" width="16.0" height="10.2" fill="#000"/><rect x="1499.0" y="875.2" width="12.0" height="8.2" fill="url(#gb27)"/><rect x="1517.9" y="875.1" width="16.0" height="8.3" fill="#000"/><rect x="1519.9" y="877.1" width="12.0" height="6.3" fill="url(#gb28)"/><rect x="1538.7" y="875.1" width="16.0" height="8.3" fill="#000"/><rect x="1540.7" y="877.1" width="12.0" height="6.3" fill="url(#gb29)"/><rect x="1559.6" y="873.2" width="16.0" height="10.2" fill="#000"/><rect x="1561.6" y="875.2" width="12.0" height="8.2" fill="url(#gb30)"/><rect x="1580.5" y="873.2" width="16.0" height="10.2" fill="#000"/><rect x="1582.5" y="875.2" width="12.0" height="8.2" fill="url(#gb31)"/><rect x="1601.3" y="873.2" width="16.0" height="10.2" fill="#000"/><rect x="1603.3" y="875.2" width="12.0" height="8.2" fill="url(#gb32)"/><rect x="1622.2" y="866.4" width="16.0" height="17.0" fill="#000"/><rect x="1624.2" y="868.4" width="12.0" height="15.0" fill="url(#gb33)"/><rect x="1643.0" y="864.6" width="16.0" height="18.8" fill="#000"/><rect x="1645.0" y="866.6" width="12.0" height="16.8" fill="url(#gb34)"/><rect x="1663.9" y="866.4" width="16.0" height="17.0" fill="#000"/><rect x="1665.9" y="868.4" width="12.0" height="15.0" fill="url(#gb35)"/><rect x="1684.8" y="864.6" width="16.0" height="18.8" fill="#000"/><rect x="1686.8" y="866.6" width="12.0" height="16.8" fill="url(#gb36)"/><rect x="1705.6" y="860.5" width="16.0" height="22.9" fill="#000"/><rect x="1707.6" y="862.5" width="12.0" height="20.9" fill="url(#gb37)"/><rect x="1726.5" y="860.5" width="16.0" height="22.9" fill="#000"/><rect x="1728.5" y="862.5" width="12.0" height="20.9" fill="url(#gb38)"/><rect x="1747.3" y="862.4" width="16.0" height="21.0" fill="#000"/><rect x="1749.3" y="864.4" width="12.0" height="19.0" fill="url(#gb39)"/><rect x="1768.2" y="858.5" width="16.0" height="24.9" fill="#000"/><rect x="1770.2" y="860.5" width="12.0" height="22.9" fill="url(#gb40)"/><text x="1343.0" y="679.7" font-size="21.4" fill="#dedede" text-anchor="middle" textLength="121.0" lengthAdjust="spacingAndGlyphs">DeltaE 2000</text><text x="931.0" y="684.0" font-size="24.0" fill="#f0f0f0" textLength="81.0" lengthAdjust="spacingAndGlyphs">Avg: 0.9</text><text x="1785.0" y="684.0" font-size="24.0" fill="#f0f0f0" text-anchor="end" textLength="68.6" lengthAdjust="spacingAndGlyphs">Max: 2</text><line x1="922.0" y1="689.5" x2="931.0" y2="689.5" stroke="#e8e8e8" stroke-width="1.5"/><text x="922.0" y="697.5" font-size="22.0" fill="#e4e4e4" text-anchor="end">15</text><line x1="922.0" y1="754.1" x2="931.0" y2="754.1" stroke="#e8e8e8" stroke-width="1.5"/><text x="922.0" y="762.1" font-size="22.0" fill="#e4e4e4" text-anchor="end">10</text><line x1="922.0" y1="818.8" x2="931.0" y2="818.8" stroke="#e8e8e8" stroke-width="1.5"/><text x="922.0" y="826.8" font-size="22.0" fill="#e4e4e4" text-anchor="end">5</text><line x1="922.0" y1="883.4" x2="931.0" y2="883.4" stroke="#e8e8e8" stroke-width="1.5"/><text x="922.0" y="891.4" font-size="22.0" fill="#e4e4e4" text-anchor="end">0</text><line x1="932.0" y1="884.0" x2="932.0" y2="893.0" stroke="#e8e8e8" stroke-width="1.5"/><line x1="952.9" y1="884.0" x2="952.9" y2="893.0" stroke="#e8e8e8" stroke-width="1.5"/><line x1="973.7" y1="884.0" x2="973.7" y2="893.0" stroke="#e8e8e8" stroke-width="1.5"/><line x1="994.6" y1="884.0" x2="994.6" y2="893.0" stroke="#e8e8e8" stroke-width="1.5"/><line x1="1015.4" y1="884.0" x2="1015.4" y2="893.0" stroke="#e8e8e8" stroke-width="1.5"/><line x1="1036.3" y1="884.0" x2="1036.3" y2="893.0" stroke="#e8e8e8" stroke-width="1.5"/><line x1="1057.2" y1="884.0" x2="1057.2" y2="893.0" stroke="#e8e8e8" stroke-width="1.5"/><line x1="1078.0" y1="884.0" x2="1078.0" y2="893.0" stroke="#e8e8e8" stroke-width="1.5"/><line x1="1098.9" y1="884.0" x2="1098.9" y2="893.0" stroke="#e8e8e8" stroke-width="1.5"/><line x1="1119.7" y1="884.0" x2="1119.7" y2="893.0" stroke="#e8e8e8" stroke-width="1.5"/><line x1="1140.6" y1="884.0" x2="1140.6" y2="893.0" stroke="#e8e8e8" stroke-width="1.5"/><line x1="1161.5" y1="884.0" x2="1161.5" y2="893.0" stroke="#e8e8e8" stroke-width="1.5"/><line x1="1182.3" y1="884.0" x2="1182.3" y2="893.0" stroke="#e8e8e8" stroke-width="1.5"/><line x1="1203.2" y1="884.0" x2="1203.2" y2="893.0" stroke="#e8e8e8" stroke-width="1.5"/><line x1="1224.0" y1="884.0" x2="1224.0" y2="893.0" stroke="#e8e8e8" stroke-width="1.5"/><line x1="1244.9" y1="884.0" x2="1244.9" y2="893.0" stroke="#e8e8e8" stroke-width="1.5"/><line x1="1265.8" y1="884.0" x2="1265.8" y2="893.0" stroke="#e8e8e8" stroke-width="1.5"/><line x1="1286.6" y1="884.0" x2="1286.6" y2="893.0" stroke="#e8e8e8" stroke-width="1.5"/><line x1="1307.5" y1="884.0" x2="1307.5" y2="893.0" stroke="#e8e8e8" stroke-width="1.5"/><line x1="1328.3" y1="884.0" x2="1328.3" y2="893.0" stroke="#e8e8e8" stroke-width="1.5"/><line x1="1349.2" y1="884.0" x2="1349.2" y2="893.0" stroke="#e8e8e8" stroke-width="1.5"/><line x1="1370.1" y1="884.0" x2="1370.1" y2="893.0" stroke="#e8e8e8" stroke-width="1.5"/><line x1="1390.9" y1="884.0" x2="1390.9" y2="893.0" stroke="#e8e8e8" stroke-width="1.5"/><line x1="1411.8" y1="884.0" x2="1411.8" y2="893.0" stroke="#e8e8e8" stroke-width="1.5"/><line x1="1432.6" y1="884.0" x2="1432.6" y2="893.0" stroke="#e8e8e8" stroke-width="1.5"/><line x1="1453.5" y1="884.0" x2="1453.5" y2="893.0" stroke="#e8e8e8" stroke-width="1.5"/><line x1="1474.4" y1="884.0" x2="1474.4" y2="893.0" stroke="#e8e8e8" stroke-width="1.5"/><line x1="1495.2" y1="884.0" x2="1495.2" y2="893.0" stroke="#e8e8e8" stroke-width="1.5"/><line x1="1516.1" y1="884.0" x2="1516.1" y2="893.0" stroke="#e8e8e8" stroke-width="1.5"/><line x1="1536.9" y1="884.0" x2="1536.9" y2="893.0" stroke="#e8e8e8" stroke-width="1.5"/><line x1="1557.8" y1="884.0" x2="1557.8" y2="893.0" stroke="#e8e8e8" stroke-width="1.5"/><line x1="1578.7" y1="884.0" x2="1578.7" y2="893.0" stroke="#e8e8e8" stroke-width="1.5"/><line x1="1599.5" y1="884.0" x2="1599.5" y2="893.0" stroke="#e8e8e8" stroke-width="1.5"/><line x1="1620.4" y1="884.0" x2="1620.4" y2="893.0" stroke="#e8e8e8" stroke-width="1.5"/><line x1="1641.2" y1="884.0" x2="1641.2" y2="893.0" stroke="#e8e8e8" stroke-width="1.5"/><line x1="1662.1" y1="884.0" x2="1662.1" y2="893.0" stroke="#e8e8e8" stroke-width="1.5"/><line x1="1683.0" y1="884.0" x2="1683.0" y2="893.0" stroke="#e8e8e8" stroke-width="1.5"/><line x1="1703.8" y1="884.0" x2="1703.8" y2="893.0" stroke="#e8e8e8" stroke-width="1.5"/><line x1="1724.7" y1="884.0" x2="1724.7" y2="893.0" stroke="#e8e8e8" stroke-width="1.5"/><line x1="1745.5" y1="884.0" x2="1745.5" y2="893.0" stroke="#e8e8e8" stroke-width="1.5"/><line x1="1766.4" y1="884.0" x2="1766.4" y2="893.0" stroke="#e8e8e8" stroke-width="1.5"/><line x1="1787.3" y1="884.0" x2="1787.3" y2="893.0" stroke="#e8e8e8" stroke-width="1.5"/><text x="942.4" y="916.5" font-size="22.0" fill="#e4e4e4" text-anchor="middle">0</text><text x="963.3" y="947.5" font-size="22.0" fill="#e4e4e4" text-anchor="middle">1</text><text x="984.1" y="916.5" font-size="22.0" fill="#e4e4e4" text-anchor="middle">1.6</text><text x="1005.0" y="947.5" font-size="22.0" fill="#e4e4e4" text-anchor="middle">2</text><text x="1025.9" y="916.5" font-size="22.0" fill="#e4e4e4" text-anchor="middle">2.4</text><text x="1046.7" y="947.5" font-size="22.0" fill="#e4e4e4" text-anchor="middle">3</text><text x="1067.6" y="916.5" font-size="22.0" fill="#e4e4e4" text-anchor="middle">4</text><text x="1088.5" y="947.5" font-size="22.0" fill="#e4e4e4" text-anchor="middle">5</text><text x="1109.3" y="916.5" font-size="22.0" fill="#e4e4e4" text-anchor="middle">6</text><text x="1130.2" y="947.5" font-size="22.0" fill="#e4e4e4" text-anchor="middle">7.5</text><text x="1151.0" y="916.5" font-size="22.0" fill="#e4e4e4" text-anchor="middle">8</text><text x="1171.9" y="947.5" font-size="22.0" fill="#e4e4e4" text-anchor="middle">9</text><text x="1192.8" y="916.5" font-size="22.0" fill="#e4e4e4" text-anchor="middle">10</text><text x="1213.6" y="947.5" font-size="22.0" fill="#e4e4e4" text-anchor="middle">12.5</text><text x="1234.5" y="916.5" font-size="22.0" fill="#e4e4e4" text-anchor="middle">15</text><text x="1255.3" y="947.5" font-size="22.0" fill="#e4e4e4" text-anchor="middle">17.6</text><text x="1276.2" y="916.5" font-size="22.0" fill="#e4e4e4" text-anchor="middle">20</text><text x="1297.0" y="947.5" font-size="22.0" fill="#e4e4e4" text-anchor="middle">22.4</text><text x="1317.9" y="916.5" font-size="22.0" fill="#e4e4e4" text-anchor="middle">25</text><text x="1338.8" y="947.5" font-size="22.0" fill="#e4e4e4" text-anchor="middle">27.5</text><text x="1359.6" y="916.5" font-size="22.0" fill="#e4e4e4" text-anchor="middle">30</text><text x="1380.5" y="947.5" font-size="22.0" fill="#e4e4e4" text-anchor="middle">32.5</text><text x="1401.3" y="916.5" font-size="22.0" fill="#e4e4e4" text-anchor="middle">35</text><text x="1422.2" y="947.5" font-size="22.0" fill="#e4e4e4" text-anchor="middle">37.6</text><text x="1443.1" y="916.5" font-size="22.0" fill="#e4e4e4" text-anchor="middle">40</text><text x="1463.9" y="947.5" font-size="22.0" fill="#e4e4e4" text-anchor="middle">42.4</text><text x="1484.8" y="916.5" font-size="22.0" fill="#e4e4e4" text-anchor="middle">45</text><text x="1505.7" y="947.5" font-size="22.0" fill="#e4e4e4" text-anchor="middle">47.5</text><text x="1526.5" y="916.5" font-size="22.0" fill="#e4e4e4" text-anchor="middle">50</text><text x="1547.4" y="947.5" font-size="22.0" fill="#e4e4e4" text-anchor="middle">52.5</text><text x="1568.2" y="916.5" font-size="22.0" fill="#e4e4e4" text-anchor="middle">55</text><text x="1589.1" y="947.5" font-size="22.0" fill="#e4e4e4" text-anchor="middle">57.6</text><text x="1609.9" y="916.5" font-size="22.0" fill="#e4e4e4" text-anchor="middle">60</text><text x="1630.8" y="947.5" font-size="22.0" fill="#e4e4e4" text-anchor="middle">65</text><text x="1651.7" y="916.5" font-size="22.0" fill="#e4e4e4" text-anchor="middle">70</text><text x="1672.5" y="947.5" font-size="22.0" fill="#e4e4e4" text-anchor="middle">75</text><text x="1693.4" y="916.5" font-size="22.0" fill="#e4e4e4" text-anchor="middle">80</text><text x="1714.2" y="947.5" font-size="22.0" fill="#e4e4e4" text-anchor="middle">85</text><text x="1735.1" y="916.5" font-size="22.0" fill="#e4e4e4" text-anchor="middle">90</text><text x="1756.0" y="947.5" font-size="22.0" fill="#e4e4e4" text-anchor="middle">95</text><text x="1776.8" y="916.5" font-size="22.0" fill="#e4e4e4" text-anchor="middle">100</text><text x="1115.0" y="1005.5" font-size="30.5" fill="#f2f2f2" textLength="211.0" lengthAdjust="spacingAndGlyphs">DeltaE Formula</text><rect x="1338.0" y="974.0" width="207.0" height="41.0" fill="#222"/><rect x="1339.0" y="975.0" width="205.0" height="39.0" fill="url(#gdd)"/><text x="1346.0" y="1006.5" font-size="26.0" fill="#f4f4f4" textLength="53.0" lengthAdjust="spacingAndGlyphs">2000</text><polygon points="1520,992 1536,992 1528,1001" fill="#000"/><line x1="932.0" y1="1153.0" x2="1787.0" y2="1153.0" stroke="#979797" stroke-width="2.0"/><line x1="932.0" y1="1231.0" x2="1787.0" y2="1231.0" stroke="#979797" stroke-width="2.0"/><rect x="1445.0" y="1278.0" width="32.0" height="31.0" fill="#000"/><rect x="1447.0" y="1280.0" width="28.0" height="29.0" fill="url(#gc0)"/><rect x="1531.0" y="1263.5" width="31.0" height="45.5" fill="#000"/><rect x="1533.0" y="1265.5" width="27.0" height="43.5" fill="url(#gc1)"/><rect x="1565.0" y="1268.7" width="29.0" height="40.3" fill="#000"/><rect x="1567.0" y="1270.7" width="25.0" height="38.3" fill="url(#gc2)"/><rect x="1598.0" y="1291.0" width="30.0" height="18.0" fill="#000"/><rect x="1600.0" y="1293.0" width="26.0" height="16.0" fill="url(#gc3)"/><rect x="1632.0" y="1283.6" width="28.0" height="25.4" fill="#000"/><rect x="1634.0" y="1285.6" width="24.0" height="23.4" fill="url(#gc4)"/><rect x="1665.0" y="1253.9" width="29.0" height="55.1" fill="#000"/><rect x="1667.0" y="1255.9" width="25.0" height="53.1" fill="url(#gc5)"/><rect x="1699.0" y="1278.0" width="30.0" height="31.0" fill="#000"/><rect x="1701.0" y="1280.0" width="26.0" height="29.0" fill="url(#gc6)"/><text x="1343.0" y="1065.8" font-size="21.4" fill="#dedede" text-anchor="middle" textLength="121.0" lengthAdjust="spacingAndGlyphs">DeltaE 2000</text><text x="931.0" y="1070.0" font-size="24.0" fill="#f0f0f0" textLength="81.0" lengthAdjust="spacingAndGlyphs">Avg: 2.4</text><text x="1785.0" y="1070.0" font-size="24.0" fill="#f0f0f0" text-anchor="end" textLength="88.0" lengthAdjust="spacingAndGlyphs">Max: 3.7</text><line x1="922.0" y1="1075.0" x2="931.0" y2="1075.0" stroke="#e8e8e8" stroke-width="1.5"/><text x="922.0" y="1083.0" font-size="22.0" fill="#e4e4e4" text-anchor="end">15</text><line x1="922.0" y1="1153.0" x2="931.0" y2="1153.0" stroke="#e8e8e8" stroke-width="1.5"/><text x="922.0" y="1161.0" font-size="22.0" fill="#e4e4e4" text-anchor="end">10</text><line x1="922.0" y1="1231.0" x2="931.0" y2="1231.0" stroke="#e8e8e8" stroke-width="1.5"/><text x="922.0" y="1239.0" font-size="22.0" fill="#e4e4e4" text-anchor="end">5</text><line x1="922.0" y1="1309.0" x2="931.0" y2="1309.0" stroke="#e8e8e8" stroke-width="1.5"/><text x="922.0" y="1317.0" font-size="22.0" fill="#e4e4e4" text-anchor="end">0</text><line x1="931.5" y1="1310.0" x2="931.5" y2="1320.0" stroke="#e8e8e8" stroke-width="1.5"/><line x1="1217.0" y1="1310.0" x2="1217.0" y2="1320.0" stroke="#e8e8e8" stroke-width="1.5"/><line x1="1501.0" y1="1310.0" x2="1501.0" y2="1320.0" stroke="#e8e8e8" stroke-width="1.5"/><line x1="1787.0" y1="1310.0" x2="1787.0" y2="1320.0" stroke="#e8e8e8" stroke-width="1.5"/><text x="1075.0" y="1333.0" font-size="22.0" fill="#e4e4e4" text-anchor="middle">0</text><text x="1359.0" y="1333.0" font-size="22.0" fill="#e4e4e4" text-anchor="middle">100</text><text x="1645.0" y="1333.0" font-size="22.0" fill="#e4e4e4" text-anchor="middle">100%</text><line x1="1878.0" y1="769.8" x2="2518.0" y2="769.8" stroke="#979797" stroke-width="2.0"/><line x1="1878.0" y1="697.0" x2="2518.0" y2="697.0" stroke="#979797" stroke-width="2.0"/><line x1="1878.0" y1="624.2" x2="2518.0" y2="624.2" stroke="#979797" stroke-width="2.0"/><line x1="1878.0" y1="551.4" x2="2518.0" y2="551.4" stroke="#979797" stroke-width="2.0"/><line x1="1878.0" y1="478.6" x2="2518.0" y2="478.6" stroke="#979797" stroke-width="2.0"/><line x1="1878.0" y1="405.8" x2="2518.0" y2="405.8" stroke="#979797" stroke-width="2.0"/><line x1="1878.0" y1="333.0" x2="2518.0" y2="333.0" stroke="#979797" stroke-width="2.0"/><text x="2177.5" y="252.0" font-size="21.4" fill="#dedede" text-anchor="middle">EOTF</text><line x1="1867.0" y1="842.6" x2="1876.0" y2="842.6" stroke="#e8e8e8" stroke-width="1.5"/><text x="1867.0" y="850.6" font-size="22.0" fill="#e4e4e4" text-anchor="end">0</text><line x1="1867.0" y1="769.8" x2="1876.0" y2="769.8" stroke="#e8e8e8" stroke-width="1.5"/><text x="1867.0" y="777.8" font-size="22.0" fill="#e4e4e4" text-anchor="end">0.1</text><line x1="1867.0" y1="697.0" x2="1876.0" y2="697.0" stroke="#e8e8e8" stroke-width="1.5"/><text x="1867.0" y="705.0" font-size="22.0" fill="#e4e4e4" text-anchor="end">0.2</text><line x1="1867.0" y1="624.2" x2="1876.0" y2="624.2" stroke="#e8e8e8" stroke-width="1.5"/><text x="1867.0" y="632.2" font-size="22.0" fill="#e4e4e4" text-anchor="end">0.3</text><line x1="1867.0" y1="551.4" x2="1876.0" y2="551.4" stroke="#e8e8e8" stroke-width="1.5"/><text x="1867.0" y="559.4" font-size="22.0" fill="#e4e4e4" text-anchor="end">0.4</text><line x1="1867.0" y1="478.6" x2="1876.0" y2="478.6" stroke="#e8e8e8" stroke-width="1.5"/><text x="1867.0" y="486.6" font-size="22.0" fill="#e4e4e4" text-anchor="end">0.5</text><line x1="1867.0" y1="405.8" x2="1876.0" y2="405.8" stroke="#e8e8e8" stroke-width="1.5"/><text x="1867.0" y="413.8" font-size="22.0" fill="#e4e4e4" text-anchor="end">0.6</text><line x1="1867.0" y1="333.0" x2="1876.0" y2="333.0" stroke="#e8e8e8" stroke-width="1.5"/><text x="1867.0" y="341.0" font-size="22.0" fill="#e4e4e4" text-anchor="end">0.7</text><line x1="1867.0" y1="260.2" x2="1876.0" y2="260.2" stroke="#e8e8e8" stroke-width="1.5"/><text x="1867.0" y="268.2" font-size="22.0" fill="#e4e4e4" text-anchor="end">0.8</text><line x1="1877.8" y1="844.0" x2="1877.8" y2="853.0" stroke="#e8e8e8" stroke-width="1.5"/><text x="1877.8" y="874.5" font-size="22.0" fill="#e4e4e4" text-anchor="middle">0</text><line x1="2005.8" y1="844.0" x2="2005.8" y2="853.0" stroke="#e8e8e8" stroke-width="1.5"/><text x="2005.8" y="874.5" font-size="22.0" fill="#e4e4e4" text-anchor="middle">20</text><line x1="2133.8" y1="844.0" x2="2133.8" y2="853.0" stroke="#e8e8e8" stroke-width="1.5"/><text x="2133.8" y="874.5" font-size="22.0" fill="#e4e4e4" text-anchor="middle">40</text><line x1="2261.8" y1="844.0" x2="2261.8" y2="853.0" stroke="#e8e8e8" stroke-width="1.5"/><text x="2261.8" y="874.5" font-size="22.0" fill="#e4e4e4" text-anchor="middle">60</text><line x1="2389.8" y1="844.0" x2="2389.8" y2="853.0" stroke="#e8e8e8" stroke-width="1.5"/><text x="2389.8" y="874.5" font-size="22.0" fill="#e4e4e4" text-anchor="middle">80</text><line x1="2517.8" y1="844.0" x2="2517.8" y2="853.0" stroke="#e8e8e8" stroke-width="1.5"/><text x="2517.8" y="874.5" font-size="22.0" fill="#e4e4e4" text-anchor="middle">100</text><polyline points="1877.8,839.7 1884.2,826.8 1890.6,813.8 1897.0,800.9 1903.4,785.5 1909.8,769.6 1916.2,754.8 1922.6,741.2 1929.0,728.5 1935.4,717.2 1941.8,706.6 1948.2,696.8 1954.6,687.5 1961.0,678.8 1973.7,663.0 1986.3,648.7 1999.0,635.6 2011.6,623.6 2024.3,612.3 2036.9,601.8 2049.6,591.8 2062.2,582.3 2074.9,573.2 2087.5,564.5 2100.2,556.0 2112.9,547.8 2125.5,539.8 2138.2,531.9 2150.8,524.2 2163.5,516.7 2176.1,509.3 2188.8,502.0 2201.4,494.8 2214.1,487.9 2226.7,481.1 2239.4,474.4 2252.1,467.8 2264.7,461.4 2277.4,455.2 2290.0,449.2 2302.7,443.2 2315.3,437.5 2328.0,431.9 2340.6,426.4 2353.3,421.1 2365.9,416.0 2378.6,411.0 2391.3,406.2 2403.9,401.6 2416.6,397.2 2429.2,392.9 2441.9,388.7 2454.5,384.7 2467.2,380.8 2479.8,377.0 2492.5,373.2 2505.1,369.6 2517.8,366.0" fill="none" stroke="#ffff00" stroke-width="4" stroke-linejoin="round"/><polyline points="1877.8,842.6 1882.9,842.6 1885.8,821.5 1890.6,821.5 1903.4,785.5 1904.7,782.3 1910.2,768.6 1915.8,755.8 1921.3,743.8 1926.9,732.6 1932.4,722.1 1938.0,712.3 1943.5,702.9 1949.1,694.1 1954.6,685.8 1961.0,676.7 1973.7,660.0 1986.3,645.0 1999.0,631.2 2011.6,618.5 2024.3,606.6 2036.9,595.6 2049.6,585.2 2062.2,575.4 2074.9,566.1 2087.5,557.2 2100.2,548.7 2112.9,540.6 2125.5,532.8 2138.2,525.2 2150.8,517.9 2163.5,510.9 2176.1,504.0 2188.8,497.3 2201.4,490.9 2214.1,484.7 2226.7,478.7 2239.4,472.9 2252.1,467.1 2264.7,461.5 2277.4,456.0 2290.0,450.6 2302.7,445.4 2315.3,440.2 2328.0,435.0 2340.6,430.0 2353.3,425.1 2365.9,420.2 2378.6,415.4 2391.3,410.6 2403.9,405.9 2416.6,401.3 2429.2,396.7 2441.9,392.2 2454.5,387.7 2467.2,383.3 2479.8,378.9 2492.5,374.6 2505.1,370.3 2517.8,366.0" fill="none" stroke="#8c8c8c" stroke-width="4" stroke-linejoin="round" opacity="0.95"/><polyline points="1877.8,839.7 1884.2,826.8 1890.6,813.8 1897.0,800.9 1903.4,785.5 1909.8,769.6 1916.2,754.8 1922.6,741.2 1929.0,728.5 1935.4,717.2 1941.8,706.6 1948.2,696.8 1954.6,687.5 1961.0,678.8 1973.7,663.0 1986.3,648.7 1999.0,635.6 2011.6,623.6 2024.3,612.3 2036.9,601.8 2049.6,591.8 2062.2,582.3 2074.9,573.2 2087.5,564.5 2100.2,556.0 2112.9,547.8 2125.5,539.8 2138.2,531.9 2150.8,524.2 2163.5,516.7 2176.1,509.3 2188.8,502.0 2201.4,494.8 2214.1,487.9 2226.7,481.1 2239.4,474.4 2252.1,467.8 2264.7,461.4 2277.4,455.2 2290.0,449.2 2302.7,443.2 2315.3,437.5 2328.0,431.9 2340.6,426.4 2353.3,421.1 2365.9,416.0 2378.6,411.0 2391.3,406.2 2403.9,401.6 2416.6,397.2 2429.2,392.9 2441.9,388.7 2454.5,384.7 2467.2,380.8 2479.8,377.0 2492.5,373.2 2505.1,369.6 2517.8,366.0" fill="none" stroke="#ffff00" stroke-width="2.5" stroke-linejoin="round" stroke-dasharray="0" opacity="0.0"/><line x1="1885.0" y1="1232.2" x2="2518.0" y2="1232.2" stroke="#979797" stroke-width="2.0"/><line x1="1885.0" y1="1161.9" x2="2518.0" y2="1161.9" stroke="#979797" stroke-width="2.0"/><line x1="1885.0" y1="1091.7" x2="2518.0" y2="1091.7" stroke="#979797" stroke-width="2.0"/><line x1="1885.0" y1="1021.4" x2="2518.0" y2="1021.4" stroke="#979797" stroke-width="2.0"/><text x="2178.0" y="940.9" font-size="21.4" fill="#dedede" text-anchor="middle">Luminance</text><text x="1880.5" y="945.7" font-size="24.0" fill="#f0f0f0" textLength="85.0" lengthAdjust="spacingAndGlyphs">Y Min: 0</text><text x="2515.6" y="945.7" font-size="24.0" fill="#f0f0f0" text-anchor="end" textLength="172.5" lengthAdjust="spacingAndGlyphs">Y Max: 403.8633</text><line x1="1873.0" y1="1302.4" x2="1882.0" y2="1302.4" stroke="#e8e8e8" stroke-width="1.5"/><text x="1873.5" y="1310.4" font-size="22.0" fill="#e4e4e4" text-anchor="end">0</text><line x1="1873.0" y1="1232.2" x2="1882.0" y2="1232.2" stroke="#e8e8e8" stroke-width="1.5"/><text x="1873.5" y="1240.2" font-size="22.0" fill="#e4e4e4" text-anchor="end">100</text><line x1="1873.0" y1="1161.9" x2="1882.0" y2="1161.9" stroke="#e8e8e8" stroke-width="1.5"/><text x="1873.5" y="1169.9" font-size="22.0" fill="#e4e4e4" text-anchor="end">200</text><line x1="1873.0" y1="1091.7" x2="1882.0" y2="1091.7" stroke="#e8e8e8" stroke-width="1.5"/><text x="1873.5" y="1099.7" font-size="22.0" fill="#e4e4e4" text-anchor="end">300</text><line x1="1873.0" y1="1021.4" x2="1882.0" y2="1021.4" stroke="#e8e8e8" stroke-width="1.5"/><text x="1873.5" y="1029.4" font-size="22.0" fill="#e4e4e4" text-anchor="end">400</text><line x1="1873.0" y1="951.2" x2="1882.0" y2="951.2" stroke="#e8e8e8" stroke-width="1.5"/><text x="1873.5" y="959.2" font-size="22.0" fill="#e4e4e4" text-anchor="end">500</text><line x1="1883.8" y1="1303.0" x2="1883.8" y2="1312.0" stroke="#e8e8e8" stroke-width="1.5"/><text x="1883.8" y="1334.0" font-size="22.0" fill="#e4e4e4" text-anchor="middle">0</text><line x1="2010.4" y1="1303.0" x2="2010.4" y2="1312.0" stroke="#e8e8e8" stroke-width="1.5"/><text x="2010.4" y="1334.0" font-size="22.0" fill="#e4e4e4" text-anchor="middle">20</text><line x1="2137.0" y1="1303.0" x2="2137.0" y2="1312.0" stroke="#e8e8e8" stroke-width="1.5"/><text x="2137.0" y="1334.0" font-size="22.0" fill="#e4e4e4" text-anchor="middle">40</text><line x1="2263.6" y1="1303.0" x2="2263.6" y2="1312.0" stroke="#e8e8e8" stroke-width="1.5"/><text x="2263.6" y="1334.0" font-size="22.0" fill="#e4e4e4" text-anchor="middle">60</text><line x1="2390.2" y1="1303.0" x2="2390.2" y2="1312.0" stroke="#e8e8e8" stroke-width="1.5"/><text x="2390.2" y="1334.0" font-size="22.0" fill="#e4e4e4" text-anchor="middle">80</text><line x1="2516.8" y1="1303.0" x2="2516.8" y2="1312.0" stroke="#e8e8e8" stroke-width="1.5"/><text x="2516.8" y="1334.0" font-size="22.0" fill="#e4e4e4" text-anchor="middle">100</text><polyline points="1883.8,1302.0 1893.0,1302.0 1902.1,1302.0 1911.3,1302.0 1920.5,1302.0 1929.7,1302.0 1938.8,1302.0 1948.0,1302.0 1957.2,1302.0 1966.4,1302.0 1975.5,1301.5 1984.7,1301.0 1993.9,1300.3 2003.1,1299.5 2012.2,1298.5 2021.4,1297.5 2030.6,1296.3 2039.8,1295.0 2048.9,1293.6 2058.1,1292.0 2067.3,1290.3 2076.5,1288.4 2085.6,1286.4 2094.8,1284.3 2104.0,1282.0 2113.1,1279.6 2122.3,1277.0 2131.5,1274.3 2140.7,1271.4 2149.8,1268.4 2159.0,1265.2 2168.2,1261.8 2177.4,1258.3 2186.5,1254.7 2195.7,1250.9 2204.9,1246.9 2214.1,1242.8 2223.2,1238.3 2232.4,1233.6 2241.6,1228.8 2250.8,1223.9 2259.9,1218.8 2269.1,1213.5 2278.3,1208.1 2287.5,1202.6 2296.6,1197.0 2305.8,1191.2 2315.0,1185.2 2324.1,1179.2 2333.3,1173.0 2342.5,1166.6 2351.7,1160.2 2360.8,1153.6 2370.0,1146.9 2379.2,1140.0 2388.4,1133.0 2397.5,1125.9 2406.7,1118.6 2415.9,1111.1 2425.1,1103.6 2434.2,1095.8 2443.4,1087.9 2452.6,1079.9 2461.8,1071.7 2470.9,1063.3 2480.1,1054.8 2489.3,1046.0 2498.5,1037.1 2507.6,1028.0 2516.8,1018.7" fill="none" stroke="#ffff00" stroke-width="4" stroke-linejoin="round"/><polyline points="1883.8,1301.7 1893.0,1301.7 1902.1,1301.6 1911.3,1301.5 1920.5,1301.4 1929.7,1301.2 1938.8,1300.9 1948.0,1300.5 1957.2,1300.1 1966.4,1299.6 1975.5,1298.9 1984.7,1298.2 1993.9,1297.4 2003.1,1296.5 2012.2,1295.5 2021.4,1294.4 2030.6,1293.2 2039.8,1291.9 2048.9,1290.4 2058.1,1288.9 2067.3,1287.2 2076.5,1285.4 2085.6,1283.4 2094.8,1281.4 2104.0,1279.2 2113.1,1276.9 2122.3,1274.4 2131.5,1271.8 2140.7,1269.1 2149.8,1266.3 2159.0,1263.3 2168.2,1260.1 2177.4,1256.8 2186.5,1253.4 2195.7,1249.8 2204.9,1246.1 2214.1,1242.2 2223.2,1238.1 2232.4,1233.9 2241.6,1229.6 2250.8,1225.0 2259.9,1220.4 2269.1,1215.5 2278.3,1210.5 2287.5,1205.3 2296.6,1200.0 2305.8,1194.5 2315.0,1188.8 2324.1,1183.0 2333.3,1176.9 2342.5,1170.7 2351.7,1164.4 2360.8,1157.8 2370.0,1151.1 2379.2,1144.2 2388.4,1137.1 2397.5,1129.8 2406.7,1122.3 2415.9,1114.7 2425.1,1106.9 2434.2,1098.8 2443.4,1090.6 2452.6,1082.2 2461.8,1073.6 2470.9,1064.8 2480.1,1055.9 2489.3,1046.7 2498.5,1037.3 2507.6,1027.8 2516.8,1018.0" fill="none" stroke="#8c8c8c" stroke-width="4" stroke-linejoin="round"/><rect x="57.0" y="258.0" width="805.0" height="619.0" fill="none" stroke="#a3a3a3" stroke-width="2"/><rect x="70.0" y="968.0" width="792.0" height="336.0" fill="none" stroke="#a3a3a3" stroke-width="2"/><rect x="934.0" y="260.0" width="854.0" height="320.0" fill="none" stroke="#a3a3a3" stroke-width="2"/><rect x="932.0" y="688.0" width="856.0" height="196.0" fill="none" stroke="#a3a3a3" stroke-width="2"/><rect x="932.0" y="1075.0" width="856.0" height="235.0" fill="none" stroke="#a3a3a3" stroke-width="2"/><rect x="1877.0" y="260.0" width="642.0" height="583.0" fill="none" stroke="#a3a3a3" stroke-width="2"/><rect x="1883.0" y="949.0" width="636.0" height="353.0" fill="none" stroke="#a3a3a3" stroke-width="2"/><rect x="1.0" y="1378.5" width="52" height="59.5" rx="3" fill="url(#gsw)" stroke="#7a7a7a" stroke-width="0.8"/><rect x="6.0" y="1383" width="42.5" height="36" rx="4" fill="rgb(0,0,0)" stroke="#707070" stroke-width="0.8"/><text x="27.0" y="1435.5" font-size="11.5" fill="#2c2c2c" text-anchor="middle" font-weight="bold">0</text><rect x="55.5" y="1378.5" width="52" height="59.5" rx="3" fill="url(#gsw)" stroke="#7a7a7a" stroke-width="0.8"/><rect x="60.5" y="1383" width="42.5" height="36" rx="4" fill="rgb(3,3,3)" stroke="#707070" stroke-width="0.8"/><text x="81.5" y="1435.5" font-size="11.5" fill="#2c2c2c" text-anchor="middle" font-weight="bold">1</text><rect x="110.0" y="1378.5" width="52" height="59.5" rx="3" fill="url(#gsw)" stroke="#7a7a7a" stroke-width="0.8"/><rect x="115.0" y="1383" width="42.5" height="36" rx="4" fill="rgb(4,4,4)" stroke="#707070" stroke-width="0.8"/><text x="136.0" y="1435.5" font-size="11.5" fill="#2c2c2c" text-anchor="middle" font-weight="bold">1.6</text><rect x="164.5" y="1378.5" width="52" height="59.5" rx="3" fill="url(#gsw)" stroke="#7a7a7a" stroke-width="0.8"/><rect x="169.5" y="1383" width="42.5" height="36" rx="4" fill="rgb(5,5,5)" stroke="#707070" stroke-width="0.8"/><text x="190.5" y="1435.5" font-size="11.5" fill="#2c2c2c" text-anchor="middle" font-weight="bold">2</text><rect x="219.0" y="1378.5" width="52" height="59.5" rx="3" fill="url(#gsw)" stroke="#7a7a7a" stroke-width="0.8"/><rect x="224.0" y="1383" width="42.5" height="36" rx="4" fill="rgb(6,6,6)" stroke="#707070" stroke-width="0.8"/><text x="245.0" y="1435.5" font-size="11.5" fill="#2c2c2c" text-anchor="middle" font-weight="bold">2.4</text><rect x="273.6" y="1378.5" width="52" height="59.5" rx="3" fill="url(#gsw)" stroke="#7a7a7a" stroke-width="0.8"/><rect x="278.6" y="1383" width="42.5" height="36" rx="4" fill="rgb(8,8,8)" stroke="#707070" stroke-width="0.8"/><text x="299.6" y="1435.5" font-size="11.5" fill="#2c2c2c" text-anchor="middle" font-weight="bold">3</text><rect x="328.1" y="1378.5" width="52" height="59.5" rx="3" fill="url(#gsw)" stroke="#7a7a7a" stroke-width="0.8"/><rect x="333.1" y="1383" width="42.5" height="36" rx="4" fill="rgb(10,10,10)" stroke="#707070" stroke-width="0.8"/><text x="354.1" y="1435.5" font-size="11.5" fill="#2c2c2c" text-anchor="middle" font-weight="bold">4</text><rect x="382.6" y="1378.5" width="52" height="59.5" rx="3" fill="url(#gsw)" stroke="#7a7a7a" stroke-width="0.8"/><rect x="387.6" y="1383" width="42.5" height="36" rx="4" fill="rgb(13,13,13)" stroke="#707070" stroke-width="0.8"/><text x="408.6" y="1435.5" font-size="11.5" fill="#2c2c2c" text-anchor="middle" font-weight="bold">5</text><rect x="437.1" y="1378.5" width="52" height="59.5" rx="3" fill="url(#gsw)" stroke="#7a7a7a" stroke-width="0.8"/><rect x="442.1" y="1383" width="42.5" height="36" rx="4" fill="rgb(15,15,15)" stroke="#707070" stroke-width="0.8"/><text x="463.1" y="1435.5" font-size="11.5" fill="#2c2c2c" text-anchor="middle" font-weight="bold">6</text><rect x="491.6" y="1378.5" width="52" height="59.5" rx="3" fill="url(#gsw)" stroke="#7a7a7a" stroke-width="0.8"/><rect x="496.6" y="1383" width="42.5" height="36" rx="4" fill="rgb(19,19,19)" stroke="#707070" stroke-width="0.8"/><text x="517.6" y="1435.5" font-size="11.5" fill="#2c2c2c" text-anchor="middle" font-weight="bold">7.5</text><rect x="546.1" y="1378.5" width="52" height="59.5" rx="3" fill="url(#gsw)" stroke="#7a7a7a" stroke-width="0.8"/><rect x="551.1" y="1383" width="42.5" height="36" rx="4" fill="rgb(20,20,20)" stroke="#707070" stroke-width="0.8"/><text x="572.1" y="1435.5" font-size="11.5" fill="#2c2c2c" text-anchor="middle" font-weight="bold">8</text><rect x="600.6" y="1378.5" width="52" height="59.5" rx="3" fill="url(#gsw)" stroke="#7a7a7a" stroke-width="0.8"/><rect x="605.6" y="1383" width="42.5" height="36" rx="4" fill="rgb(23,23,23)" stroke="#707070" stroke-width="0.8"/><text x="626.6" y="1435.5" font-size="11.5" fill="#2c2c2c" text-anchor="middle" font-weight="bold">9</text><rect x="655.1" y="1378.5" width="52" height="59.5" rx="3" fill="url(#gsw)" stroke="#7a7a7a" stroke-width="0.8"/><rect x="660.1" y="1383" width="42.5" height="36" rx="4" fill="rgb(26,26,26)" stroke="#707070" stroke-width="0.8"/><text x="681.1" y="1435.5" font-size="11.5" fill="#2c2c2c" text-anchor="middle" font-weight="bold">10</text><rect x="709.6" y="1378.5" width="52" height="59.5" rx="3" fill="url(#gsw)" stroke="#7a7a7a" stroke-width="0.8"/><rect x="714.6" y="1383" width="42.5" height="36" rx="4" fill="rgb(32,32,32)" stroke="#707070" stroke-width="0.8"/><text x="735.6" y="1435.5" font-size="11.5" fill="#2c2c2c" text-anchor="middle" font-weight="bold">12.5</text><rect x="764.1" y="1378.5" width="52" height="59.5" rx="3" fill="url(#gsw)" stroke="#7a7a7a" stroke-width="0.8"/><rect x="769.1" y="1383" width="42.5" height="36" rx="4" fill="rgb(38,38,38)" stroke="#707070" stroke-width="0.8"/><text x="790.1" y="1435.5" font-size="11.5" fill="#2c2c2c" text-anchor="middle" font-weight="bold">15</text><rect x="818.6" y="1378.5" width="52" height="59.5" rx="3" fill="url(#gsw)" stroke="#7a7a7a" stroke-width="0.8"/><rect x="823.6" y="1383" width="42.5" height="36" rx="4" fill="rgb(45,45,45)" stroke="#707070" stroke-width="0.8"/><text x="844.6" y="1435.5" font-size="11.5" fill="#2c2c2c" text-anchor="middle" font-weight="bold">17.6</text><rect x="873.2" y="1378.5" width="52" height="59.5" rx="3" fill="url(#gsw)" stroke="#7a7a7a" stroke-width="0.8"/><rect x="878.2" y="1383" width="42.5" height="36" rx="4" fill="rgb(51,51,51)" stroke="#707070" stroke-width="0.8"/><text x="899.2" y="1435.5" font-size="11.5" fill="#2c2c2c" text-anchor="middle" font-weight="bold">20</text><rect x="927.7" y="1378.5" width="52" height="59.5" rx="3" fill="url(#gsw)" stroke="#7a7a7a" stroke-width="0.8"/><rect x="932.7" y="1383" width="42.5" height="36" rx="4" fill="rgb(57,57,57)" stroke="#707070" stroke-width="0.8"/><text x="953.7" y="1435.5" font-size="11.5" fill="#2c2c2c" text-anchor="middle" font-weight="bold">22.4</text><rect x="982.2" y="1378.5" width="52" height="59.5" rx="3" fill="url(#gsw)" stroke="#7a7a7a" stroke-width="0.8"/><rect x="987.2" y="1383" width="42.5" height="36" rx="4" fill="rgb(64,64,64)" stroke="#707070" stroke-width="0.8"/><text x="1008.2" y="1435.5" font-size="11.5" fill="#2c2c2c" text-anchor="middle" font-weight="bold">25</text><rect x="1036.7" y="1378.5" width="52" height="59.5" rx="3" fill="url(#gsw)" stroke="#7a7a7a" stroke-width="0.8"/><rect x="1041.7" y="1383" width="42.5" height="36" rx="4" fill="rgb(70,70,70)" stroke="#707070" stroke-width="0.8"/><text x="1062.7" y="1435.5" font-size="11.5" fill="#2c2c2c" text-anchor="middle" font-weight="bold">27.5</text><rect x="1091.2" y="1378.5" width="52" height="59.5" rx="3" fill="url(#gsw)" stroke="#7a7a7a" stroke-width="0.8"/><rect x="1096.2" y="1383" width="42.5" height="36" rx="4" fill="rgb(76,76,76)" stroke="#707070" stroke-width="0.8"/><text x="1117.2" y="1435.5" font-size="11.5" fill="#2c2c2c" text-anchor="middle" font-weight="bold">30</text><rect x="1145.7" y="1378.5" width="52" height="59.5" rx="3" fill="url(#gsw)" stroke="#7a7a7a" stroke-width="0.8"/><rect x="1150.7" y="1383" width="42.5" height="36" rx="4" fill="rgb(83,83,83)" stroke="#707070" stroke-width="0.8"/><text x="1171.7" y="1435.5" font-size="11.5" fill="#2c2c2c" text-anchor="middle" font-weight="bold">32.5</text><rect x="1200.2" y="1378.5" width="52" height="59.5" rx="3" fill="url(#gsw)" stroke="#7a7a7a" stroke-width="0.8"/><rect x="1205.2" y="1383" width="42.5" height="36" rx="4" fill="rgb(89,89,89)" stroke="#707070" stroke-width="0.8"/><text x="1226.2" y="1435.5" font-size="11.5" fill="#2c2c2c" text-anchor="middle" font-weight="bold">35</text><rect x="1254.7" y="1378.5" width="52" height="59.5" rx="3" fill="url(#gsw)" stroke="#7a7a7a" stroke-width="0.8"/><rect x="1259.7" y="1383" width="42.5" height="36" rx="4" fill="rgb(96,96,96)" stroke="#707070" stroke-width="0.8"/><text x="1280.7" y="1435.5" font-size="11.5" fill="#2c2c2c" text-anchor="middle" font-weight="bold">37.6</text><rect x="1309.2" y="1378.5" width="52" height="59.5" rx="3" fill="url(#gsw)" stroke="#7a7a7a" stroke-width="0.8"/><rect x="1314.2" y="1383" width="42.5" height="36" rx="4" fill="rgb(102,102,102)" stroke="#707070" stroke-width="0.8"/><text x="1335.2" y="1435.5" font-size="11.5" fill="#2c2c2c" text-anchor="middle" font-weight="bold">40</text><rect x="1363.8" y="1378.5" width="52" height="59.5" rx="3" fill="url(#gsw)" stroke="#7a7a7a" stroke-width="0.8"/><rect x="1368.8" y="1383" width="42.5" height="36" rx="4" fill="rgb(108,108,108)" stroke="#707070" stroke-width="0.8"/><text x="1389.8" y="1435.5" font-size="11.5" fill="#2c2c2c" text-anchor="middle" font-weight="bold">42.4</text><rect x="1418.3" y="1378.5" width="52" height="59.5" rx="3" fill="url(#gsw)" stroke="#7a7a7a" stroke-width="0.8"/><rect x="1423.3" y="1383" width="42.5" height="36" rx="4" fill="rgb(115,115,115)" stroke="#707070" stroke-width="0.8"/><text x="1444.3" y="1435.5" font-size="11.5" fill="#2c2c2c" text-anchor="middle" font-weight="bold">45</text><rect x="1472.8" y="1378.5" width="52" height="59.5" rx="3" fill="url(#gsw)" stroke="#7a7a7a" stroke-width="0.8"/><rect x="1477.8" y="1383" width="42.5" height="36" rx="4" fill="rgb(121,121,121)" stroke="#707070" stroke-width="0.8"/><text x="1498.8" y="1435.5" font-size="11.5" fill="#2c2c2c" text-anchor="middle" font-weight="bold">47.5</text><rect x="1527.3" y="1378.5" width="52" height="59.5" rx="3" fill="url(#gsw)" stroke="#7a7a7a" stroke-width="0.8"/><rect x="1532.3" y="1383" width="42.5" height="36" rx="4" fill="rgb(128,128,128)" stroke="#707070" stroke-width="0.8"/><text x="1553.3" y="1435.5" font-size="11.5" fill="#2c2c2c" text-anchor="middle" font-weight="bold">50</text><rect x="1581.8" y="1378.5" width="52" height="59.5" rx="3" fill="url(#gsw)" stroke="#7a7a7a" stroke-width="0.8"/><rect x="1586.8" y="1383" width="42.5" height="36" rx="4" fill="rgb(134,134,134)" stroke="#707070" stroke-width="0.8"/><text x="1607.8" y="1435.5" font-size="11.5" fill="#2c2c2c" text-anchor="middle" font-weight="bold">52.5</text><rect x="1636.3" y="1378.5" width="52" height="59.5" rx="3" fill="url(#gsw)" stroke="#7a7a7a" stroke-width="0.8"/><rect x="1641.3" y="1383" width="42.5" height="36" rx="4" fill="rgb(140,140,140)" stroke="#707070" stroke-width="0.8"/><text x="1662.3" y="1435.5" font-size="11.5" fill="#2c2c2c" text-anchor="middle" font-weight="bold">55</text><rect x="1690.8" y="1378.5" width="52" height="59.5" rx="3" fill="url(#gsw)" stroke="#7a7a7a" stroke-width="0.8"/><rect x="1695.8" y="1383" width="42.5" height="36" rx="4" fill="rgb(147,147,147)" stroke="#707070" stroke-width="0.8"/><text x="1716.8" y="1435.5" font-size="11.5" fill="#2c2c2c" text-anchor="middle" font-weight="bold">57.6</text><rect x="1745.3" y="1378.5" width="52" height="59.5" rx="3" fill="url(#gsw)" stroke="#7a7a7a" stroke-width="0.8"/><rect x="1750.3" y="1383" width="42.5" height="36" rx="4" fill="rgb(153,153,153)" stroke="#707070" stroke-width="0.8"/><text x="1771.3" y="1435.5" font-size="11.5" fill="#2c2c2c" text-anchor="middle" font-weight="bold">60</text><rect x="1799.8" y="1378.5" width="52" height="59.5" rx="3" fill="url(#gsw)" stroke="#7a7a7a" stroke-width="0.8"/><rect x="1804.8" y="1383" width="42.5" height="36" rx="4" fill="rgb(166,166,166)" stroke="#707070" stroke-width="0.8"/><text x="1825.8" y="1435.5" font-size="11.5" fill="#2c2c2c" text-anchor="middle" font-weight="bold">65</text><rect x="1854.3" y="1378.5" width="52" height="59.5" rx="3" fill="url(#gsw)" stroke="#7a7a7a" stroke-width="0.8"/><rect x="1859.3" y="1383" width="42.5" height="36" rx="4" fill="rgb(178,178,178)" stroke="#707070" stroke-width="0.8"/><text x="1880.3" y="1435.5" font-size="11.5" fill="#2c2c2c" text-anchor="middle" font-weight="bold">70</text><rect x="1908.8" y="1378.5" width="52" height="59.5" rx="3" fill="url(#gsw)" stroke="#7a7a7a" stroke-width="0.8"/><rect x="1913.8" y="1383" width="42.5" height="36" rx="4" fill="rgb(191,191,191)" stroke="#707070" stroke-width="0.8"/><text x="1934.8" y="1435.5" font-size="11.5" fill="#2c2c2c" text-anchor="middle" font-weight="bold">75</text><rect x="1963.4" y="1378.5" width="52" height="59.5" rx="3" fill="url(#gsw)" stroke="#7a7a7a" stroke-width="0.8"/><rect x="1968.4" y="1383" width="42.5" height="36" rx="4" fill="rgb(204,204,204)" stroke="#707070" stroke-width="0.8"/><text x="1989.4" y="1435.5" font-size="11.5" fill="#2c2c2c" text-anchor="middle" font-weight="bold">80</text><rect x="2017.9" y="1378.5" width="52" height="59.5" rx="3" fill="url(#gsw)" stroke="#7a7a7a" stroke-width="0.8"/><rect x="2022.9" y="1383" width="42.5" height="36" rx="4" fill="rgb(217,217,217)" stroke="#707070" stroke-width="0.8"/><text x="2043.9" y="1435.5" font-size="11.5" fill="#2c2c2c" text-anchor="middle" font-weight="bold">85</text><rect x="2072.4" y="1378.5" width="52" height="59.5" rx="3" fill="url(#gsw)" stroke="#7a7a7a" stroke-width="0.8"/><rect x="2077.4" y="1383" width="42.5" height="36" rx="4" fill="rgb(230,230,230)" stroke="#707070" stroke-width="0.8"/><text x="2098.4" y="1435.5" font-size="11.5" fill="#2c2c2c" text-anchor="middle" font-weight="bold">90</text><rect x="2126.9" y="1378.5" width="52" height="59.5" rx="3" fill="url(#gsw)" stroke="#7a7a7a" stroke-width="0.8"/><rect x="2131.9" y="1383" width="42.5" height="36" rx="4" fill="rgb(242,242,242)" stroke="#707070" stroke-width="0.8"/><text x="2152.9" y="1435.5" font-size="11.5" fill="#2c2c2c" text-anchor="middle" font-weight="bold">95</text><rect x="2181.4" y="1378" width="53" height="60" rx="3" fill="#2a2a2a"/><rect x="2186.9" y="1382.5" width="42.5" height="36.5" rx="4" fill="#f4f4f8" stroke="#cfcfcf" stroke-width="1"/><text x="2207.9" y="1435.5" font-size="11.5" fill="#ffffff" text-anchor="middle" font-weight="bold">100</text><rect x="2237.5" y="1378.5" width="47" height="59" rx="3" fill="url(#gsw)" stroke="#7a7a7a" stroke-width="0.8"/><line x1="2238.0" y1="1396.5" x2="2284.0" y2="1396.5" stroke="#3a3a3a" stroke-width="1.2"/><circle cx="2261" cy="1387.5" r="7" fill="#8a8a8a"/><polygon points="2256,1390 2266,1390 2261,1385" fill="#111"/><rect x="2246" y="1402" width="31" height="32" rx="4" fill="#111" stroke="#000" stroke-width="1.5"/><rect x="2248.0" y="1404.0" width="27.0" height="14.0" fill="#2e2e2e"/><rect x="2286.0" y="1378" width="46.0" height="29.5" fill="url(#gsw)" stroke="#6a6a6a" stroke-width="0.8"/><circle cx="2309.0" cy="1392.5" r="9.5" fill="#9a9a9a" opacity="0.5"/><rect x="2333.0" y="1378" width="44.0" height="29.5" fill="url(#gsw)" stroke="#6a6a6a" stroke-width="0.8"/><circle cx="2355.0" cy="1392.5" r="9.5" fill="#9a9a9a" opacity="0.5"/><rect x="2378.0" y="1378" width="44.0" height="29.5" fill="url(#gsw)" stroke="#6a6a6a" stroke-width="0.8"/><circle cx="2400.0" cy="1392.5" r="9.5" fill="#9a9a9a" opacity="0.5"/><rect x="2422.0" y="1378" width="45.0" height="29.5" fill="url(#gsw)" stroke="#6a6a6a" stroke-width="0.8"/><circle cx="2444.5" cy="1392.5" r="9.5" fill="#9a9a9a" opacity="0.5"/><rect x="2307.0" y="1389.0" width="8.0" height="8.0" fill="#1a1a1a"/><polygon points="2352.5,1387 2352.5,1398 2361,1392.5" fill="#1a1a1a"/><text x="2400.0" y="1397.0" font-size="11.0" fill="#1a1a1a" text-anchor="middle" font-weight="bold">[··]</text><path d="M2444.3 1392.8c-2.2-3.2-7-3.2-7 0s4.8 3.2 7 0s7-3.2 7 0s-4.8 3.2-7 0z" fill="none" stroke="#1a1a1a" stroke-width="2.2"/><rect x="2467.0" y="1378.0" width="45.0" height="29.5" fill="#2c2c2c"/><circle cx="2489.5" cy="1392.8" r="10" fill="#333"/><path d="M2483.5 1390.5a6.5 6.5 0 0 1 11.5-2.5M2495.5 1395a6.5 6.5 0 0 1-11.5 2.5" fill="none" stroke="#1e1e1e" stroke-width="2.6"/><polygon points="2496.5,1384 2497,1391 2490.5,1389.5" fill="#1e1e1e"/><polygon points="2482.5,1401.5 2482,1394.5 2488.5,1396" fill="#1e1e1e"/><rect x="2515.0" y="1380.0" width="42.0" height="27.0" fill="#5c5c5c"/><text x="2536.0" y="1398.8" font-size="16.0" fill="#f4f4f4" text-anchor="middle" textLength="28.0" lengthAdjust="spacingAndGlyphs">123</text><rect x="2286" y="1408.5" width="136" height="29.5" rx="2" fill="url(#gsw2)" stroke="#6a6a6a" stroke-width="0.8"/><rect x="2422" y="1408.5" width="135" height="29.5" rx="2" fill="url(#gsw2)" stroke="#6a6a6a" stroke-width="0.8"/><circle cx="2317" cy="1424" r="9.5" fill="#9a9a9a" opacity="0.6"/><circle cx="2530.3" cy="1424" r="9.5" fill="#9a9a9a" opacity="0.6"/><text x="2317.0" y="1429.5" font-size="17.0" fill="#222" text-anchor="middle" font-weight="bold">«</text><text x="2530.3" y="1429.5" font-size="17.0" fill="#222" text-anchor="middle" font-weight="bold">»</text><text x="2368.8" y="1431.6" font-size="21.0" fill="#2a2a2a" text-anchor="middle" textLength="50.0" lengthAdjust="spacingAndGlyphs" font-weight="bold">Back</text><text x="2476.2" y="1431.6" font-size="21.0" fill="#2a2a2a" text-anchor="middle" textLength="51.8" lengthAdjust="spacingAndGlyphs" font-weight="bold">Next</text><rect x="213.0" y="284.4" width="21.2" height="21.2" fill="none" stroke="#f4f4f4" stroke-width="2.2"/><rect x="319.9" y="294.8" width="21.2" height="21.2" fill="none" stroke="#f4f4f4" stroke-width="2.2"/><rect x="649.9" y="326.9" width="21.2" height="21.2" fill="none" stroke="#f4f4f4" stroke-width="2.2"/><rect x="230.1" y="395.1" width="21.2" height="21.2" fill="none" stroke="#f4f4f4" stroke-width="2.2"/><rect x="454.9" y="524.9" width="21.2" height="21.2" fill="none" stroke="#f4f4f4" stroke-width="2.2"/><rect x="279.9" y="701.9" width="21.2" height="21.2" fill="none" stroke="#f4f4f4" stroke-width="2.2"/><rect x="312.1" y="383.4" width="19.6" height="19.6" fill="none" stroke="#000" stroke-width="2.4"/><circle cx="228.0" cy="293.1" r="6.4" fill="#2aa82a" stroke="#000" stroke-width="1.6"/><circle cx="327.9" cy="303.2" r="6.4" fill="#c4c40e" stroke="#000" stroke-width="1.6"/><circle cx="666.0" cy="335.0" r="6.4" fill="#c82020" stroke="#000" stroke-width="1.6"/><circle cx="244.6" cy="400.9" r="6.4" fill="#14b4be" stroke="#000" stroke-width="1.6"/><circle cx="319.8" cy="390.8" r="6.4" fill="#f0f0f4" stroke="#000" stroke-width="1.6"/><circle cx="462.0" cy="547.5" r="6.4" fill="#a010a0" stroke="#000" stroke-width="1.6"/><circle cx="300.5" cy="711.0" r="6.4" fill="#1818b0" stroke="#000" stroke-width="1.6"/><circle cx="339.0" cy="386.8" r="6.8" fill="#000" stroke="#000" stroke-width="0.0"/><circle cx="382.3" cy="1075.7" r="7.4" fill="#000" stroke="#000" stroke-width="0.0"/><circle cx="402.9" cy="1090.2" r="7.4" fill="#000" stroke="#000" stroke-width="0.0"/><circle cx="414.2" cy="1085.0" r="7.4" fill="#000" stroke="#000" stroke-width="0.0"/><circle cx="363.7" cy="1123.9" r="7.4" fill="#000" stroke="#000" stroke-width="0.0"/><circle cx="401.2" cy="1132.4" r="7.4" fill="#000" stroke="#000" stroke-width="0.0"/><circle cx="666.2" cy="1099.1" r="7.4" fill="#000" stroke="#000" stroke-width="0.0"/><circle cx="436.0" cy="1111.0" r="6.6" fill="#111" stroke="#000" stroke-width="1.6"/><circle cx="449.0" cy="1110.6" r="6.6" fill="#1e1e1e" stroke="#000" stroke-width="1.6"/><circle cx="460.0" cy="1111.7" r="6.6" fill="#1a1a1a" stroke="#000" stroke-width="1.6"/><circle cx="462.0" cy="1114.6" r="6.6" fill="#2a2a2a" stroke="#000" stroke-width="1.6"/><circle cx="436.7" cy="1116.7" r="6.6" fill="#121212" stroke="#000" stroke-width="1.6"/><circle cx="439.0" cy="1122.0" r="6.6" fill="#141414" stroke="#000" stroke-width="1.6"/><circle cx="447.5" cy="1122.5" r="6.6" fill="#3a3a3a" stroke="#000" stroke-width="1.6"/><circle cx="440.0" cy="1134.5" r="6.6" fill="#f4f4f4" stroke="#000" stroke-width="1.6"/><circle cx="444.0" cy="1135.5" r="6.6" fill="#dddddd" stroke="#000" stroke-width="1.6"/><circle cx="451.0" cy="1133.0" r="6.6" fill="#e4e4e4" stroke="#000" stroke-width="1.6"/><circle cx="455.0" cy="1132.0" r="6.6" fill="#aaaaaa" stroke="#000" stroke-width="1.6"/><circle cx="443.3" cy="1132.5" r="6.6" fill="#f6f6f6" stroke="#000" stroke-width="1.6"/><rect x="454.0" y="1124.2" width="20.4" height="20.4" fill="none" stroke="#000" stroke-width="2.2"/></svg></div></body></html>
